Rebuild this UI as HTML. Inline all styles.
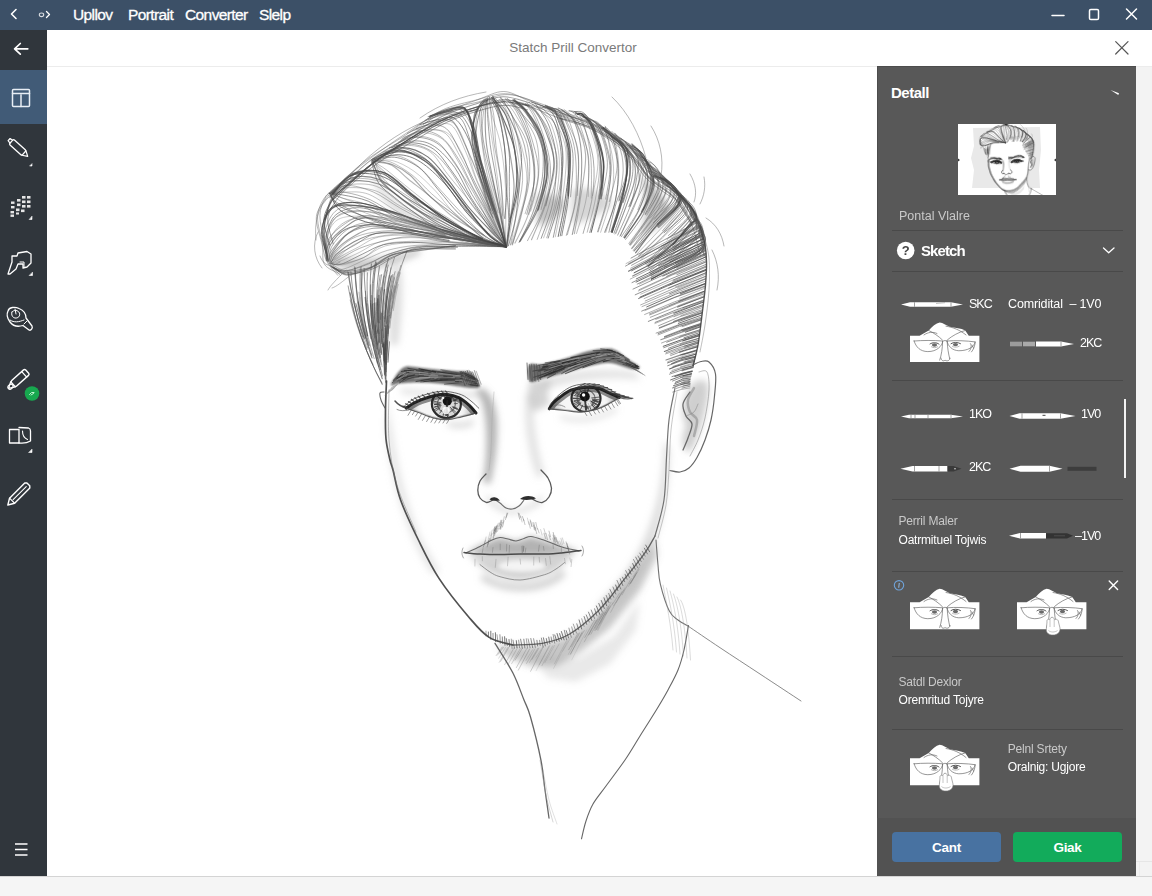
<!DOCTYPE html>
<html lang="en">
<head>
<meta charset="utf-8">
<title>Sketch Portrait Converter</title>
<style>
*{box-sizing:border-box;margin:0;padding:0}
html,body{width:1152px;height:896px;overflow:hidden;background:#f3f3f3;font-family:"Liberation Sans",sans-serif;}
#app{position:relative;width:1152px;height:896px;overflow:hidden;background:#f3f3f3}
.abs{position:absolute}
#titlebar{left:0;top:0;width:1152px;height:30px;background:#3c5067;color:#fff}
#titlebar .m{position:absolute;top:5px;font-size:15.5px;line-height:20px;color:#fff;white-space:nowrap;letter-spacing:-0.6px;-webkit-text-stroke:0.3px #fff}
#sidebar{left:0;top:30px;width:47px;height:846px;background:#30363c}
#sidebar .sel{position:absolute;left:0;top:39.500px;width:47px;height:54.500px;background:#415b77}
#header{left:47px;top:30px;width:1105px;height:37px;background:#fff;border-bottom:1px solid #ececec}
#header .t{position:absolute;left:0;width:1052px;top:9.500px;text-align:center;font-size:13.5px;line-height:16px;color:#7a7a7a;letter-spacing:0}
#canvas{left:47px;top:67px;width:831px;height:809px;background:#fff}
#rstrip{left:1136px;top:67px;width:16px;height:809px;background:#f3f3f3}
#panel{left:877px;top:66px;width:259px;height:810px;background:#585858;color:#fff;box-shadow:inset 1px 1px 0 #4c4c4c}
#panel .foot{position:absolute;left:0;top:752px;width:259px;height:58px;background:#525252}
#panel .hr{position:absolute;left:15px;width:231px;height:1px;background:#494949}
#panel .tx{position:absolute;white-space:nowrap;line-height:14px;font-size:12px;letter-spacing:-0.2px}
#panel .g{color:#c9c9c9}
#panel .w{color:#fff}
#panel .lb{position:absolute;white-space:nowrap;font-size:12.5px;line-height:14px;color:#fff;letter-spacing:-1px}
.btn{position:absolute;top:766px;height:30px;width:109px;border-radius:4px;color:#fff;font-size:13.500px;font-weight:bold;text-align:center;line-height:32px;letter-spacing:-0.3px}
#bottom{left:0;top:876px;width:1152px;height:20px;background:#f5f5f5;border-top:1px solid #d4d4d4}
svg{position:absolute;overflow:visible}
</style>
</head>
<body>
<div id="app">
<!-- ===== title bar ===== -->
<div id="titlebar" class="abs">
  <svg style="left:0;top:0" width="1152" height="30" viewBox="0 0 1152 30" fill="none" stroke="#fff" stroke-width="1.6" stroke-linecap="round" stroke-linejoin="round">
    <path d="M16 9.5 L11.5 14 L16 18.5"/>
    <path d="M46.5 11.5 L49.5 14.5 L46.5 17.5" stroke-width="1.3"/>
    <ellipse cx="41.5" cy="14.8" rx="2.2" ry="1.8" stroke-width="1.1" opacity=".8"/>
    <path d="M1052 15.5 H1064" stroke-width="1.5"/>
    <rect x="1089.5" y="9.5" width="9" height="10" rx="1.3" stroke-width="1.5"/>
    <path d="M1126.5 9 L1136.5 19 M1136.5 9 L1126.5 19" stroke-width="1.5"/>
  </svg>
  <span class="m" style="left:73px">Upllov</span>
  <span class="m" style="left:128px">Portrait</span>
  <span class="m" style="left:185px">Converter</span>
  <span class="m" style="left:259px">Slelp</span>
</div>

<!-- ===== header row ===== -->
<div id="header" class="abs">
  <div class="t">Statch Prill Convertor</div>
  <svg style="left:1068px;top:11px" width="14" height="14" viewBox="0 0 14 14" fill="none" stroke="#555" stroke-width="1.2" stroke-linecap="round"><path d="M0.7 0.7 L13 13 M13 0.7 L0.7 13"/></svg>
</div>

<!-- ===== canvas ===== -->
<div id="canvas" class="abs"></div>
<div id="rstrip" class="abs"><div style="position:absolute;left:0;top:794px;width:16px;height:1px;background:#e6e6e6"></div><div style="position:absolute;left:3px;top:795px;width:1px;height:14px;background:#ececec"></div></div>

<!-- ===== sidebar ===== -->
<div id="sidebar" class="abs">
  <div class="sel"></div>
  <svg style="left:0;top:0" width="47" height="846" viewBox="0 30 47 846" fill="none" stroke="#fff" stroke-width="1.5" stroke-linecap="round" stroke-linejoin="round">
    <!-- back arrow -->
    <path d="M27.800 48.800 H15 M20.300 43.500 L14.600 48.800 L20.300 54.100" stroke-width="1.700"/>
    <!-- layout icon -->
    <rect x="12.5" y="89.500" width="17" height="17" rx="1" stroke="#e8eef5"/>
    <path d="M12.500 93.500 H29.500 M21 95 V106.500" stroke="#e8eef5"/>
    <!-- pen -->
    <g transform="translate(19.500 149) rotate(42)">
      <rect x="-11" y="-3.300" width="17" height="6.600" rx="1.200" stroke-width="1.300"/>
      <path d="M6 -3 L11 0 L6 3 M-11 -2 L-14 -1.500 L-14 1.500 L-11 2" stroke-width="1.200"/>
    </g>
    <path d="M30 166 L32 166 L32 164 Z" fill="#fff" stroke-width=".6"/>
    <!-- grid -->
    <g fill="#e6e6e6" stroke="none">
      <rect x="22" y="196" width="3.500" height="2.600"/><rect x="27" y="196" width="3.500" height="2.600"/>
      <rect x="17" y="199" width="3.500" height="2.600"/><rect x="22" y="200.500" width="3.500" height="2.600"/><rect x="27" y="200.500" width="3.500" height="2.600"/>
      <rect x="11" y="201.500" width="3.500" height="2.400"/>
      <rect x="17" y="203.500" width="3.500" height="2.600"/><rect x="22" y="205" width="3.500" height="2.600"/><rect x="27" y="205" width="3.500" height="2.600"/>
      <rect x="11" y="206" width="3.500" height="2.400"/>
      <rect x="16" y="208.500" width="3.500" height="2.600"/><rect x="21" y="209.500" width="3.500" height="2.600"/>
      <rect x="10.500" y="211" width="3.500" height="2.400"/><rect x="10.500" y="214.500" width="3.500" height="2.400"/>
      <rect x="16" y="212.500" width="3" height="2"/>
    </g>
    <path d="M29.500 219.500 L32 219.500 L32 216.500 Z" fill="#fff" stroke-width=".6"/>
    <!-- shape -->
    <path d="M17 256 L18 253 L27 251.500 L31 254 L31 263 L27 267 L23 268 L23 264 L18 264 L16 269 L10 274 L8 274 L10 268 L12 262 L12 256 Z" stroke-width="1.300"/>
    <path d="M20 262 L24 262 L24 267" stroke-width="1"/>
    <path d="M29.500 275.500 L32.500 275.500 L32.500 272.500 Z" fill="#fff" stroke-width=".6"/>
    <!-- bulb/blob -->
    <path d="M8 311 C9 307 15 306.500 19 308.500 C24 310.500 26 314 26 318 L32 326 C33 328 31 331 29 330 L23 325.500 C18 327 13 326 10 322 C7 318 6.500 314 8 311 Z" stroke-width="1.300"/>
    <path d="M12 312 C14 309.500 18 310 19.500 313 C20.500 316 18 318.500 15 318 C12.500 317.500 11 315 12 312 Z M10 320 C14 323 19 322 24 320 M15 309 L16 314 M24 324 L27 321" stroke-width="1"/>
    <!-- pencil with green dot -->
    <g transform="translate(19 379) rotate(-42)">
      <rect x="-8" y="-3.700" width="19" height="7.400" rx="1.500" stroke-width="1.400"/>
      <path d="M-8 -3.500 L-14 0 L-8 3.500 M7 -3.700 V3.700" stroke-width="1.300"/>
      <ellipse cx="-11.500" cy="0" rx="2.800" ry="2.200" stroke-width="1.100"/>
    </g>
    <circle cx="32" cy="393.500" r="7.300" fill="#17a84f" stroke="none"/>
    <path d="M29.500 394.500 L31.500 392.500 L34 392.500 M31 395 L33.500 393.500" stroke="#bff5d2" stroke-width="1"/>
    <!-- two pages -->
    <path d="M9.500 429.500 H19 V443 H9.500 Z" stroke-width="1.300"/>
    <path d="M19 427.500 L28.500 428 C30 428.500 30.500 430 30.500 431 V441 C28 442.500 23 443.500 19 443" stroke-width="1.300"/>
    <path d="M22.500 431 C22.500 435 24 438 27.500 439.500" stroke-width="1.100"/>
    <path d="M29 452.500 L32 452.500 L32 449.500 Z" fill="#fff" stroke-width=".6"/>
    <!-- pencil -->
    <g transform="translate(18.800 494) rotate(-45)">
      <path d="M-9.500 -3.600 H12 L13.500 -2 V2 L12 3.600 H-9.500 L-15.500 0 Z" stroke-width="1.400"/>
      <path d="M-9.500 -3.600 V3.600 M-8 0 H10.500" stroke-width="1.100"/>
    </g>
    <!-- hamburger -->
    <path d="M15 844 H27.500 M15 849.500 H27.500 M15 855 H27.500" stroke-width="1.600" stroke-linecap="butt"/>
  </svg>
</div>

<div id="bottom" class="abs"></div>
<svg class="abs" style="left:0;top:0" width="1152" height="896" viewBox="0 0 1152 896" fill="none" stroke-linecap="round" stroke-linejoin="round">
<defs>
<filter id="bl1" x="-20%" y="-20%" width="140%" height="140%"><feGaussianBlur stdDeviation="0.8"/></filter>
<filter id="bl2" x="-20%" y="-50%" width="140%" height="200%"><feGaussianBlur stdDeviation="2"/></filter>
<filter id="bl4" x="-5%" y="-5%" width="110%" height="110%"><feGaussianBlur stdDeviation="3.5"/></filter>
</defs>
<g id="portrait">
<path d="M505.6 246.8C494 243.6 455.1 233.8 436.1 227.9C417.2 222.1 405.2 215.9 391.8 211.7C378.5 207.5 366.1 203.2 356.1 202.7C346.2 202.1 337.9 203.6 332.1 208.4C326.4 213.1 322.3 223.1 321.5 231.3C320.7 239.4 326.5 253.1 327.5 257.5" stroke="#585858" stroke-width="0.9" opacity="0.74"/>
<path d="M436.8 230C429.4 227.3 406.1 217.6 392.7 213.6C379.2 209.6 365.7 206.4 356.1 206C346.5 205.6 340.6 206.6 335.3 211.3C330 215.9 325.9 225.9 324.4 233.9C322.9 241.9 326 254.9 326.3 259" stroke="#585858" stroke-width="0.8" opacity="0.55"/>
<path d="M505.9 246.4C494.9 243.5 458.3 234 439.6 229.2C421 224.4 407.1 221.2 393.8 217.6C380.5 214 369.5 208.2 359.8 207.7C350.1 207.3 341.3 210.2 335.8 214.9C330.2 219.6 328.1 228.2 326.5 235.9C324.9 243.5 326.3 256.5 326.3 260.6" stroke="#585858" stroke-width="0.9" opacity="0.67"/>
<path d="M506 246C495.1 243.5 458.8 235.4 440.4 230.9C422 226.3 409 222.1 395.5 218.7C381.9 215.4 368.9 211.1 359.1 210.7C349.3 210.3 342.3 212 336.7 216.4C331.1 220.8 326.8 230.1 325.4 237.2C324 244.4 327.9 255.6 328.4 259.3" stroke="#585858" stroke-width="1" opacity="0.40"/>
<path d="M506.6 247C495.4 244.2 458 235.3 439.7 230.3C421.5 225.3 410.2 220.3 397.2 217.1C384.1 213.9 371.5 211.2 361.4 211.2C351.3 211.2 342.2 212.9 336.6 217.1C331 221.3 329.4 229.4 327.8 236.4C326.1 243.5 326.8 255.5 326.5 259.4" stroke="#585858" stroke-width="1" opacity="0.41"/>
<path d="M506.5 247C495.8 244.2 460.9 235.1 442.7 230.6C424.4 226 410.1 222 397.1 219.6C384 217.2 374.2 216.1 364.3 216.1C354.5 216.1 344.4 215.8 338 219.5C331.7 223.2 328.2 231.5 326.4 238.2C324.6 245 327.3 256.5 327.4 260.2" stroke="#585858" stroke-width="0.8" opacity="0.38"/>
<path d="M442.5 232.1C435.2 230.5 412.1 224.5 398.7 222C385.3 219.6 371.6 217.2 362.1 217.5C352.6 217.9 347.2 220.4 341.7 224.1C336.3 227.9 331.8 234.4 329.4 240.2C327 246 327.7 255.8 327.4 259" stroke="#585858" stroke-width="1" opacity="0.40"/>
<path d="M505.6 246.4C494.8 243.8 458.5 235 440.6 230.7C422.6 226.5 410.4 223.4 397.7 220.9C385.1 218.4 373.6 215 364.5 215.7C355.5 216.4 349.5 220.7 343.3 224.9C337.2 229.2 330.2 235.1 327.6 241C324.9 246.8 327.4 256.8 327.4 260" stroke="#585858" stroke-width="0.7" opacity="0.67"/>
<path d="M506 246.1C495.2 243.9 459.3 236.4 441.5 232.9C423.7 229.5 412.1 227.8 399.4 225.3C386.6 222.8 374.3 217.6 365.3 217.9C356.2 218.2 351.4 222.7 345.2 227.1C339.1 231.4 331.7 238.3 328.6 243.9C325.5 249.5 327 258 326.6 260.8" stroke="#585858" stroke-width="1.1" opacity="0.67"/>
<path d="M444.8 234.3C437.7 232.7 415.3 226.4 402.2 224.5C389.2 222.5 375.9 221.7 366.6 222.7C357.3 223.6 352.3 226.2 346.5 230.1C340.8 234.1 334.9 241.3 331.9 246.3C329 251.3 329.4 257.8 329 260.1" stroke="#585858" stroke-width="0.9" opacity="0.50"/>
<path d="M505.7 246.3C495.6 244.7 462.3 239.6 445 236.6C427.6 233.5 414.1 229.9 401.7 228C389.4 226 380.2 224.6 370.8 224.8C361.3 225.1 351.9 226 345.2 229.4C338.5 232.7 333.3 239.7 330.3 245C327.4 250.4 328 258.8 327.5 261.5" stroke="#585858" stroke-width="1.1" opacity="0.67"/>
<path d="M445.8 237.4C438.9 236 417 231.3 404.5 229.1C392 226.9 379.9 223.8 370.6 224.4C361.3 225.1 355 228.5 348.9 232.8C342.7 237.1 337.2 245.6 333.8 250.3C330.4 255 329.3 259.4 328.4 261.2" stroke="#585858" stroke-width="1.1" opacity="0.63"/>
<path d="M505.6 247.1C495.8 245 463.5 237.5 446.8 234.8C430.1 232.1 417.7 232.2 405.3 230.8C392.8 229.4 381.6 225.9 372.1 226.3C362.7 226.7 355.6 229.2 348.7 233.3C341.9 237.5 334.5 246.5 331.2 251.2C328 256 329.6 260 329.3 261.8" stroke="#585858" stroke-width="1.1" opacity="0.53"/>
<path d="M505.7 246.3C495.7 244.6 462.3 239 445.7 236.3C429 233.5 417.9 231.2 405.8 229.9C393.7 228.5 382 227 373.1 228.3C364.2 229.5 358.7 233.4 352.2 237.3C345.7 241.2 337.9 247.8 334.3 251.9C330.6 256 331 260.2 330.3 261.8" stroke="#585858" stroke-width="1.1" opacity="0.55"/>
<path d="M445.8 235.9C439.4 235 419.3 231.2 407.4 230.6C395.5 229.9 383.6 230.7 374.4 232.1C365.1 233.5 358.4 235.4 351.9 238.8C345.3 242.3 338.8 249.3 335.2 253C331.5 256.7 330.9 259.8 330.1 261.1" stroke="#585858" stroke-width="0.9" opacity="0.46"/>
<path d="M448.8 240.4C441.9 239.3 419.3 235 407.1 233.8C395 232.7 384.9 232.2 376 233.5C367.2 234.8 360.7 238.3 354 241.8C347.4 245.3 340.1 250.9 336.2 254.4C332.3 258 331.7 261.7 330.8 263.2" stroke="#585858" stroke-width="1.1" opacity="0.70"/>
<path d="M506.5 247C496.6 245.5 463.3 240.2 446.9 237.8C430.5 235.4 419.8 233.5 408 232.8C396.2 232.1 384.9 231.3 376.1 233.3C367.3 235.4 361.4 241.4 355.1 244.9C348.8 248.4 342.5 251.4 338.4 254.4C334.3 257.5 331.6 261.8 330.3 263.3" stroke="#585858" stroke-width="0.8" opacity="0.68"/>
<path d="M448.8 241.8C442.4 240.5 422.1 235 410.3 234.1C398.4 233.3 387.1 234.9 377.8 236.6C368.6 238.2 361.7 240.6 354.8 244.1C348 247.7 341.1 254.7 336.7 257.8C332.3 261 329.8 262.3 328.4 263.2" stroke="#585858" stroke-width="0.9" opacity="0.39"/>
<path d="M506 246.1C496.9 245.4 467.3 243.7 451.6 241.9C436 240.2 424.2 236.4 412.1 235.6C399.9 234.8 387.8 235.2 378.8 237.1C369.9 239 365.3 243.5 358.3 247.1C351.3 250.7 341.6 255.7 337.1 258.6C332.5 261.4 332.2 263.3 331.3 264.3" stroke="#585858" stroke-width="0.8" opacity="0.43"/>
<path d="M506.2 246.1C496.6 245.5 464.4 243.8 448.5 242.2C432.6 240.6 421.8 236.9 410.8 236.7C399.9 236.5 391.3 239.3 382.8 241.3C374.2 243.2 366.7 245.5 359.7 248.3C352.7 251.2 345.5 256.1 340.8 258.6C336 261.1 332.9 262.6 331.3 263.5" stroke="#585858" stroke-width="0.8" opacity="0.57"/>
<path d="M449.8 240.5C443.2 240 422 237.5 410.5 237.6C399.1 237.8 389.5 239 380.8 241.5C372.2 244 365.7 249.3 358.8 252.7C351.8 256 344.1 259.7 339.2 261.5C334.3 263.3 331.1 263 329.4 263.3" stroke="#585858" stroke-width="0.7" opacity="0.47"/>
<path d="M506.1 246.2C497 246 467.3 245.3 451.6 244.7C435.8 244.1 423 242.4 411.6 242.4C400.3 242.4 391.6 242.8 383.5 244.7C375.3 246.6 369.8 250.7 362.7 254C355.7 257.2 346.3 262.6 341.2 264.2C336.1 265.9 333.6 263.8 332.1 263.7" stroke="#585858" stroke-width="1" opacity="0.62"/>
<path d="M505.8 246.1C496.6 245.4 465.9 242.6 450.7 241.8C435.6 241 426.1 240.7 414.9 241.2C403.7 241.6 391.9 241.8 383.4 244.5C374.9 247.2 370.6 254.3 363.8 257.5C357 260.7 348.1 262.7 342.5 263.8C336.8 264.8 332.1 263.7 330 263.7" stroke="#585858" stroke-width="0.9" opacity="0.43"/>
<path d="M506.6 247.2C497.6 246.5 467.9 243.9 453 243.1C438 242.4 428 242.1 416.7 242.6C405.4 243 394.3 243.4 385.4 245.9C376.4 248.4 370.3 254.6 363.2 257.8C356 260.9 347.9 263.9 342.6 264.8C337.2 265.7 332.9 263.4 331 263.1" stroke="#585858" stroke-width="0.8" opacity="0.41"/>
<path d="M505.4 246.4C496.6 246.2 467.2 245.3 452.2 245.1C437.3 245 426.5 244.6 415.8 245.4C405 246.3 395.9 248.1 387.7 250.3C379.4 252.6 373.8 256.1 366.3 259.2C358.8 262.3 348.6 268.2 342.6 269.2C336.5 270.3 332.2 266.1 330.1 265.5" stroke="#585858" stroke-width="1" opacity="0.39"/>
<path d="M506.2 246.9C497.7 246.5 470.4 244.5 455.6 244.5C440.8 244.4 428.2 245 417.3 246.5C406.5 248.1 398.6 250.9 390.4 253.7C382.3 256.5 375.7 260.5 368.3 263.3C360.9 266.1 352.2 270.2 346.2 270.4C340.1 270.6 334.4 265.4 332 264.4" stroke="#585858" stroke-width="0.8" opacity="0.58"/>
<path d="M455.2 246.7C449 246.8 429.6 245.7 418.4 247C407.1 248.3 396 251.7 387.7 254.5C379.4 257.3 375.7 261.2 368.6 263.9C361.5 266.7 351.5 270.6 345.1 271C338.7 271.3 332.7 266.9 330.2 266" stroke="#585858" stroke-width="0.9" opacity="0.56"/>
<path d="M457.5 247.2C451 247.5 429.5 247.2 418.6 248.9C407.7 250.5 400.4 254 392.3 257.1C384.2 260.2 378 265.1 370 267.5C362 269.8 351 271.3 344.5 271.1C338 270.9 333.3 267.2 331.1 266.4" stroke="#585858" stroke-width="0.9" opacity="0.72"/>
<path d="M505.7 246.8C502 245.8 493.5 245.1 483.5 240.7C473.5 236.3 457.5 227.9 445.5 220.3C433.5 212.6 422.3 202.3 411.5 195C400.8 187.6 391.2 179.4 381.2 176.1C371.2 172.9 359.8 172.6 351.6 175.3C343.5 178.1 335.5 189.7 332.3 192.6" stroke="#585858" stroke-width="1" opacity="0.81"/>
<path d="M482.7 238.9C476.3 235.8 456.8 226.6 444.6 220C432.4 213.5 420.5 206.5 409.6 199.7C398.7 193 388.9 183.1 379.2 179.5C369.6 175.8 359.6 175.6 351.7 177.8C343.7 180.1 335 190.6 331.6 193.2" stroke="#585858" stroke-width="1.2" opacity="0.70"/>
<path d="M506 246.5C501.5 245.2 489.7 242.9 479.1 238.7C468.5 234.5 454 228.3 442.5 221.4C430.9 214.5 420 204.1 409.7 197.5C399.4 190.8 390.7 184.5 380.6 181.5C370.6 178.6 357.6 177.3 349.5 179.5C341.3 181.8 334.6 192.6 331.6 195.2" stroke="#585858" stroke-width="0.8" opacity="0.51"/>
<path d="M506.1 246.4C501.3 245.3 488.5 243.4 477.2 239.3C465.9 235.3 450.2 228.4 438.5 222.3C426.7 216.1 416.8 208.7 406.8 202.3C396.9 196 388.5 187.5 378.7 184.1C369 180.6 356.6 180.1 348.5 181.7C340.3 183.3 333.1 191.6 330.1 193.6" stroke="#585858" stroke-width="1.1" opacity="0.68"/>
<path d="M506.5 247.1C501.5 246.1 488.1 244.8 476.6 241.2C465.1 237.6 449.3 231.4 437.2 225.5C425.1 219.6 414.2 212.4 404.1 205.8C393.9 199.3 385.9 189.8 376.4 186.3C366.9 182.9 354.6 183.8 346.9 185C339.1 186.3 332.7 192.4 329.9 193.9" stroke="#585858" stroke-width="0.8" opacity="0.48"/>
<path d="M473.8 240.6C467.6 237.9 448.7 230.2 436.5 224.5C424.4 218.8 411 212 400.8 206.4C390.6 200.8 384.6 193.9 375.5 190.8C366.4 187.7 353.6 187.2 346.4 187.8C339.2 188.3 334.8 192.8 332.5 193.8" stroke="#585858" stroke-width="0.8" opacity="0.45"/>
<path d="M505.5 246.3C500.1 245.4 484.2 243.8 472.8 240.7C461.5 237.5 449.6 232.8 437.6 227.4C425.6 222 411.6 214.4 400.9 208.5C390.1 202.5 382.2 195.7 373.1 191.9C364 188.1 353.5 185 346.4 185.6C339.2 186.2 333 193.8 330.3 195.4" stroke="#585858" stroke-width="0.8" opacity="0.55"/>
<path d="M505.7 246.3C499.9 245.3 482.9 242.9 470.8 240.1C458.8 237.3 445.3 234 433.5 229.6C421.8 225.1 411.1 219.2 400.3 213.3C389.5 207.4 377.9 198 369 194.4C360 190.9 352.9 192.1 346.6 192C340.2 192 333.5 193.9 330.9 194.3" stroke="#585858" stroke-width="0.7" opacity="0.51"/>
<path d="M506.4 247.2C500.3 245.8 482.1 242 469.4 239C456.8 235.9 442.7 232.7 430.8 228.8C418.8 224.9 408.1 220.6 398 215.7C387.9 210.9 378.9 203.6 370.2 199.7C361.6 195.8 352.4 193.6 345.9 192.5C339.4 191.3 333.6 192.6 331.2 192.6" stroke="#585858" stroke-width="1" opacity="0.46"/>
<path d="M505.8 246.2C499.5 245.3 480.6 244.2 468.2 241.1C455.8 238.1 443.8 232.2 431.5 228.1C419.1 223.9 404.6 220.5 394.1 216C383.6 211.5 376.9 204.7 368.3 201.2C359.8 197.7 349.4 196.3 342.9 195C336.4 193.7 331.8 193.7 329.5 193.4" stroke="#585858" stroke-width="0.9" opacity="0.71"/>
<path d="M506 246.3C499.4 245.7 479.2 245.2 466.5 242.5C453.8 239.8 442 234 429.5 230C417.1 226 402.4 222.7 391.9 218.5C381.5 214.2 375.2 208.1 366.9 204.6C358.5 201.2 347.7 199.8 341.9 197.9C336.2 196 333.9 194 332.3 193.2" stroke="#585858" stroke-width="0.7" opacity="0.49"/>
<path d="M505.6 247C499.2 245.9 480.5 243 467.2 240.7C454 238.5 438.7 236.7 426.1 233.5C413.5 230.3 402 226.2 391.6 221.6C381.2 217.1 371.8 210.2 363.8 206.3C355.7 202.4 348.4 200.4 343.1 198.3C337.9 196.3 334.2 194.7 332.4 194" stroke="#585858" stroke-width="0.8" opacity="0.46"/>
<path d="M506.5 246.2C499.5 245.1 477.6 242.1 464.4 239.6C451.3 237.1 440.1 234.3 427.5 231.2C415 228 399.7 224 388.9 220.8C378.1 217.6 370.6 214.9 362.9 211.9C355.2 208.8 347.8 205.1 342.7 202.3C337.6 199.6 334.2 196.5 332.5 195.3" stroke="#585858" stroke-width="0.8" opacity="0.44"/>
<path d="M505.4 246.8C498.3 245.7 476.6 242.8 462.9 240.4C449.2 237.9 435.9 235.1 423.2 232.3C410.6 229.6 397.3 226.9 386.9 224C376.6 221.1 369.1 218.2 361 215.1C353 212.1 343.8 209.2 338.7 205.6C333.5 202 331.5 195.6 330.1 193.6" stroke="#585858" stroke-width="1" opacity="0.66"/>
<path d="M506 246.4C499 245.3 478.2 241.4 464.3 239.7C450.4 237.9 435.5 238.1 422.5 235.8C409.5 233.4 396.3 229 386.2 225.6C376.1 222.3 370.1 219.6 362.1 215.8C354 212.1 343.3 206.5 337.9 203.1C332.5 199.6 331.1 196.6 329.7 195.3" stroke="#585858" stroke-width="0.8" opacity="0.63"/>
<path d="M505.7 247.1C498.3 246 475.3 242.1 461.3 240C447.4 237.9 434.6 236.9 421.9 234.7C409.2 232.4 395.5 229.1 385.1 226.7C374.8 224.2 367.7 222.8 360 219.9C352.3 217 344.2 213.8 339.1 209.4C334 204.9 331.2 195.9 329.6 193.2" stroke="#585858" stroke-width="1" opacity="0.86"/>
<path d="M505.7 246.5C503 244.7 496.2 241.7 489.5 235.9C482.9 230.1 473.1 220.3 465.9 211.7C458.6 203.1 452.8 192.6 446 184.2C439.2 175.8 433 167.1 425.2 161.6C417.3 156 407.5 151.2 398.7 151.2C390 151.3 376.9 160.1 372.6 161.8" stroke="#585858" stroke-width="0.8" opacity="0.60"/>
<path d="M505.5 246C502.7 244 495.2 239.3 488.8 233.8C482.4 228.3 474.5 221.4 467.2 213.1C459.9 204.8 452.8 192.5 445 183.9C437.1 175.4 428.2 166.8 420.4 161.9C412.6 157 406.1 155 398.1 154.7C390.2 154.5 377.1 159.3 372.8 160.2" stroke="#585858" stroke-width="1" opacity="0.74"/>
<path d="M506.4 246.8C503 245.1 493.1 242 485.6 236.4C478.2 230.9 469.5 221.3 461.8 213.4C454.1 205.4 446.7 196.7 439.4 188.8C432.1 180.9 425.3 171.7 417.9 166.1C410.5 160.6 402.5 156.3 395.2 155.5C387.9 154.7 377.7 160.3 374.2 161.2" stroke="#585858" stroke-width="0.8" opacity="0.51"/>
<path d="M505.7 247C502.5 245.4 494.6 242.9 486.9 237.4C479.1 231.9 467.2 221.7 459.3 214C451.4 206.3 446.1 198.8 439.3 191C432.6 183.3 426.5 173.1 418.9 167.5C411.4 161.9 402.1 158 394.3 157.2C386.5 156.3 375.8 161.5 372.1 162.4" stroke="#585858" stroke-width="0.9" opacity="0.70"/>
<path d="M486 237.7C481.2 234.1 465.2 223.7 456.8 215.9C448.4 208.2 442.8 198.7 435.7 191.2C428.6 183.8 421.3 176.4 414 171.2C406.8 166.1 398.9 162.1 392.2 160.5C385.4 158.9 376.4 161.3 373.3 161.5" stroke="#585858" stroke-width="0.8" opacity="0.38"/>
<path d="M505.6 246.4C501.8 244.9 491 242.7 482.8 237.4C474.7 232.2 465.3 222.1 456.8 214.8C448.3 207.6 439 200.4 431.7 193.8C424.3 187.3 419.7 180.9 412.8 175.6C406 170.3 397 164.5 390.5 162C383.9 159.6 376.4 160.9 373.6 160.7" stroke="#585858" stroke-width="0.8" opacity="0.48"/>
<path d="M482.9 238C478.6 234.5 465.8 223.8 457.1 216.9C448.3 210 438.2 203.8 430.4 196.8C422.5 189.8 416.1 180.4 409.8 175C403.5 169.7 398.7 167.1 392.7 164.7C386.7 162.3 377.1 161.4 374 160.7" stroke="#585858" stroke-width="1.1" opacity="0.54"/>
<path d="M484 235.2C479 232.3 463 224.3 454 217.8C444.9 211.3 437.4 202.6 429.8 196.2C422.2 189.8 414.7 184.3 408.4 179.2C402 174 397.6 168.1 391.7 165.2C385.8 162.3 376.1 162.5 373 161.9" stroke="#585858" stroke-width="1.1" opacity="0.45"/>
<path d="M506.6 246.6C501.9 245.4 488.3 243.3 478.8 239.2C469.3 235.1 458.4 228 449.7 221.9C441 215.8 434.1 208.7 426.5 202.5C418.9 196.3 410.9 190.1 404.3 184.6C397.6 179.2 391.6 173.8 386.6 170C381.5 166.2 376.1 163.3 374 162" stroke="#585858" stroke-width="0.8" opacity="0.45"/>
<path d="M505.9 246.1C501.4 244.9 488.1 243.2 478.8 238.7C469.6 234.2 459.3 225.1 450.3 219.3C441.3 213.4 432.7 209.2 424.7 203.8C416.7 198.3 408.8 192 402.2 186.7C395.6 181.5 390 176.5 385.2 172.3C380.3 168.1 375.2 163.2 373.2 161.4" stroke="#585858" stroke-width="0.8" opacity="0.52"/>
<path d="M506.2 246.5C501.6 244.8 488.4 240.3 478.6 236.3C468.8 232.2 456.9 227.2 447.3 222.1C437.7 217.1 428.6 211.6 421.3 205.8C413.9 200.1 409.3 193 403.1 187.7C396.9 182.4 389.3 178.5 384.1 173.9C378.9 169.2 373.9 162.2 371.8 159.9" stroke="#585858" stroke-width="0.9" opacity="0.41"/>
<path d="M505.4 246.8C500.5 245.6 486 243.4 476.1 239.5C466.1 235.7 455.4 228.9 445.8 223.5C436.1 218.1 425.9 212.3 418.1 207.1C410.4 201.9 405.1 197.4 399.2 192.5C393.2 187.6 386.6 182.9 382.4 177.7C378.3 172.6 375.8 164.4 374.5 161.7" stroke="#585858" stroke-width="1" opacity="0.45"/>
<path d="M475.3 240.2C470.2 237.3 454.1 227.8 444.4 222.8C434.7 217.9 425.1 214.9 417.1 210.3C409 205.6 402.1 200 396.1 194.9C390.2 189.8 385.6 185.4 381.6 179.7C377.6 174.1 373.5 164.1 371.9 161" stroke="#585858" stroke-width="1.1" opacity="0.45"/>
<path d="M505.8 246C500.5 244.7 484.9 241.3 474.3 238C463.8 234.8 451.9 231.1 442.4 226.5C432.8 221.8 424.6 215.4 417 210.1C409.3 204.8 402.4 199.3 396.4 194.5C390.5 189.7 385.2 186.6 381.2 181.3C377.2 175.9 374 165.3 372.6 162.1" stroke="#585858" stroke-width="1.1" opacity="0.73"/>
<path d="M506.6 246.8C501.2 245.8 485.8 243.9 474.4 240.9C463 237.8 448.3 233.3 438.2 228.6C428.2 223.8 421.3 217.6 414.1 212.4C406.8 207.3 400.6 202.6 394.8 197.7C388.9 192.8 382.6 189.2 378.8 183.3C374.9 177.3 372.8 165.5 371.6 162" stroke="#585858" stroke-width="0.9" opacity="0.75"/>
<path d="M506.2 246.4C503.7 239.3 495.4 217.2 490.9 203.9C486.4 190.6 482.2 178.7 479.3 166.7C476.3 154.6 475.4 141.2 473 131.4C470.5 121.6 469.1 111.2 464.5 107.9C460 104.6 451.7 110.3 445.6 111.7C439.6 113.2 431 115.8 428.1 116.6" stroke="#585858" stroke-width="1" opacity="0.57"/>
<path d="M506.1 246.7C503.7 240.1 496 220.7 491.6 207.3C487.3 193.9 483 178.9 480.1 166.3C477.2 153.8 477.3 141.7 474 132.2C470.7 122.8 464.9 112.6 460.2 109.6C455.4 106.6 450.9 112.4 445.6 114C440.3 115.6 431.3 118.4 428.4 119.3" stroke="#585858" stroke-width="0.9" opacity="0.53"/>
<path d="M492.4 210.3C490.4 203.5 483.7 182.1 480.4 169.4C477 156.8 475.7 143.7 472.2 134.5C468.7 125.2 464.6 117.5 459.4 113.9C454.2 110.4 446.8 112.1 441.1 113.2C435.4 114.3 427.8 119.3 425.2 120.5" stroke="#585858" stroke-width="0.9" opacity="0.70"/>
<path d="M506.1 246.6C504 240.6 497.8 223.3 493.1 210.8C488.4 198.2 481.7 183.7 477.7 171.3C473.6 158.9 471.9 145.3 468.8 136.3C465.8 127.3 464 120.9 459.4 117.3C454.9 113.6 447.3 113.3 441.3 114.4C435.3 115.6 426.4 122.5 423.4 124.2" stroke="#585858" stroke-width="0.9" opacity="0.63"/>
<path d="M490.5 210.3C488.7 204.4 482.8 186.5 479.3 175C475.8 163.5 473.7 150.9 469.6 141.5C465.6 132.2 460.4 122.5 455.1 118.9C449.8 115.2 443.8 118.6 437.9 119.6C432 120.5 422.8 123.9 419.8 124.7" stroke="#585858" stroke-width="1" opacity="0.71"/>
<path d="M505.4 246.3C503 240.9 495.5 225.3 491.1 213.9C486.8 202.6 483.5 189.7 479.2 178.3C475 167 470.1 155.3 465.6 145.8C461.2 136.3 457.5 125.2 452.6 121.2C447.7 117.2 442.5 120.5 436.5 121.8C430.4 123 419.8 127.6 416.5 128.8" stroke="#585858" stroke-width="1.1" opacity="0.54"/>
<path d="M493 214.4C490.1 208.4 480.7 189.7 476.1 178.1C471.6 166.5 469.4 153.9 465.6 144.7C461.8 135.6 459.1 126.9 453.3 123C447.5 119.1 437.3 120.3 430.9 121.4C424.5 122.5 417.6 128.1 414.9 129.5" stroke="#585858" stroke-width="0.8" opacity="0.39"/>
<path d="M492.9 213.8C490.2 208.3 481.3 191.4 476.6 180.8C472 170.2 469.3 159.5 465.1 150.2C460.9 140.9 456.9 129.1 451.4 125.2C445.9 121.2 438.5 125.6 432 126.6C425.5 127.5 415.6 130 412.3 130.7" stroke="#585858" stroke-width="0.8" opacity="0.42"/>
<path d="M493.1 217.6C490 211.7 480.1 193 474.7 182.1C469.4 171.3 465.4 161.5 460.7 152.7C456 143.8 452.1 133.5 446.6 128.9C441.1 124.3 434.2 124.4 427.7 125.2C421.2 125.9 410.8 132 407.4 133.4" stroke="#585858" stroke-width="1" opacity="0.51"/>
<path d="M492.1 216.7C489.2 211.5 479.6 196.3 474.6 185.8C469.6 175.3 466.7 162.6 462 153.7C457.3 144.8 452.8 136.3 446.6 132.5C440.3 128.6 431.5 129.9 424.4 130.6C417.3 131.4 407.4 136.1 404 137.1" stroke="#585858" stroke-width="0.8" opacity="0.38"/>
<path d="M506.6 246C504.1 241.6 496.6 229.6 491.4 219.7C486.3 209.8 480.9 197.3 475.6 186.6C470.3 176 464.7 164.7 459.7 155.8C454.7 147 451.2 137.8 445.5 133.5C439.8 129.2 432.6 129.2 425.4 130C418.1 130.8 406 137 402.2 138.5" stroke="#585858" stroke-width="0.9" opacity="0.42"/>
<path d="M506.3 246.8C504 242.5 498 230.7 492.5 221C487.1 211.3 479.1 198.9 473.5 188.6C467.8 178.3 464 167.9 458.6 159.3C453.3 150.8 447.9 142.1 441.5 137.3C435.2 132.5 427.3 130.2 420.5 130.7C413.7 131.2 404.2 138.5 400.9 140.1" stroke="#585858" stroke-width="0.9" opacity="0.51"/>
<path d="M506 246.6C503.7 242.7 497.6 232.3 492.3 223C486.9 213.7 479.9 201.4 474 190.8C468.1 180.1 462.1 167.7 456.9 159.1C451.6 150.5 448.5 143.5 442.5 139.1C436.5 134.7 428.1 132.3 420.8 132.7C413.5 133.2 402.3 140.3 398.6 141.9" stroke="#585858" stroke-width="0.9" opacity="0.42"/>
<path d="M505.7 246.2C503.1 242.7 495.5 233.7 490.2 224.8C484.9 216 479.8 203.4 473.9 193.1C467.9 182.8 460.3 171.6 454.3 163.1C448.2 154.6 444.2 146.7 437.7 142.2C431.2 137.7 422.5 135.7 415.2 136.2C407.9 136.7 397.5 143.8 394 145.3" stroke="#585858" stroke-width="1" opacity="0.41"/>
<path d="M505.9 247.2C503.6 243.6 497.8 234.4 492.1 225.6C486.5 216.8 478 204.6 471.9 194.3C465.8 183.9 461.5 172.2 455.6 163.6C449.7 155.1 443.4 147.1 436.4 142.8C429.4 138.4 420.6 136.9 413.6 137.4C406.7 137.8 397.8 144 394.6 145.3" stroke="#585858" stroke-width="0.9" opacity="0.60"/>
<path d="M506.1 246.5C503.7 243.4 497.6 235.8 491.8 227.7C486 219.6 477.5 208 471.3 198C465.1 187.9 460.8 176 454.7 167.4C448.5 158.9 441.3 151.1 434.6 146.6C427.9 142.2 421.8 140.7 414.7 140.9C407.5 141.1 395.5 146.7 391.7 147.8" stroke="#585858" stroke-width="1" opacity="0.60"/>
<path d="M506.2 246.1C503.5 243.2 496.1 236.3 490.3 228.7C484.6 221.1 478.2 210.3 471.7 200.6C465.2 190.8 457.6 178.8 451.2 170.2C444.8 161.6 440.2 153.6 433.4 149C426.6 144.4 417.6 142.8 410.2 142.7C402.9 142.5 392.9 147.1 389.4 148" stroke="#585858" stroke-width="1" opacity="0.64"/>
<path d="M506.6 246C503.9 243 496.6 234.8 490.7 227.8C484.8 220.8 478 213.6 471.3 204.2C464.6 194.9 457.3 180.5 450.8 171.7C444.2 162.9 438.8 156.1 431.8 151.5C424.8 146.9 416.6 144.1 408.9 144.2C401.2 144.3 389.5 150.8 385.6 152.1" stroke="#585858" stroke-width="0.9" opacity="0.52"/>
<path d="M506.2 246.5C503.8 243.5 497.2 235.9 491.4 228.8C485.7 221.6 478.9 212.7 471.6 203.6C464.3 194.6 454.8 183.1 447.8 174.4C440.8 165.7 436.6 156.2 429.6 151.4C422.6 146.5 413.5 145.3 405.9 145.4C398.2 145.6 387.4 151.1 383.7 152.3" stroke="#585858" stroke-width="0.8" opacity="0.46"/>
<path d="M506 246.3C503.6 243.9 497.8 238.6 491.4 231.9C485 225.2 474.7 214.6 467.6 206C460.5 197.4 455.3 188.5 448.7 180.3C442.1 172.1 435.4 162.4 427.8 156.9C420.1 151.5 410.8 147.9 403 147.6C395.1 147.3 384.3 154 380.5 155.2" stroke="#585858" stroke-width="1.1" opacity="0.81"/>
<path d="M505.8 246.7C502.9 244.7 494.9 240.7 488.6 234.6C482.2 228.6 474.9 219.4 467.7 210.3C460.6 201.2 452.9 188.9 445.8 180.2C438.6 171.6 432.6 163.8 425 158.4C417.3 153 407.8 148.3 399.9 148C392.1 147.6 381.7 154.9 378 156.3" stroke="#585858" stroke-width="0.9" opacity="0.63"/>
<path d="M506.2 246.8C504.2 241.2 498.3 225.4 494.4 213C490.5 200.6 486 184.3 482.9 172.3C479.8 160.2 476.7 150.8 475.8 140.5C475 130.3 476 117.4 477.9 110.6C479.8 103.9 485.6 102 487.2 100.3" stroke="#585858" stroke-width="0.8" opacity="0.53"/>
<path d="M505.7 246.1C503.9 240.3 498.2 222.9 494.7 210.9C491.3 198.9 488.3 185.9 485.2 174.3C482 162.7 476.9 151.9 476 141.4C475.2 130.8 478 117.9 480 111C481.9 104.1 486.5 101.8 487.8 100" stroke="#585858" stroke-width="1" opacity="0.61"/>
<path d="M498.1 212.7C496.3 206.5 490.2 187.4 487.4 175.4C484.7 163.4 483 151.4 481.7 140.7C480.4 130.1 479.1 118.3 479.8 111.4C480.5 104.6 484.9 101.5 485.9 99.5" stroke="#585858" stroke-width="0.7" opacity="0.54"/>
<path d="M506 246.6C504.9 240.7 502.3 222.9 499.6 211.1C496.8 199.4 492.4 187.7 489.6 176.1C486.7 164.6 483.4 152.4 482.4 141.8C481.4 131.1 482.7 119 483.5 112.2C484.3 105.3 486.5 102.6 487.1 100.7" stroke="#585858" stroke-width="0.7" opacity="0.60"/>
<path d="M506.1 246.8C505.2 241.2 502.9 224.5 500.5 212.8C498.1 201.2 494.4 188.4 491.6 176.8C488.8 165.2 485.5 153.7 483.8 143.2C482.1 132.6 480.7 121.1 481.4 113.7C482.1 106.3 486.9 101.2 487.9 98.7" stroke="#585858" stroke-width="1" opacity="0.50"/>
<path d="M506.3 246.3C505.3 240.9 502.2 225.2 499.9 214C497.7 202.8 495.2 190.8 492.9 179.1C490.6 167.4 487.6 154.8 486.4 143.8C485.1 132.8 485.1 120.5 485.3 113C485.4 105.6 487 101.3 487.4 99" stroke="#585858" stroke-width="1.1" opacity="0.60"/>
<path d="M505.8 246.4C505.1 241.2 503.1 227 501.4 215.4C499.7 203.7 497.6 188.3 495.7 176.6C493.9 164.8 491.6 155.6 490.2 144.7C488.9 133.8 487.8 119.3 487.3 111.4C486.9 103.5 487.7 99.7 487.8 97.3" stroke="#585858" stroke-width="0.8" opacity="0.69"/>
<path d="M502.8 216C502 210 499.5 192 497.8 180.1C496.1 168.2 494.4 155.7 492.8 144.7C491.2 133.7 488.8 121.7 488.2 114.1C487.5 106.5 488.6 101.8 488.7 99.4" stroke="#585858" stroke-width="0.7" opacity="0.44"/>
<path d="M506.5 246.8C505.9 241.9 503.9 228.6 502.9 217.5C502 206.4 502.3 192.6 500.8 180.4C499.4 168.1 495.8 155.2 494.2 144C492.5 132.8 491.8 120.4 490.9 112.9C490 105.4 489.4 101.1 489.1 98.8" stroke="#585858" stroke-width="1.1" opacity="0.40"/>
<path d="M504.3 218.2C503.6 211.6 501.9 190.6 500.5 178.5C499.1 166.4 497 156 495.9 145.5C494.8 135 494.9 123.6 493.8 115.6C492.7 107.7 490.1 101 489.4 98" stroke="#585858" stroke-width="0.7" opacity="0.60"/>
<path d="M505.4 246C505.5 240.9 505.9 226.7 505.8 215.6C505.7 204.6 505.9 191.5 505 179.6C504.1 167.7 502.7 155.2 500.5 144.4C498.4 133.6 493.9 122.4 492 114.8C490.1 107.2 489.6 101.4 489.1 98.8" stroke="#585858" stroke-width="0.8" opacity="0.40"/>
<path d="M504.9 218.5C505.2 212.4 507.1 194.2 507 182.1C506.9 170 505.7 157.1 504.3 145.9C502.8 134.7 500.8 123.3 498.2 115.1C495.7 106.8 490.5 99.5 488.9 96.4" stroke="#585858" stroke-width="1" opacity="0.66"/>
<path d="M506.3 246.2C506.7 241.6 508.7 229 508.7 218.4C508.7 207.7 506.7 194.2 506 182.3C505.3 170.4 505.9 158.7 504.6 147.2C503.3 135.6 500.5 121.2 498.4 112.9C496.2 104.6 492.7 99.9 491.5 97.3" stroke="#585858" stroke-width="1" opacity="0.59"/>
<path d="M509.5 219.3C509.4 213.1 509.4 193.6 509.3 181.8C509.2 170.1 510.3 160.3 508.8 149C507.4 137.6 503.7 122.2 500.8 113.8C497.9 105.5 492.9 101.4 491.3 98.9" stroke="#585858" stroke-width="1" opacity="0.58"/>
<path d="M506.5 246.5C507.1 242.1 508.9 230.2 510.1 220.1C511.4 209.9 514.2 197.8 514 185.6C513.7 173.4 510.9 158.8 508.7 146.9C506.4 135 503.2 122.5 500.3 114.4C497.5 106.3 493.1 100.9 491.7 98.2" stroke="#585858" stroke-width="1.2" opacity="0.54"/>
<path d="M509.8 221.8C510.9 215.9 515.6 198.1 516.4 186C517.2 173.9 516.8 161 514.4 149.2C511.9 137.4 505.4 124 501.8 115.2C498.3 106.3 494.3 99.3 492.8 96.2" stroke="#585858" stroke-width="1.2" opacity="0.85"/>
<path d="M506.8 246.4C507.5 241.8 509 229.3 510.9 219.2C512.8 209.2 517.5 198.1 518 186.2C518.6 174.3 516.4 159.6 514.4 147.9C512.4 136.2 509.8 124.3 506.1 115.9C502.4 107.5 494.4 100.5 492.1 97.4" stroke="#585858" stroke-width="1.2" opacity="0.83"/>
<path d="M507.6 245.7C508.5 241.1 510.5 228.6 512.5 218.3C514.5 208 519.1 195.4 519.8 183.7C520.5 172.1 518.9 160.2 516.6 148.4C514.4 136.6 510.3 121.4 506.3 113.1C502.3 104.9 495.1 101.3 492.9 98.9" stroke="#585858" stroke-width="0.8" opacity="0.42"/>
<path d="M508.4 245.8C509.6 241.3 513.5 229.6 515.4 218.8C517.3 208.1 518.8 193 519.7 181.4C520.6 169.8 522.8 160.4 520.8 149.3C518.9 138.1 512.2 122.8 508 114.4C503.8 106 497.5 101.2 495.4 98.6" stroke="#585858" stroke-width="0.9" opacity="0.70"/>
<path d="M510.4 245C511.4 240.3 514 227.6 516 216.9C518.1 206.1 522 192.3 522.6 180.7C523.1 169.1 521 158.4 519.1 147.2C517.2 136 514.4 121.6 511.1 113.6C507.7 105.7 501 101.7 499 99.3" stroke="#585858" stroke-width="0.7" opacity="0.58"/>
<path d="M510.9 244.8C512.3 240.4 516.5 228.6 519.1 218.3C521.7 207.9 526.4 194.6 526.8 182.6C527.2 170.6 524.5 157.5 521.5 146.3C518.5 135.2 512.6 123.7 509 115.5C505.4 107.3 501.5 100.4 499.9 97.4" stroke="#585858" stroke-width="0.7" opacity="0.47"/>
<path d="M512.5 245C513.7 240.4 517.1 228.4 519.9 217.8C522.7 207.2 527.9 193.6 529.1 181.2C530.3 168.8 530 154.7 527 143.5C524 132.3 515.4 121.6 511.3 114.2C507.1 106.8 503.7 101.7 502.2 99.2" stroke="#585858" stroke-width="0.8" opacity="0.58"/>
<path d="M512.2 244.1C513.7 239.5 518.4 227.1 521 216.3C523.6 205.4 527.3 191 527.9 179.2C528.5 167.4 527.3 156.5 524.5 145.6C521.8 134.8 515.4 121.9 511.4 113.9C507.4 105.8 502.4 100.1 500.6 97.4" stroke="#585858" stroke-width="1.1" opacity="0.45"/>
<path d="M525.1 213.7C526.7 208.1 533.5 192 534.2 180.3C535 168.6 532.7 154.6 529.5 143.5C526.3 132.4 519.3 121.1 515 113.8C510.7 106.5 505.7 102 503.8 99.6" stroke="#585858" stroke-width="0.8" opacity="0.46"/>
<path d="M515 243.1C517.3 238.2 525.3 224.8 528.5 213.7C531.7 202.7 533.9 188.4 534.1 176.8C534.3 165.3 532.9 155.3 529.9 144.3C526.9 133.3 520.4 118.5 516.3 110.9C512.2 103.3 507 100.9 505.2 98.9" stroke="#585858" stroke-width="1.1" opacity="0.42"/>
<path d="M526.8 214.2C528.2 208 534.1 188.8 534.8 176.8C535.4 164.7 533.2 152.4 530.7 142C528.2 131.5 523.6 121.3 519.7 114C515.8 106.8 509.4 101 507.3 98.4" stroke="#585858" stroke-width="0.8" opacity="0.68"/>
<path d="M528.8 214.5C530.3 207.9 537.5 187.1 538.2 175.1C538.8 163.1 535.9 153.4 532.9 142.6C529.9 131.9 524.2 117.2 520.1 110.3C516 103.4 510.1 102.8 508.1 101.3" stroke="#585858" stroke-width="0.8" opacity="0.57"/>
<path d="M530.6 211.2C532 205.4 537.6 188.3 538.5 176.4C539.4 164.6 539.2 150.7 536.1 139.9C533 129.1 524.1 118.3 519.7 111.8C515.4 105.4 511.5 102.9 509.9 101.2" stroke="#585858" stroke-width="0.9" opacity="0.45"/>
<path d="M519 242.4C521.3 237.6 528.7 224.2 532.6 213.2C536.6 202.1 541.2 188.4 542.5 176.2C543.7 163.9 543.9 150.3 540.4 139.7C536.8 129.1 525.9 118.9 521.1 112.6C516.2 106.2 512.9 103.5 511.3 101.7" stroke="#585858" stroke-width="0.9" opacity="0.59"/>
<path d="M519.5 241.8C522.3 236.4 532 220.7 536.2 209.4C540.4 198.1 544.1 186 544.8 174C545.5 162 543.8 147.9 540.5 137.6C537.2 127.2 529.4 118.2 525 112C520.5 105.7 515.5 102.2 513.6 100.3" stroke="#585858" stroke-width="1.1" opacity="0.66"/>
<path d="M537.3 210.8C538.8 204.6 546 185.3 546.5 173.5C546.9 161.7 543.6 150.9 540 140.2C536.3 129.5 528.9 115.9 524.3 109.2C519.8 102.6 514.6 101.8 512.7 100.3" stroke="#585858" stroke-width="1.2" opacity="0.54"/>
<path d="M541.1 209.5C542.4 203.2 548.7 183.5 548.9 171.5C549.1 159.6 545.6 148.2 542.3 137.7C539.1 127.3 533.7 114.7 529.4 108.7C525.1 102.7 518.5 102.9 516.4 101.7" stroke="#585858" stroke-width="0.9" opacity="0.48"/>
<path d="M527.5 240.7C530.2 235.1 540.1 218.7 544 207C547.8 195.2 550.6 182 550.5 170.2C550.5 158.5 546.8 146.5 543.7 136.4C540.6 126.4 536.1 115.6 532 110.1C527.9 104.5 521.4 104.3 519.3 103.1" stroke="#585858" stroke-width="0.9" opacity="0.51"/>
<path d="M531.5 239.7C533.7 234.2 541 218.7 544.8 206.8C548.6 194.8 553.7 180.2 554.3 168.2C554.9 156.2 551.8 144.5 548.5 134.6C545.2 124.7 538.6 113.8 534.3 108.7C530.1 103.6 524.7 104.9 522.7 104.1" stroke="#585858" stroke-width="1.1" opacity="0.46"/>
<path d="M545.8 205.8C547.2 198.7 553.8 175.4 554 163.4C554.1 151.4 549.7 142.4 546.7 133.9C543.7 125.4 539.6 117.2 536 112.2C532.4 107.3 527.1 105.4 525.3 104" stroke="#585858" stroke-width="1.1" opacity="0.68"/>
<path d="M537.2 239.4C539.2 233.7 545.6 217.7 549 205.1C552.3 192.6 557.5 176.4 557.4 164C557.3 151.6 552 139.3 548.5 130.7C545.1 122.1 540.4 116.9 536.8 112.3C533.2 107.7 528.5 104.6 526.8 103" stroke="#585858" stroke-width="1" opacity="0.42"/>
<path d="M541.2 238.3C543.1 232.6 550 216.9 552.6 203.8C555.1 190.7 556.9 172.4 556.4 159.8C555.9 147.1 552.6 136.4 549.8 128C546.9 119.7 542.7 113.8 539.3 109.7C536 105.5 531.3 104 529.7 102.9" stroke="#585858" stroke-width="0.9" opacity="0.67"/>
<path d="M543.6 237.9C545.6 232 552.6 215.6 555.2 202.7C557.8 189.8 559.8 173 559.3 160.4C558.7 147.8 555.3 135.5 552.2 127C549 118.5 543.5 113.2 540.2 109.4C536.9 105.6 533.7 105 532.4 104.1" stroke="#585858" stroke-width="0.9" opacity="0.38"/>
<path d="M546.8 237.8C548.5 231.6 554.4 214.2 557.1 200.7C559.9 187.2 563.4 169.6 563.1 156.9C562.8 144.3 558.6 132.2 555.1 124.7C551.6 117.2 545.4 115.5 542.1 112C538.8 108.5 536.3 105.1 535.2 103.7" stroke="#585858" stroke-width="0.9" opacity="0.53"/>
<path d="M548.2 238.1C550 231.7 557 213.3 559.2 199.7C561.4 186.1 562 168.6 561.3 156.3C560.7 144 557.9 133.3 555.4 125.9C552.9 118.4 549.4 115.1 546.3 111.8C543.1 108.5 538.2 106.9 536.6 106" stroke="#585858" stroke-width="1" opacity="0.64"/>
<path d="M553.3 237.3C554.4 231.3 558.6 214.6 560.2 201C561.7 187.3 563.1 168.2 562.5 155.3C562 142.3 559.2 130.7 557.1 123.3C555 115.9 552.7 113.5 549.9 110.8C547 108 541.6 107.5 540 106.8" stroke="#585858" stroke-width="1" opacity="0.59"/>
<path d="M555.3 236.8C556.5 230.3 560.8 212.3 562.6 198.2C564.4 184.1 567 164.8 566.1 152.3C565.2 139.9 559.6 130.3 557.1 123.3C554.6 116.4 553.6 113.5 551.1 110.5C548.6 107.5 543.5 106.2 542 105.3" stroke="#585858" stroke-width="0.8" opacity="0.43"/>
<path d="M558.2 236.5C559.3 230.2 563.4 212.8 565.3 198.9C567.1 184.9 570.3 165.7 569.1 152.6C567.9 139.6 560.8 127.7 558.2 120.3C555.6 113 556.1 110.8 553.7 108.5C551.2 106.3 545.2 107.2 543.5 107" stroke="#585858" stroke-width="1" opacity="0.84"/>
<path d="M561.8 235.7C562.8 229.4 567 212 568.3 197.7C569.6 183.4 570.5 162.9 569.3 149.9C568.2 136.9 563.9 126.1 561.6 119.7C559.4 113.3 558.3 113.7 555.9 111.4C553.5 109.1 548.7 106.9 547.2 106" stroke="#585858" stroke-width="1" opacity="0.67"/>
<path d="M570.6 196.8C571 189.5 574 166 572.8 153.3C571.5 140.7 565.5 128.2 563 120.9C560.5 113.6 560 111.7 557.7 109.7C555.3 107.7 550.3 109.2 548.9 109.1" stroke="#585858" stroke-width="1" opacity="0.55"/>
<path d="M566.3 235.4C567.9 229.3 574.1 212.6 575.5 198.6C576.9 184.5 576.6 163.9 574.9 151C573.3 138.2 568.3 128.2 565.7 121.4C563.1 114.6 561.5 112.3 559.1 110.1C556.7 108 552.5 108.8 551.1 108.5" stroke="#585858" stroke-width="0.9" opacity="0.50"/>
<path d="M567.4 234.7C568.9 228.3 574.9 210.2 576.6 196.2C578.4 182.3 579.5 163.3 578 151.1C576.5 138.9 570.5 129.6 567.7 123.2C564.9 116.7 563.7 114.8 561.2 112.3C558.8 109.9 554.4 109.1 553 108.5" stroke="#585858" stroke-width="0.9" opacity="0.47"/>
<path d="M577.3 195.5C577.4 188.7 579.5 167.4 578.1 154.9C576.7 142.4 571.8 127.8 569.1 120.7C566.3 113.5 563.6 114 561.6 112C559.6 110.1 557.7 109.7 556.9 109.2" stroke="#585858" stroke-width="1" opacity="0.40"/>
<path d="M572.3 234.5C573.6 228 578.3 209.2 579.8 195.7C581.3 182.1 582.2 165.4 581.4 153.3C580.6 141.2 577.8 130 575 123.2C572.3 116.3 567.7 114.7 564.9 112.1C562.1 109.6 559.3 108.7 558.1 108" stroke="#585858" stroke-width="1.1" opacity="0.58"/>
<path d="M574.4 233.7C575.4 227.9 578.5 211.9 580.4 198.7C582.3 185.6 586.2 167.2 585.6 154.8C585 142.4 580 131.5 576.8 124.5C573.6 117.5 568.9 115.5 566.4 113C563.8 110.5 562.3 110.2 561.5 109.7" stroke="#585858" stroke-width="1.1" opacity="0.46"/>
<path d="M576.5 233.5C578.2 227.4 584.6 209.9 586.5 196.9C588.5 183.9 589.9 167.8 588.3 155.5C586.6 143.3 580 130 576.7 123.3C573.4 116.5 571 117 568.5 114.8C566.1 112.7 563.2 111.1 562.2 110.4" stroke="#585858" stroke-width="0.7" opacity="0.56"/>
<path d="M588.2 196.4C588.1 189.7 589.5 168.2 588 156C586.4 143.8 582.1 130.2 579 123.2C576 116.1 572.1 116.2 569.6 113.9C567.1 111.6 565 110.2 564 109.5" stroke="#585858" stroke-width="1" opacity="0.41"/>
<path d="M591.3 198.2C591.2 191.5 592 170.1 590.8 157.8C589.5 145.4 586.3 131.9 583.8 124.4C581.4 116.8 578.7 114.7 576.2 112.5C573.7 110.2 569.9 111.3 568.7 111" stroke="#585858" stroke-width="0.8" opacity="0.53"/>
<path d="M583.1 233.4C584.7 227.2 590.7 208.8 592.4 196.5C594.1 184.2 594.8 171.2 593.3 159.6C591.9 147.9 587 134.4 583.9 126.8C580.9 119.2 577.2 116.7 574.8 114C572.4 111.3 570.4 111.3 569.5 110.7" stroke="#585858" stroke-width="1" opacity="0.51"/>
<path d="M592.6 195.7C593.5 189.6 598.7 171.1 597.9 159.2C597.2 147.3 591.1 131.8 587.9 124.2C584.6 116.6 581.3 115.8 578.6 113.7C575.8 111.5 572.5 111.6 571.3 111.2" stroke="#585858" stroke-width="0.7" opacity="0.49"/>
<path d="M587.2 232.2C588.6 226.6 593.4 210.3 595.5 198.6C597.5 186.9 600.2 174.4 599.3 162C598.5 149.7 593.7 132.9 590.3 124.6C586.9 116.4 581.8 114.6 578.9 112.6C576.1 110.5 574.3 112.6 573.4 112.6" stroke="#585858" stroke-width="0.8" opacity="0.52"/>
<path d="M589.7 232.5C591.2 226.7 596.8 209.6 598.6 197.5C600.3 185.5 601.1 171.8 600.4 160.2C599.6 148.5 596.6 135.6 593.8 127.8C591 119.9 587 115.7 583.8 113C580.5 110.4 576.1 111.9 574.5 111.6" stroke="#585858" stroke-width="0.9" opacity="0.63"/>
<path d="M599 198.4C599.7 192.5 604.2 174.9 603.2 163C602.1 151.1 595.6 135.1 592.5 127.1C589.5 119 587.7 116.9 584.9 114.7C582 112.5 577.1 114.1 575.6 114" stroke="#585858" stroke-width="1.2" opacity="0.63"/>
<path d="M602 196.2C602.9 190.6 607.8 173.3 607.4 162.5C607 151.7 603 138.7 599.5 131.3C595.9 124 589.4 121.2 586.2 118.5C582.9 115.9 581.1 116.1 580.1 115.6" stroke="#585858" stroke-width="1" opacity="0.48"/>
<path d="M605.7 199.1C606.4 193.5 610.7 176.7 609.8 165.3C608.9 153.8 603.7 138.3 600.5 130.6C597.4 122.9 594.1 121.4 591.1 119.2C588.2 117 584.2 117.7 582.8 117.4" stroke="#585858" stroke-width="0.8" opacity="0.64"/>
<path d="M597.6 231.7C599.1 226.5 604.4 211.4 606.6 200.4C608.8 189.4 611.5 177.1 610.8 165.7C610 154.4 605.2 139.8 602 132.2C598.8 124.7 594.8 123 591.7 120.4C588.7 117.8 585 117.2 583.6 116.5" stroke="#585858" stroke-width="0.8" opacity="0.62"/>
<path d="M598.1 232C599.7 226.8 605.2 211.6 607.3 200.5C609.5 189.4 611.2 176.5 611.1 165.4C610.9 154.3 609.2 141.2 606.4 133.8C603.6 126.5 597.4 123.8 594.1 121.2C590.9 118.5 588.1 118.6 586.9 118.1" stroke="#585858" stroke-width="1" opacity="0.44"/>
<path d="M600.6 232.3C602.3 226.6 608.9 208.7 611.1 197.8C613.2 186.9 614.1 177.2 613.5 166.9C612.8 156.6 610.1 143.3 607.1 135.9C604.2 128.5 598.9 125.4 596 122.6C593 119.8 590.4 119.8 589.3 119.2" stroke="#585858" stroke-width="0.7" opacity="0.49"/>
<path d="M609.3 201.6C610.6 195.8 616.7 176.7 617.1 166.6C617.5 156.5 614.5 148.4 611.5 141.2C608.5 134 602.6 127.1 599.1 123.6C595.6 120.1 591.9 120.7 590.4 120.2" stroke="#585858" stroke-width="0.8" opacity="0.56"/>
<path d="M604.7 232.2C606.5 226.9 613.2 211.5 615.4 200.9C617.6 190.3 618.5 178.7 618.1 168.6C617.7 158.4 615.5 146.7 613 140C610.5 133.4 606.5 131.9 603.2 128.7C599.8 125.5 594.6 122.3 592.8 121.1" stroke="#585858" stroke-width="1" opacity="0.67"/>
<path d="M605.7 232.4C607.4 227 613.3 209.9 615.4 199.8C617.6 189.6 618.9 180.9 618.8 171.4C618.7 161.8 617.6 149.6 615 142.3C612.4 135 606.7 131 603.4 127.6C600.1 124.1 596.8 122.8 595.5 121.8" stroke="#585858" stroke-width="0.7" opacity="0.57"/>
<path d="M618.8 201C619.5 195.9 623.1 179.3 623.2 170.1C623.2 160.9 622 152.5 618.9 146C615.9 139.5 608.7 134.8 605 131.1C601.2 127.5 598 125.3 596.6 124.1" stroke="#585858" stroke-width="1.1" opacity="0.41"/>
<path d="M608.9 232.3C610.1 227.3 613.4 212.5 616.3 202.7C619.2 192.9 625.3 182.8 626.1 173.3C627 163.9 624.3 153.1 621.5 146.2C618.6 139.2 612.8 135.2 609 131.6C605.3 128 600.6 125.8 598.9 124.7" stroke="#585858" stroke-width="0.9" opacity="0.61"/>
<path d="M611.2 231.8C612.7 226.8 617.8 212.1 620.4 202.2C623 192.2 626.4 181.2 626.9 172.3C627.5 163.4 626.3 155 623.7 148.9C621.1 142.8 614.7 139 611.3 135.5C607.9 132 604.6 129.1 603.3 127.8" stroke="#585858" stroke-width="1.3" opacity="0.86"/>
<path d="M612.1 232.5C613.9 227.4 619.6 211.1 622.5 201.6C625.4 192.2 628.7 184.5 629.5 176.1C630.3 167.8 629.9 158.5 627.1 151.6C624.3 144.6 616.3 138.5 612.6 134.3C609 130.2 606.4 127.8 605.1 126.5" stroke="#585858" stroke-width="0.9" opacity="0.76"/>
<path d="M623.1 202.4C624.3 197.9 629.4 183.7 630.2 175C630.9 166.3 630.4 156.4 627.6 150.1C624.7 143.8 616.9 141 613.1 137.2C609.4 133.4 606.4 129.1 605.1 127.4" stroke="#585858" stroke-width="1.2" opacity="0.62"/>
<path d="M614 233.1C615.8 228 621.9 212.3 625 202.5C628.1 192.7 631.7 182.4 632.6 174.3C633.4 166.2 633.1 160 630.2 153.8C627.3 147.6 619.3 140.9 615.4 137C611.4 133.1 607.8 131.3 606.3 130.2" stroke="#585858" stroke-width="1" opacity="0.57"/>
<path d="M614.9 234.2C617 228.9 624 212.4 627.4 202.8C630.8 193.1 635 184 635.6 176.4C636.1 168.7 633.4 162.9 630.7 156.8C628.1 150.8 623.3 144 619.6 140C616 136 610.6 133.9 608.8 132.7" stroke="#585858" stroke-width="0.7" opacity="0.46"/>
<path d="M615.9 233.4C617.7 228.8 623.3 214.6 626.4 205.5C629.6 196.4 633.6 186.8 634.7 178.8C635.9 170.7 635.7 163.4 633.3 157.1C631 150.9 624.1 145.5 620.6 141.2C617 137 613.4 133.1 612 131.5" stroke="#585858" stroke-width="1" opacity="0.50"/>
<path d="M628.9 206.6C630.7 202 638.6 187.4 639.3 179.3C640.1 171.2 636.4 164.3 633.4 158.1C630.5 151.8 624.8 145.8 621.7 141.7C618.5 137.6 615.9 134.7 614.7 133.3" stroke="#585858" stroke-width="1.1" opacity="0.61"/>
<path d="M617.7 235.1C619.9 230 627.6 214.1 630.8 204.5C633.9 194.9 635.6 185.3 636.7 177.4C637.9 169.6 639.5 163.3 637.5 157.3C635.5 151.3 628.4 145.3 624.8 141.6C621.1 137.8 617.2 136.1 615.7 135" stroke="#585858" stroke-width="0.8" opacity="0.68"/>
<path d="M630.5 206.3C632 201.9 637.9 187.6 639.5 180.1C641.1 172.7 642.4 167.8 640 161.6C637.7 155.4 628.9 146.9 625.4 142.9C621.9 138.9 619.9 138.6 618.8 137.7" stroke="#585858" stroke-width="0.9" opacity="0.54"/>
<path d="M619.9 236.2C622.3 231.1 630.8 215.3 634.6 205.9C638.3 196.5 640.9 187.2 642.1 179.9C643.3 172.6 644.3 168.2 641.9 162.2C639.5 156.3 631.4 148.3 627.7 144.4C623.9 140.4 621 139.5 619.6 138.5" stroke="#585858" stroke-width="0.9" opacity="0.51"/>
<path d="M620.5 235.7C622.5 231.1 628.7 217.1 632.8 207.7C637 198.4 644.3 187 645.4 179.6C646.6 172.2 642.3 168.8 639.6 163.1C636.9 157.4 632.5 149.4 629.4 145.3C626.3 141.2 622.3 139.6 620.9 138.4" stroke="#585858" stroke-width="0.9" opacity="0.56"/>
<path d="M621.4 236.7C624.2 232.3 634 219.4 638.4 210.5C642.7 201.6 646.5 191.1 647.5 183.4C648.5 175.7 646.8 169.8 644.4 164.2C641.9 158.6 636 153.2 632.8 149.7C629.7 146.1 626.6 143.9 625.4 142.7" stroke="#585858" stroke-width="1" opacity="0.48"/>
<path d="M637.9 209.7C639.5 205 646.3 189.2 647.4 181.8C648.5 174.3 646.2 170.5 644.5 165.1C642.8 159.7 640.5 153.4 637.3 149.5C634.1 145.6 627.5 143 625.5 141.7" stroke="#585858" stroke-width="0.8" opacity="0.50"/>
<path d="M623.6 237.2C626.1 232.6 635 219.2 639 210.1C643.1 201 646.9 190 647.8 182.6C648.7 175.2 646.3 170.9 644.2 165.7C642.2 160.5 638.4 154.7 635.5 151.1C632.7 147.6 628.5 145.6 627.1 144.5" stroke="#585858" stroke-width="0.8" opacity="0.69"/>
<path d="M642.8 209.9C644.2 205.7 650.4 191.8 651.5 184.5C652.5 177.3 651.4 171.4 649.2 166.2C647 161 641.8 157 638.4 153.2C634.9 149.5 630 145.4 628.3 143.8" stroke="#585858" stroke-width="0.8" opacity="0.59"/>
<path d="M641.4 211.9C643.5 207.7 652.8 193.7 654.1 186.8C655.3 180 650.8 176.3 648.9 170.9C647 165.4 646 158.1 642.9 154.2C639.7 150.3 632.3 148.7 630.2 147.6" stroke="#585858" stroke-width="1.2" opacity="0.65"/>
<path d="M625.6 239.4C628.6 235.2 639.3 222.5 643.7 213.7C648.2 204.8 651 193.3 652.4 186.3C653.8 179.3 654 176.6 652.2 171.4C650.4 166.3 645 159.7 641.6 155.6C638.2 151.4 633.4 148 631.8 146.4" stroke="#585858" stroke-width="1" opacity="0.55"/>
<path d="M643.2 212.7C644.9 208.9 651.5 196.4 653.2 190C654.9 183.6 655.2 179.9 653.4 174.4C651.5 168.9 645.1 161.4 641.9 157.2C638.8 153 635.6 150.5 634.4 149.1" stroke="#585858" stroke-width="0.7" opacity="0.43"/>
<path d="M645.1 214C647.2 210 655.5 196.6 657.3 190C659.1 183.5 658 179.8 656 174.7C653.9 169.7 648.6 163.6 645.1 159.9C641.5 156.2 636.4 153.7 634.7 152.5" stroke="#585858" stroke-width="1" opacity="0.64"/>
<path d="M645.5 214.7C647.9 210.5 658.6 196 660.2 189.5C661.8 183 657.2 180.3 655.1 175.7C653.1 171 651.1 165.1 647.9 161.7C644.8 158.2 638.2 156.1 636.3 155" stroke="#585858" stroke-width="0.8" opacity="0.64"/>
<path d="M646.8 215.2C648.6 211.6 656.1 200 657.8 193.3C659.6 186.6 659.2 180.2 657.4 175.1C655.5 169.9 649.9 166 646.8 162.4C643.6 158.7 639.9 154.8 638.6 153.3" stroke="#585858" stroke-width="0.7" opacity="0.64"/>
<path d="M628.7 243.5C631.8 239.2 642.3 226 647.7 217.5C653.2 209.1 658.9 199.5 661.3 192.8C663.8 186.1 664 182.4 662.4 177.3C660.8 172.3 655.3 165.9 651.6 162.5C647.8 159.1 641.9 157.8 639.9 156.9" stroke="#585858" stroke-width="1" opacity="0.40"/>
<path d="M629.5 244.3C632.8 239.5 644.1 224.2 649.4 215.7C654.7 207.2 659.3 199.4 661.4 193.2C663.4 187.1 663.4 183.2 661.5 178.7C659.7 174.2 653.9 169.8 650.4 166.3C646.9 162.7 642.3 159 640.7 157.6" stroke="#585858" stroke-width="1.1" opacity="0.45"/>
<path d="M629.9 244.9C633.1 240.5 642.9 226.9 648.7 218.4C654.6 210 662.5 200.5 664.8 194.3C667.1 188 664.3 185.7 662.6 180.9C660.8 176 657.9 168.8 654.4 165.3C651 161.7 644 160.7 641.9 159.8" stroke="#585858" stroke-width="0.9" opacity="0.58"/>
<path d="M630.5 245.1C634.1 240.8 646.2 227.6 651.7 219.7C657.3 211.8 661.2 204.1 663.8 197.8C666.3 191.5 668.9 186.8 667 181.6C665.1 176.5 656.4 170.4 652.6 166.8C648.7 163.2 645.5 161 644.1 159.8" stroke="#585858" stroke-width="1.1" opacity="0.43"/>
<path d="M649.8 218.3C652.9 215 665 203.7 668 198.3C671.1 192.8 670.5 190.6 668.1 185.7C665.8 180.8 657.9 172.5 654 168.8C650.1 165.1 646.3 164.3 644.8 163.4" stroke="#585858" stroke-width="0.7" opacity="0.55"/>
<path d="M654.6 219.2C657.1 215.5 667.3 203.2 669.6 197.3C672 191.5 670.7 188.5 668.7 184.1C666.7 179.6 661.3 174.1 657.5 170.7C653.8 167.3 648 165 646 163.9" stroke="#585858" stroke-width="1" opacity="0.55"/>
<path d="M631.8 248.1C635.3 243.4 646.3 227.3 652.9 219.5C659.5 211.7 668.3 207.1 671.3 201.5C674.4 195.9 673.5 190.8 671.3 186C669.1 181.2 662.3 176.1 658 172.6C653.7 169.2 647.5 166.4 645.4 165.2" stroke="#585858" stroke-width="0.9" opacity="0.52"/>
<path d="M631.8 248.7C635.7 244.1 648.5 229.4 655 221.6C661.6 213.8 667.9 207.2 671.1 201.9C674.3 196.6 675.6 194.4 674 189.9C672.4 185.4 666.1 178.5 661.7 174.9C657.3 171.2 649.9 169.1 647.5 168" stroke="#585858" stroke-width="1.1" opacity="0.51"/>
<path d="M653.4 222.7C656.9 219.1 670.6 206.9 674.1 201.4C677.6 195.8 676.4 193.6 674.3 189.4C672.2 185.1 665.8 178.9 661.4 175.8C657.1 172.7 650.4 171.8 648.2 171" stroke="#585858" stroke-width="1" opacity="0.69"/>
<path d="M633.4 250.3C637.3 245.7 649.6 230.5 656.7 222.4C663.8 214.3 672.6 206.6 676 201.7C679.4 196.8 678.9 196.7 676.9 193C675 189.3 668.4 183 664.4 179.4C660.3 175.8 654.4 172.6 652.4 171.2" stroke="#585858" stroke-width="1" opacity="0.63"/>
<path d="M634.1 251C638.1 246.6 651.1 232.2 657.9 224.7C664.7 217.1 671.5 210.9 674.9 205.4C678.2 200 679.3 196.2 677.8 191.9C676.4 187.7 670.4 182.8 666.3 179.8C662.3 176.7 655.6 174.7 653.5 173.6" stroke="#585858" stroke-width="1.1" opacity="0.71"/>
<path d="M658.2 224.6C661.2 221.6 673.3 212.3 676.6 206.9C679.9 201.6 679.2 196.9 677.8 192.7C676.4 188.5 672.2 184.5 668.2 181.7C664.2 178.9 656 176.8 653.5 175.8" stroke="#585858" stroke-width="1.2" opacity="0.83"/>
<path d="M635.7 252.7C639.4 248 650.7 232 657.6 224.1C664.4 216.2 673.2 209.9 676.9 205.4C680.6 200.8 681.2 200.5 679.8 196.8C678.5 193.2 673.1 186.9 668.7 183.4C664.3 180 656 177.4 653.4 176.2" stroke="#585858" stroke-width="1.3" opacity="0.77"/>
<path d="M658.6 227.5C661.9 224.3 674.6 213.4 678.3 208.3C681.9 203.2 681.9 200.5 680.4 196.6C679 192.7 673.8 188 669.5 184.7C665.3 181.4 657.4 178.2 655 176.9" stroke="#585858" stroke-width="1.1" opacity="0.55"/>
<path d="M636.9 254.1C640.7 250 653.2 236.8 660 229.5C666.9 222.2 674.2 215.4 678.2 210.1C682.2 204.8 685.2 201.3 684.1 197.6C683 193.9 675.8 191.2 671.6 188.1C667.4 184.9 660.8 180.3 658.7 178.8" stroke="#585858" stroke-width="0.7" opacity="0.53"/>
<path d="M662.6 230.6C665.5 227.2 676.5 215 680.1 210.3C683.7 205.5 685.3 205.3 684 201.9C682.6 198.6 676 193.9 672.1 190.2C668.2 186.6 662.5 181.7 660.6 179.9" stroke="#585858" stroke-width="1" opacity="0.49"/>
<path d="M638.7 256.1C642.7 252.1 655.5 239.8 662.9 232.2C670.2 224.5 678.9 215.1 682.6 210C686.3 204.9 686.4 204.7 685.1 201.6C683.7 198.4 678.7 194.6 674.7 191.2C670.8 187.9 663.6 183.1 661.3 181.5" stroke="#585858" stroke-width="1.1" opacity="0.53"/>
<path d="M664.6 231.1C667.2 228.2 677 218.1 680.5 213.6C684 209.1 686.3 208 685.7 204C685.2 200 681.1 193.3 677.2 189.6C673.2 185.8 664.6 182.7 662.1 181.3" stroke="#585858" stroke-width="1" opacity="0.41"/>
<path d="M640.5 257.3C644.7 253.4 658.3 241.3 665.4 233.8C672.5 226.3 679.6 217.4 683.3 212.4C686.9 207.5 688.3 207.2 687.4 204.3C686.6 201.3 681.7 198 678.1 194.8C674.5 191.6 667.9 186.7 665.8 185" stroke="#585858" stroke-width="0.8" opacity="0.49"/>
<path d="M664.1 232.7C667.2 230 678.9 220.8 682.8 216.2C686.7 211.6 688.1 209.4 687.4 205.3C686.6 201.2 681.9 195 678.2 191.7C674.5 188.4 667.2 186.6 665 185.6" stroke="#585858" stroke-width="1" opacity="0.67"/>
<path d="M641.2 259.3C645.3 255.2 658.4 241.8 665.6 234.7C672.9 227.6 681 220.9 684.7 216.4C688.4 212 688.7 211.4 687.8 208.1C686.8 204.9 682.3 200.8 679 196.9C675.6 192.9 669.5 186.6 667.6 184.5" stroke="#585858" stroke-width="0.8" opacity="0.56"/>
<path d="M668.4 235.5C671.5 232.7 683.1 223.2 686.7 218.7C690.3 214.3 690.4 212.2 689.9 208.5C689.4 204.9 687 200.6 683.8 196.8C680.5 193 672.8 187.8 670.6 186" stroke="#585858" stroke-width="0.9" opacity="0.60"/>
<path d="M667 239.5C670.4 236.2 683.2 224.9 687.2 220.1C691.1 215.4 691.2 214.8 690.7 211.2C690.3 207.5 687.9 201.5 684.5 198C681.1 194.4 672.9 191.1 670.6 189.8" stroke="#585858" stroke-width="0.8" opacity="0.69"/>
<path d="M670.5 238C673.4 234.7 684.2 222.9 688 218.5C691.7 214.2 693.7 215.3 692.8 211.9C692 208.4 686.4 201.7 683.1 197.7C679.8 193.7 674.5 189.6 672.8 187.9" stroke="#585858" stroke-width="1" opacity="0.48"/>
<path d="M645 263.1C648.9 259.5 661.4 248.3 668.5 241.6C675.7 234.8 684 226.9 687.8 222.4C691.6 217.8 691.1 217.8 691.2 214.2C691.3 210.7 691.4 205 688.4 201C685.3 197.1 675.6 192.3 673 190.6" stroke="#585858" stroke-width="1" opacity="0.46"/>
<path d="M645.7 263.8C649.8 260.1 663.3 248.2 670.2 241.4C677.2 234.6 683.9 227.4 687.5 223.1C691.1 218.8 691.4 218.8 691.7 215.7C692 212.5 692.1 208.3 689.4 204.2C686.7 200.1 677.9 193.2 675.6 191.1" stroke="#585858" stroke-width="0.8" opacity="0.64"/>
<path d="M646.5 264.9C651 261.3 666 250.1 673.4 243C680.7 235.8 687.3 226.6 690.6 222C693.9 217.4 693.2 218 693.4 215.4C693.5 212.7 694 209.5 691.3 206.1C688.6 202.7 679.6 196.7 677.2 194.8" stroke="#585858" stroke-width="0.8" opacity="0.73"/>
<path d="M648 265.7C651.8 261.8 663.5 249.7 670.7 242.6C677.8 235.5 686.5 227.7 690.8 223.3C695 218.8 696.2 218.9 696.4 215.8C696.5 212.8 694.9 208.4 691.8 204.8C688.6 201.2 680.1 196.2 677.7 194.5" stroke="#585858" stroke-width="0.8" opacity="0.72"/>
<path d="M648.1 265.9C652.3 262.1 665.8 250 673.2 243.1C680.6 236.2 688.4 228.7 692.3 224.5C696.2 220.4 696.8 221.1 696.6 218.3C696.4 215.6 694.2 212 691.4 208.1C688.5 204.2 681.6 197.1 679.6 194.9" stroke="#585858" stroke-width="1.2" opacity="0.64"/>
<path d="M648.4 267C652.3 263.8 664.8 254.3 671.9 247.8C678.9 241.3 686.6 232.9 690.7 228.1C694.9 223.4 696.8 222.7 697.1 219.3C697.4 216 695 211.5 692.5 208C690 204.4 683.8 199.5 682 197.8" stroke="#585858" stroke-width="0.8" opacity="0.45"/>
<path d="M675.1 247C678.3 243.7 690.1 231.4 694.1 227.1C698.1 222.9 699 224.5 699 221.7C699 218.9 696.8 214.4 694.2 210.4C691.5 206.5 684.9 200 683.1 197.9" stroke="#585858" stroke-width="1" opacity="0.43"/>
<path d="M673.1 249.7C676.1 246.6 687.3 235.3 691.2 230.9C695.2 226.6 696 226.6 696.6 223.5C697.2 220.4 697.1 216.4 694.7 212.4C692.3 208.4 684.2 201.5 682.1 199.3" stroke="#585858" stroke-width="0.9" opacity="0.71"/>
<path d="M673.7 251.3C676.9 248.5 689.6 238.8 693.4 234.8C697.2 230.8 696.3 230.8 696.4 227.2C696.6 223.6 696.3 217.7 694.2 213.4C692 209.2 685.5 203.5 683.7 201.6" stroke="#585858" stroke-width="1" opacity="0.61"/>
<path d="M648.8 270C652.9 266.7 665.6 256 673.4 250.4C681.2 244.8 691.4 240.5 695.8 236.6C700.2 232.6 700.1 230.1 700 226.7C699.9 223.3 697.2 219.9 695 216.2C692.9 212.5 688.4 206.4 687.1 204.4" stroke="#585858" stroke-width="1" opacity="0.45"/>
<path d="M649.9 271C654.2 267.9 668.6 257.6 675.8 252.2C683 246.9 689.1 242.5 693.1 238.8C697.2 235.1 700 233.3 700.2 229.9C700.5 226.6 696.4 222.4 694.5 218.6C692.5 214.7 689.6 208.9 688.6 207" stroke="#585858" stroke-width="1" opacity="0.66"/>
<path d="M676.3 255.4C679.2 252.9 690.1 244.2 694.1 240.3C698 236.4 700 235.4 700.1 232.1C700.2 228.8 696.8 224.7 694.9 220.4C693.1 216.1 690.1 208.7 689.1 206.4" stroke="#585858" stroke-width="1" opacity="0.46"/>
<path d="M649.6 272.9C654.2 270 669.3 261.4 677 255.9C684.8 250.3 692 243.4 696.1 239.6C700.2 235.8 701.3 235.9 701.6 232.9C701.9 230 699.7 225.9 697.8 221.8C695.9 217.7 691.5 210.5 690.2 208.3" stroke="#585858" stroke-width="0.7" opacity="0.60"/>
<path d="M650.3 274C654.7 270.7 669.3 260.1 676.8 254.3C684.4 248.6 691.9 243 695.6 239.7C699.4 236.4 699.1 237.5 699.4 234.5C699.7 231.5 698.9 226 697.3 221.9C695.8 217.7 691.3 211.6 690.1 209.5" stroke="#585858" stroke-width="0.8" opacity="0.50"/>
<path d="M650.2 274.1C654.3 271.5 667.4 263.6 675.1 258.7C682.7 253.7 691.3 248.6 696 244.4C700.6 240.3 702.2 237.5 702.8 233.7C703.3 229.9 700.9 225.3 699.2 221.5C697.5 217.8 693.6 212.7 692.5 211" stroke="#585858" stroke-width="0.8" opacity="0.71"/>
<path d="M651.1 275.3C655.5 272.5 670.2 263.2 677.8 258.4C685.3 253.7 692.5 250.2 696.5 246.9C700.6 243.5 701.8 241.8 702 238.3C702.2 234.8 699.5 230 697.7 225.8C695.9 221.7 692.3 215.3 691.3 213.2" stroke="#585858" stroke-width="0.7" opacity="0.44"/>
<path d="M651.3 275.8C655.4 273 668.3 263.3 675.9 258.8C683.6 254.2 692.8 252.1 697.2 248.6C701.7 245.1 701.9 241.2 702.6 237.8C703.3 234.3 702.8 232 701.4 227.9C700 223.9 695.3 216.1 694.1 213.7" stroke="#585858" stroke-width="0.9" opacity="0.53"/>
<path d="M651.3 277C655.5 274.5 668.5 266.1 676.3 261.7C684.1 257.2 693.7 254.2 698.2 250.4C702.6 246.7 702.4 243.3 703 239.2C703.7 235.2 703.4 229.8 702.2 226.1C701 222.4 696.7 218.5 695.6 217" stroke="#585858" stroke-width="0.9" opacity="0.53"/>
<path d="M675.3 262.7C678.8 261.1 691.6 256.7 696.6 253C701.6 249.4 704.5 244.4 705.3 240.6C706.1 236.8 703.3 234.1 701.5 230.4C699.8 226.6 695.8 220.3 694.7 218.3" stroke="#585858" stroke-width="1.1" opacity="0.75"/>
<path d="M651.4 278.8C655.7 276.7 669.1 270.6 677.1 266.5C685 262.4 694.4 258 699.1 254.1C703.7 250.1 704.2 246.6 704.9 243C705.7 239.4 704.9 236.3 703.6 232.3C702.4 228.4 698.6 221.6 697.6 219.4" stroke="#585858" stroke-width="0.9" opacity="0.73"/>
<path d="M436.3 227.6C429.1 224.9 406.7 215.9 393.4 211.8C380.1 207.6 366.8 203.3 356.5 202.6C346.1 201.9 337 203 331.2 207.7C325.5 212.4 322.6 221.8 322.1 230.6C321.5 239.3 327.1 255.2 328.1 260.2" stroke="#444" stroke-width="1" opacity="0.78"/>
<path d="M505.7 246.4C494.3 243 456.5 231.7 437.4 226.1C418.3 220.5 404.8 216.1 391.1 212.6C377.4 209.2 365.2 206.2 355.2 205.5C345.2 204.7 336.2 204 331.1 208.2C325.9 212.5 324.8 222.4 324.3 230.8C323.7 239.3 327.1 254.3 327.6 259" stroke="#444" stroke-width="1" opacity="0.55"/>
<path d="M506.3 246.6C494.8 243.5 456.7 233.8 437.8 228.1C418.9 222.4 406.7 216 392.9 212.2C379.1 208.4 365.3 205.9 355.1 205.3C345 204.7 337.3 204.4 332 208.5C326.7 212.7 324 222.1 323.3 230.1C322.5 238.2 326.7 252.4 327.4 256.8" stroke="#444" stroke-width="1.2" opacity="0.61"/>
<path d="M506.4 246.4C502.4 245 492 242.7 482.1 238.5C472.1 234.2 458.4 228.3 446.9 220.9C435.3 213.6 423.1 202.4 412.6 194.4C402.2 186.3 394.2 176.1 384.1 172.6C374.1 169.1 360.9 169.9 352.3 173.5C343.7 177.2 336 191 332.7 194.5" stroke="#444" stroke-width="1.2" opacity="0.62"/>
<path d="M482.4 239.6C476.7 236.3 459.7 226.7 447.8 219.5C435.9 212.2 421.6 203.6 410.9 196C400.1 188.5 392.7 177.7 383.1 174.1C373.6 170.5 362.5 171.2 353.6 174.4C344.7 177.7 333.7 190.3 329.7 193.4" stroke="#444" stroke-width="1.1" opacity="0.65"/>
<path d="M506.4 246.8C502.5 245.6 493.2 244.3 483.3 239.7C473.4 235.1 458.6 226.5 447 219.2C435.3 211.9 423.7 203.5 413.2 195.7C402.8 188 394.2 176.4 384.2 172.7C374.3 169.1 362.5 170.1 353.6 173.9C344.7 177.7 334.8 191.8 331 195.4" stroke="#444" stroke-width="1.2" opacity="0.75"/>
<path d="M506.1 247C503.2 244.9 494.9 240.8 488.7 234.7C482.4 228.6 476 219.5 468.7 210.4C461.5 201.4 452.4 188.6 445.2 180.4C438 172.2 433 166.2 425.4 161.2C417.7 156.1 408.1 150.2 399.2 150C390.3 149.7 376.5 157.9 372 159.5" stroke="#444" stroke-width="1.3" opacity="0.74"/>
<path d="M505.9 246.8C503 244.9 494.9 241.7 488.5 235.2C482 228.8 474.4 217.3 467.4 208.2C460.4 199.1 453.7 189 446.5 180.7C439.3 172.4 432 163.3 424.2 158.4C416.4 153.5 408.2 151 399.8 151.2C391.5 151.4 378.4 158 374.1 159.3" stroke="#444" stroke-width="0.9" opacity="0.57"/>
<path d="M489.4 234.2C485.7 230.4 474.4 219.6 467 211.1C459.6 202.6 451.8 191.7 445 183.2C438.1 174.7 433.9 165.3 426.1 160.1C418.3 154.9 407.4 151.9 398.3 152C389.2 152.1 375.8 159.5 371.3 161" stroke="#444" stroke-width="0.9" opacity="0.69"/>
<path d="M492.6 205C490.8 198.2 484.2 176.2 481.3 164C478.4 151.8 478 140.8 475.3 131.8C472.6 122.7 469.8 113 465.1 109.7C460.4 106.3 453.3 110.5 447.4 111.8C441.4 113 432.4 116.1 429.5 116.9" stroke="#444" stroke-width="1.1" opacity="0.70"/>
<path d="M506.2 246.6C503.9 239.4 496.7 217.6 492.4 203.9C488.2 190.2 483.9 176.4 480.7 164.2C477.4 152 475.7 140.3 472.9 130.8C470.1 121.4 468.4 111.1 464.1 107.8C459.7 104.4 452.6 109.3 446.9 110.7C441.2 112.1 432.7 115.3 429.9 116.2" stroke="#444" stroke-width="1.2" opacity="0.79"/>
<path d="M506.2 247C504.3 240.2 498.6 219.7 494.5 205.8C490.4 191.9 485.4 176.4 481.8 163.4C478.2 150.5 475.7 137.4 472.9 128.2C470.2 119.1 469.4 112 465.3 108.8C461.2 105.6 454.3 108 448.5 109.1C442.7 110.3 433.5 114.7 430.5 115.8" stroke="#444" stroke-width="1.3" opacity="0.59"/>
<path d="M455.3 248.9C449.5 249 431.3 248.2 420.5 249.2C409.7 250.3 399.2 252.1 390.6 255.3C381.9 258.5 376.1 265.4 368.8 268.6C361.4 271.8 352.3 275.1 346.4 274.8C340.5 274.5 335.6 268.2 333.4 266.9" stroke="#444" stroke-width="1.3" opacity="0.54"/>
<path d="M505.6 246.7C497.3 246.6 470.3 246.3 455.8 246.5C441.3 246.6 428.9 245.8 418.5 247.7C408.1 249.5 401.3 253.8 393.5 257.5C385.7 261.1 379.5 266.6 371.6 269.3C363.7 272.1 353 274.2 346.3 273.8C339.6 273.4 333.9 268.1 331.5 266.9" stroke="#444" stroke-width="1" opacity="0.50"/>
<path d="M455.4 245.7C449.6 246.5 431.2 248.9 420.6 250.4C410 252 400.1 252.2 391.9 255.1C383.7 257.9 379.2 264.8 371.4 267.7C363.6 270.6 351.5 272.5 345 272.4C338.4 272.3 334.4 268 332.3 267.2" stroke="#444" stroke-width="1.2" opacity="0.56"/>
<path d="M494.1 209.6C491.9 203.4 484.5 184.2 480.8 172.4C477.2 160.5 473.1 148.4 472.3 138.4C471.6 128.5 473.9 118.9 476.3 112.5C478.7 106 485 101.9 486.7 99.8" stroke="#444" stroke-width="1.2" opacity="0.52"/>
<path d="M495.1 211.8C492.5 205.5 483.1 186.5 479.6 174.2C476.1 162 474.9 148.6 474.1 138.5C473.3 128.4 472.7 120.2 474.7 113.5C476.8 106.8 484.4 100.9 486.4 98.4" stroke="#444" stroke-width="1.3" opacity="0.57"/>
<path d="M505.9 246.9C504.2 241 499.8 224 495.7 211.5C491.6 199 485.3 183.9 481.4 172C477.4 160.2 472.7 150.6 471.9 140.3C471.2 130 475 117.2 477.1 110.3C479.2 103.5 483.2 100.9 484.4 99.1" stroke="#444" stroke-width="1" opacity="0.70"/>
<path d="M538.4 210.1C539.5 203.8 544.1 184.1 544.8 172C545.4 159.8 545.5 147.3 542.5 137.2C539.5 127.1 531.7 117.1 526.7 111.3C521.7 105.4 514.7 103.6 512.3 102.1" stroke="#444" stroke-width="1.1" opacity="0.53"/>
<path d="M538.4 209.2C539.9 203.3 546.5 185.7 547.3 173.9C548 162.1 546.4 149.1 542.8 138.6C539.1 128.1 530.1 117.4 525.4 110.8C520.7 104.3 516.3 101.4 514.5 99.5" stroke="#444" stroke-width="1.1" opacity="0.59"/>
<path d="M520.4 241.2C523.3 235.9 533.3 220.4 537.8 209.3C542.2 198.2 546.6 186.8 547.2 174.8C547.8 162.8 545.1 148.1 541.4 137.2C537.8 126.3 530.3 115.7 525.5 109.4C520.8 103.2 515.2 101.2 513.1 99.6" stroke="#444" stroke-width="1.1" opacity="0.61"/>
<path d="M568.3 198.3C568.1 190.1 568.6 162.4 567.1 149.5C565.6 136.6 561.8 127.4 559.3 120.9C556.7 114.5 553.7 113 551.7 110.9C549.8 108.7 548.4 108.5 547.7 108" stroke="#444" stroke-width="0.9" opacity="0.53"/>
<path d="M560.2 235.9C561.3 229.4 565.7 211.1 567.1 196.8C568.4 182.6 569.3 163 568.2 150.4C567.1 137.8 562.9 128 560.5 121.5C558.1 115 556 113.8 553.8 111.6C551.7 109.4 548.5 108.8 547.5 108.2" stroke="#444" stroke-width="0.9" opacity="0.70"/>
<path d="M568.4 195.8C568.7 188.2 571.4 162.6 570.1 149.8C568.8 137 563.7 125.7 560.7 119.1C557.8 112.5 554.8 112.2 552.3 110C549.7 107.7 546.5 106.3 545.4 105.5" stroke="#444" stroke-width="1.3" opacity="0.70"/>
<path d="M601.2 198.8C601.6 192.5 604.9 173.2 603.4 161.2C601.9 149.2 595.7 134.5 592.1 126.7C588.5 118.8 584.3 116.1 582 114C579.6 112 578.7 114.3 578.1 114.3" stroke="#444" stroke-width="1.2" opacity="0.73"/>
<path d="M591.2 232.3C592.7 226.2 598 207.4 600.1 195.6C602.2 183.7 604.8 172.8 603.7 161.3C602.6 149.8 596.8 134 593.5 126.5C590.2 119.1 586.8 118.9 583.8 116.7C580.8 114.4 576.9 113.5 575.5 112.9" stroke="#444" stroke-width="1.1" opacity="0.78"/>
<path d="M600.7 198.7C600.7 192.4 602.4 172.7 601 161C599.6 149.3 595.4 136.3 592.2 128.5C589.1 120.7 584.4 116.5 581.9 114.1C579.5 111.8 578.2 114.5 577.5 114.6" stroke="#444" stroke-width="1.1" opacity="0.71"/>
<path d="M612.2 232.2C613.8 227.1 619.4 211.1 621.9 201.1C624.4 191.1 626.3 180.7 627.1 172C627.9 163.3 629.4 155 626.7 149C624 142.9 615.1 139.3 611.1 135.7C607.2 132.1 604.4 128.7 603 127.3" stroke="#444" stroke-width="1.2" opacity="0.71"/>
<path d="M619.4 200.3C620.8 195.6 626.6 180.8 627.5 172.4C628.4 164 626.9 156.3 624.6 150C622.3 143.7 617.5 138.3 613.7 134.7C609.9 131 603.7 129.1 601.7 128" stroke="#444" stroke-width="0.9" opacity="0.59"/>
<path d="M611.9 232.2C613.4 227.3 618.4 212.3 620.8 202.8C623.2 193.3 625.8 183.9 626.5 175.3C627.3 166.7 628.1 157.9 625.4 151.2C622.7 144.5 614.3 139 610.3 135.2C606.3 131.4 603 129.4 601.5 128.3" stroke="#444" stroke-width="1.2" opacity="0.58"/>
<path d="M624.3 237.7C627.5 233 638.8 218.4 643.5 209.8C648.1 201.1 651.3 192.8 652.3 185.8C653.3 178.8 651.8 173.6 649.6 167.9C647.3 162.1 641.6 155 638.7 151.2C635.8 147.5 633.4 146.2 632.3 145.2" stroke="#444" stroke-width="1.2" opacity="0.57"/>
<path d="M643.3 209.7C645 205.6 652.3 192 653.4 185C654.5 178 651.9 173.2 649.8 167.7C647.7 162.2 644.3 155.5 641 151.8C637.8 148.1 631.9 146.7 630.1 145.7" stroke="#444" stroke-width="1" opacity="0.74"/>
<path d="M624.6 237.9C627.6 233.2 638.6 218.9 643 210C647.3 201.1 649.7 191.4 650.6 184.5C651.5 177.6 650.3 173.8 648.6 168.5C646.9 163.2 643.3 156.7 640.5 152.6C637.7 148.5 633.4 145.4 631.9 144" stroke="#444" stroke-width="1.3" opacity="0.57"/>
<path d="M657.3 224.9C660.8 221.6 674.7 210 678.3 205C681.8 200 680.5 198.8 678.6 194.9C676.7 191.1 671 185.4 666.8 182C662.7 178.6 656 175.9 653.8 174.6" stroke="#444" stroke-width="1.1" opacity="0.64"/>
<path d="M657.2 224C660.7 221.1 674.3 211.3 678.4 206.7C682.4 202.2 682.8 200.9 681.3 196.7C679.8 192.5 673.6 185 669.3 181.6C665 178.2 657.9 177 655.6 176.1" stroke="#444" stroke-width="1" opacity="0.76"/>
<path d="M657.9 226.5C661.1 223.3 673.9 212.6 677.4 207.3C680.8 202.1 680.1 199.1 678.5 194.8C676.8 190.6 671.3 185.2 667.3 181.9C663.4 178.7 656.7 176.6 654.6 175.5" stroke="#444" stroke-width="1.3" opacity="0.64"/>
<path d="M673.6 244.1C676.3 240.9 685.9 229.2 689.8 224.9C693.7 220.6 696.7 221.2 696.9 218.1C697 215.1 693.3 210.3 690.5 206.5C687.8 202.7 682.1 197.4 680.4 195.5" stroke="#444" stroke-width="1.3" opacity="0.78"/>
<path d="M672.5 245.4C675.5 241.9 686.4 228.4 690.4 224C694.3 219.7 696.4 222.5 696.4 219.4C696.3 216.4 693 209.6 690 205.5C687 201.4 680.3 196.6 678.3 194.8" stroke="#444" stroke-width="1" opacity="0.72"/>
<path d="M648.1 266.4C652.2 262.8 665.7 251.3 672.6 244.6C679.6 238 686 231.1 689.7 226.6C693.5 222.2 694.7 221 695 217.9C695.3 214.8 694.1 211.6 691.5 208.1C689 204.6 681.9 198.7 680 196.8" stroke="#444" stroke-width="1" opacity="0.75"/>
<path d="M651.4 279.5C655.7 276.9 669.2 268.5 677.3 264C685.5 259.6 695.8 256.2 700.3 252.8C704.7 249.3 703.7 247.2 704.1 243.4C704.5 239.7 703.8 234.3 702.6 230.3C701.4 226.3 697.9 221.2 696.9 219.4" stroke="#444" stroke-width="0.9" opacity="0.68"/>
<path d="M651.5 279C655.8 276.8 670.1 270.2 677.7 265.8C685.4 261.3 693.1 255.8 697.3 252.5C701.5 249.1 702.5 249.3 703 245.7C703.6 242 701.7 234.8 700.7 230.7C699.8 226.6 698 222.5 697.5 220.9" stroke="#444" stroke-width="0.9" opacity="0.57"/>
<path d="M651.4 279.1C655.7 276.7 669.2 268.9 677.3 264.7C685.4 260.5 695.3 257.2 700 254C704.7 250.8 705.5 249 705.7 245.6C705.9 242.2 702.6 238 701.2 233.6C699.7 229.1 697.8 221.4 697.1 219" stroke="#444" stroke-width="0.9" opacity="0.51"/>
<g filter="url(#bl4)" stroke="none">
<path d="M485 176C492 190 498 215 500 236L494 236C488 215 482 195 485 176Z" fill="#777" opacity=".55"/>
<path d="M536 196C548 192 562 196 566 204C560 218 548 224 538 226Z" fill="#888" opacity=".5"/>
<path d="M572 190C590 186 606 192 612 204C600 216 584 222 572 224Z" fill="#999" opacity=".4"/>
<path d="M640 175C655 185 668 200 672 215C660 225 650 232 640 238C648 215 648 195 640 175Z" fill="#808080" opacity=".5"/>
<path d="M330 250C345 262 380 262 420 248L420 254C380 272 345 276 330 262Z" fill="#888" opacity=".45"/>
<path d="M372 170C380 190 400 212 440 228L436 232C398 220 374 196 372 170Z" fill="#999" opacity=".4"/>
</g>
<path d="M631 258.1Q665 239.3 697.1 222.4" stroke="#4c4c4c" stroke-width="0.9" opacity="0.66"/>
<path d="M626 263.6Q662.4 242.9 698.2 225.3" stroke="#4c4c4c" stroke-width="0.7" opacity="0.55"/>
<path d="M628.7 263.7Q664.3 244.4 698.8 226.8" stroke="#4c4c4c" stroke-width="1.1" opacity="0.53"/>
<path d="M625.5 266.1Q662.4 244.8 699.1 227.6" stroke="#4c4c4c" stroke-width="1" opacity="0.55"/>
<path d="M631.5 265.3Q665.8 246.4 699.9 229.8" stroke="#4c4c4c" stroke-width="0.7" opacity="0.75"/>
<path d="M630.7 268.2Q666.1 249.4 700.8 232.5" stroke="#4c4c4c" stroke-width="0.7" opacity="0.64"/>
<path d="M628.5 271.2Q665.3 250.9 701.4 234.6" stroke="#4c4c4c" stroke-width="1.1" opacity="0.76"/>
<path d="M631.6 270.8Q667.6 251.3 701.8 235.7" stroke="#4c4c4c" stroke-width="0.9" opacity="0.83"/>
<path d="M634.1 272.7Q668.9 254.1 702.8 238.9" stroke="#4c4c4c" stroke-width="1" opacity="0.76"/>
<path d="M634.2 273Q668 254.3 702.9 239.4" stroke="#4c4c4c" stroke-width="0.7" opacity="0.50"/>
<path d="M632.7 276.1Q667.3 257.7 703.7 242" stroke="#4c4c4c" stroke-width="1.1" opacity="0.68"/>
<path d="M630.2 279.1Q667.1 259.6 704.2 244.1" stroke="#4c4c4c" stroke-width="0.9" opacity="0.46"/>
<path d="M636.3 278.9Q670.2 262.1 704.6 246.9" stroke="#4c4c4c" stroke-width="1" opacity="0.78"/>
<path d="M632 282.6Q668.9 265.1 704.9 249" stroke="#4c4c4c" stroke-width="0.8" opacity="0.76"/>
<path d="M636.1 282.1Q671.2 264.9 705.1 250.5" stroke="#4c4c4c" stroke-width="1" opacity="0.80"/>
<path d="M637.2 284.1Q670.4 267.2 705.6 253.2" stroke="#4c4c4c" stroke-width="1" opacity="0.56"/>
<path d="M639.3 284.1Q671.8 268 705.7 254.3" stroke="#4c4c4c" stroke-width="0.7" opacity="0.54"/>
<path d="M633 289.1Q670.5 270.7 706 256.8" stroke="#4c4c4c" stroke-width="0.7" opacity="0.82"/>
<path d="M639.1 289.7Q672.2 273.7 706 260.6" stroke="#4c4c4c" stroke-width="0.8" opacity="0.62"/>
<path d="M638.3 291Q671.3 274.2 706 261.7" stroke="#4c4c4c" stroke-width="0.8" opacity="0.49"/>
<path d="M635.2 294.8Q670.1 278.6 706 264.4" stroke="#4c4c4c" stroke-width="1" opacity="0.59"/>
<path d="M640.7 294.2Q674.2 279 706 266.5" stroke="#4c4c4c" stroke-width="0.7" opacity="0.51"/>
<path d="M640 297.1Q673.4 281.3 706 269.4" stroke="#4c4c4c" stroke-width="1" opacity="0.77"/>
<path d="M638.6 298.5Q671.7 283.3 706 270.4" stroke="#4c4c4c" stroke-width="1" opacity="0.77"/>
<path d="M644.1 298.6Q675.2 284.5 705.7 273.1" stroke="#4c4c4c" stroke-width="0.8" opacity="0.53"/>
<path d="M645.2 301Q675.6 286.8 705.5 276.3" stroke="#4c4c4c" stroke-width="0.8" opacity="0.62"/>
<path d="M640.6 304.9Q672 290.6 705.3 278.6" stroke="#4c4c4c" stroke-width="0.8" opacity="0.57"/>
<path d="M642 306.6Q673.8 293.1 705.1 281.2" stroke="#4c4c4c" stroke-width="0.8" opacity="0.57"/>
<path d="M646.7 306.9Q675.1 293.3 704.9 283.6" stroke="#4c4c4c" stroke-width="1" opacity="0.78"/>
<path d="M641.7 311.1Q673.8 296.8 704.6 286.1" stroke="#4c4c4c" stroke-width="0.8" opacity="0.74"/>
<path d="M645 310.5Q674 296.5 704.6 286.9" stroke="#4c4c4c" stroke-width="0.9" opacity="0.51"/>
<path d="M644.6 314.5Q674.3 300.9 704.2 291.3" stroke="#4c4c4c" stroke-width="0.7" opacity="0.65"/>
<path d="M649.4 313.9Q677.2 301.8 704.1 292.6" stroke="#4c4c4c" stroke-width="1" opacity="0.49"/>
<path d="M649.7 314.9Q676.8 302.5 704 293.9" stroke="#4c4c4c" stroke-width="1" opacity="0.54"/>
<path d="M650.3 317.3Q677.4 306 703.7 296.9" stroke="#4c4c4c" stroke-width="0.8" opacity="0.63"/>
<path d="M648.3 321.4Q676.1 308.9 703.4 300.6" stroke="#4c4c4c" stroke-width="0.9" opacity="0.70"/>
<path d="M655.8 319.3Q680.5 309.6 703.3 301.5" stroke="#4c4c4c" stroke-width="0.8" opacity="0.64"/>
<path d="M655.1 322.4Q678.2 312.4 703 304.6" stroke="#4c4c4c" stroke-width="1" opacity="0.62"/>
<path d="M654.9 323.5Q678.1 313.9 702.9 305.7" stroke="#4c4c4c" stroke-width="0.7" opacity="0.57"/>
<path d="M658.6 325.7Q679.7 315.5 702.4 309.7" stroke="#4c4c4c" stroke-width="0.8" opacity="0.66"/>
<path d="M659.4 327.6Q680.1 318.8 702.1 312.2" stroke="#4c4c4c" stroke-width="0.9" opacity="0.59"/>
<path d="M659.2 328.3Q681.5 318.5 702 312.8" stroke="#4c4c4c" stroke-width="0.8" opacity="0.75"/>
<path d="M656.1 333.1Q678.8 324.3 701.5 316.9" stroke="#4c4c4c" stroke-width="0.9" opacity="0.57"/>
<path d="M658.1 333.6Q680.2 323.8 701.3 318.3" stroke="#4c4c4c" stroke-width="0.8" opacity="0.83"/>
<path d="M658.1 334.9Q679.3 325.4 701.2 319.7" stroke="#4c4c4c" stroke-width="0.8" opacity="0.64"/>
<path d="M664.5 336.5Q683.3 328.4 700.6 323.9" stroke="#4c4c4c" stroke-width="0.8" opacity="0.75"/>
<path d="M664.4 337.2Q682.3 329.9 700.5 324.7" stroke="#4c4c4c" stroke-width="1" opacity="0.68"/>
<path d="M660.8 339.7Q680.8 332 700.4 326.1" stroke="#4c4c4c" stroke-width="1.1" opacity="0.58"/>
<path d="M661.5 343Q680.2 334.8 699.8 330" stroke="#4c4c4c" stroke-width="0.8" opacity="0.59"/>
<path d="M666.7 342.2Q682.6 335.8 699.7 331.1" stroke="#4c4c4c" stroke-width="0.9" opacity="0.70"/>
<path d="M663.2 346.3Q680.7 339.5 699.2 334.3" stroke="#4c4c4c" stroke-width="1" opacity="0.85"/>
<path d="M663.7 347.7Q681.9 340 698.9 336.1" stroke="#4c4c4c" stroke-width="1" opacity="0.60"/>
<path d="M668.4 348.3Q683.5 341.6 698.5 338.4" stroke="#4c4c4c" stroke-width="1" opacity="0.59"/>
<path d="M664.4 351.5Q682 343.9 698.2 340.5" stroke="#4c4c4c" stroke-width="1.1" opacity="0.75"/>
<path d="M666.1 352.5Q681.1 346.5 697.9 342.3" stroke="#4c4c4c" stroke-width="0.9" opacity="0.63"/>
<path d="M665.6 353.9Q682.2 347.9 697.7 343.6" stroke="#4c4c4c" stroke-width="0.8" opacity="0.59"/>
<path d="M670.2 354.1Q683.5 347.5 697.4 345.5" stroke="#4c4c4c" stroke-width="1" opacity="0.54"/>
<path d="M670.7 355.5Q684.4 349.3 697.1 347.1" stroke="#4c4c4c" stroke-width="0.9" opacity="0.61"/>
<path d="M666 360.1Q680.9 354.1 696.5 350.6" stroke="#4c4c4c" stroke-width="1.1" opacity="0.64"/>
<path d="M667.8 361.6Q681.6 356.3 696.1 352.8" stroke="#4c4c4c" stroke-width="0.9" opacity="0.49"/>
<path d="M667.5 362.9Q681.7 357 695.8 354.2" stroke="#4c4c4c" stroke-width="0.9" opacity="0.80"/>
<path d="M671.6 363.7Q683.2 358.3 695.4 356.4" stroke="#4c4c4c" stroke-width="1.1" opacity="0.73"/>
<path d="M667.7 365.7Q680.5 360.1 695.2 357.3" stroke="#4c4c4c" stroke-width="0.9" opacity="0.74"/>
<path d="M672.9 366.5Q683.9 362.3 694.8 360" stroke="#4c4c4c" stroke-width="1" opacity="0.59"/>
<path d="M669.5 368.9Q682.6 363.3 694.5 361.6" stroke="#4c4c4c" stroke-width="1.1" opacity="0.85"/>
<path d="M672 370.4Q683.4 366.4 694 364" stroke="#4c4c4c" stroke-width="0.8" opacity="0.57"/>
<path d="M670.3 372.5Q681.3 367.7 693.6 365.7" stroke="#4c4c4c" stroke-width="0.9" opacity="0.72"/>
<path d="M669.4 374.2Q682.3 369.4 693.2 367.3" stroke="#4c4c4c" stroke-width="1" opacity="0.52"/>
<path d="M672 376.6Q682.7 372.8 692.3 370.8" stroke="#4c4c4c" stroke-width="0.8" opacity="0.82"/>
<path d="M674.8 376.4Q683.5 373.1 692.1 371.4" stroke="#4c4c4c" stroke-width="1.1" opacity="0.83"/>
<path d="M670.6 379.9Q681.2 374.9 691.5 374" stroke="#4c4c4c" stroke-width="1" opacity="0.77"/>
<path d="M672.5 381Q681.3 376.5 691.1 375.8" stroke="#4c4c4c" stroke-width="0.9" opacity="0.66"/>
<path d="M675.3 382.2Q681.9 378.2 690.5 377.9" stroke="#4c4c4c" stroke-width="1" opacity="0.75"/>
<path d="M674.7 383.7Q682.5 379.5 690.2 379.4" stroke="#4c4c4c" stroke-width="0.9" opacity="0.81"/>
<path d="M673.4 385.7Q682.1 382.4 690 381.3" stroke="#4c4c4c" stroke-width="1" opacity="0.73"/>
<path d="M672.6 387.9Q682.1 383.4 690 383.4" stroke="#4c4c4c" stroke-width="1.1" opacity="0.63"/>
<path d="M676.3 388.4Q683.8 385.4 690 384.9" stroke="#4c4c4c" stroke-width="0.8" opacity="0.63"/>
<path d="M672.6 392.1Q681 388.9 690 387.9" stroke="#4c4c4c" stroke-width="0.8" opacity="0.53"/>
<path d="M661.6 245.9L698.5 226" stroke="#444" stroke-width="0.9" opacity="0.56"/>
<path d="M658.8 249.5L699.3 228" stroke="#444" stroke-width="0.7" opacity="0.52"/>
<path d="M664.3 249.2L700.1 230.4" stroke="#444" stroke-width="0.8" opacity="0.62"/>
<path d="M672.8 247.2L700.8 232.8" stroke="#444" stroke-width="0.8" opacity="0.78"/>
<path d="M659.9 256.1L701.5 234.9" stroke="#444" stroke-width="0.9" opacity="0.50"/>
<path d="M658.1 258.5L702 236.4" stroke="#444" stroke-width="0.9" opacity="0.79"/>
<path d="M663.5 258.5L702.8 238.9" stroke="#444" stroke-width="0.8" opacity="0.57"/>
<path d="M664.8 260.7L703.6 241.8" stroke="#444" stroke-width="0.7" opacity="0.75"/>
<path d="M658.5 265.8L704.1 243.8" stroke="#444" stroke-width="1" opacity="0.70"/>
<path d="M669.8 262.1L704.4 245.6" stroke="#444" stroke-width="1" opacity="0.59"/>
<path d="M664.4 267.1L704.8 248.1" stroke="#444" stroke-width="0.9" opacity="0.68"/>
<path d="M676.4 264.5L705.3 251.2" stroke="#444" stroke-width="0.7" opacity="0.58"/>
<path d="M674.1 268.1L705.7 253.7" stroke="#444" stroke-width="0.9" opacity="0.69"/>
<path d="M676.9 267.9L705.8 254.9" stroke="#444" stroke-width="0.9" opacity="0.59"/>
<path d="M662.8 276.1L706 256.8" stroke="#444" stroke-width="1" opacity="0.73"/>
<path d="M666.6 276.3L706 258.8" stroke="#444" stroke-width="0.8" opacity="0.62"/>
<path d="M676.8 274.7L706 262" stroke="#444" stroke-width="0.8" opacity="0.64"/>
<path d="M673.2 280.1L706 266" stroke="#444" stroke-width="0.8" opacity="0.57"/>
<path d="M672.9 281.3L706 267.2" stroke="#444" stroke-width="0.9" opacity="0.54"/>
<path d="M669.7 285L706 269.7" stroke="#444" stroke-width="0.8" opacity="0.77"/>
<path d="M668.5 288.3L705.8 272.7" stroke="#444" stroke-width="0.8" opacity="0.74"/>
<path d="M675.4 286.9L705.6 274.3" stroke="#444" stroke-width="0.7" opacity="0.52"/>
<path d="M677.5 288.1L705.5 276.6" stroke="#444" stroke-width="0.7" opacity="0.53"/>
<path d="M669.5 293.8L705.2 279.1" stroke="#444" stroke-width="0.9" opacity="0.70"/>
<path d="M680.5 293.6L704.8 283.8" stroke="#444" stroke-width="0.9" opacity="0.77"/>
<path d="M680.2 294.2L704.8 284.3" stroke="#444" stroke-width="0.8" opacity="0.52"/>
<path d="M679.8 298.2L704.4 288.4" stroke="#444" stroke-width="0.8" opacity="0.48"/>
<path d="M678.7 301.3L704.2 291.2" stroke="#444" stroke-width="0.9" opacity="0.79"/>
<path d="M669.1 305.4L704.2 291.7" stroke="#444" stroke-width="0.7" opacity="0.46"/>
<path d="M677.7 305.9L703.8 295.8" stroke="#444" stroke-width="0.7" opacity="0.51"/>
<path d="M677.6 307.1L703.7 297" stroke="#444" stroke-width="0.9" opacity="0.79"/>
<path d="M682.8 307.8L703.4 300" stroke="#444" stroke-width="0.8" opacity="0.59"/>
<path d="M673.9 313.3L703.2 302.2" stroke="#444" stroke-width="1" opacity="0.80"/>
<path d="M674 316.7L702.9 305.9" stroke="#444" stroke-width="0.8" opacity="0.50"/>
<path d="M680.9 315.6L702.7 307.5" stroke="#444" stroke-width="0.7" opacity="0.64"/>
<path d="M673.5 321.4L702.3 310.8" stroke="#444" stroke-width="0.8" opacity="0.73"/>
<path d="M678.6 321.6L702 313.1" stroke="#444" stroke-width="1" opacity="0.66"/>
<path d="M678.3 323.4L701.8 315" stroke="#444" stroke-width="1" opacity="0.75"/>
<path d="M680.7 326.1L701.3 318.9" stroke="#444" stroke-width="0.7" opacity="0.51"/>
<path d="M682.2 326.7L701.1 320" stroke="#444" stroke-width="0.7" opacity="0.73"/>
<path d="M681 330.2L700.7 323.3" stroke="#444" stroke-width="0.7" opacity="0.73"/>
<path d="M682.5 331L700.5 324.8" stroke="#444" stroke-width="0.9" opacity="0.70"/>
<path d="M685.3 332.2L700.2 327" stroke="#444" stroke-width="1" opacity="0.78"/>
<path d="M679.7 336.6L699.9 329.7" stroke="#444" stroke-width="0.8" opacity="0.54"/>
<path d="M684 337.8L699.4 332.7" stroke="#444" stroke-width="0.9" opacity="0.74"/>
<path d="M683.3 340.4L699 335.1" stroke="#444" stroke-width="0.8" opacity="0.72"/>
<path d="M682.7 341.1L698.9 335.7" stroke="#444" stroke-width="0.7" opacity="0.75"/>
<path d="M680.2 344.5L698.5 338.5" stroke="#444" stroke-width="1" opacity="0.48"/>
<path d="M684.1 346.2L698 341.7" stroke="#444" stroke-width="0.7" opacity="0.72"/>
<path d="M685.2 347.2L697.8 343.1" stroke="#444" stroke-width="0.9" opacity="0.60"/>
<path d="M679.3 351.8L697.3 346.1" stroke="#444" stroke-width="0.9" opacity="0.49"/>
<path d="M679.6 352.4L697.2 346.8" stroke="#444" stroke-width="1" opacity="0.60"/>
<path d="M680.7 354.9L696.6 349.9" stroke="#444" stroke-width="0.9" opacity="0.68"/>
<path d="M682.3 355.1L696.5 350.7" stroke="#444" stroke-width="0.9" opacity="0.53"/>
<path d="M681 358.6L695.9 354.1" stroke="#444" stroke-width="0.8" opacity="0.77"/>
<path d="M685.5 359.8L695.3 356.9" stroke="#444" stroke-width="0.8" opacity="0.65"/>
<path d="M684 362L695 358.7" stroke="#444" stroke-width="0.8" opacity="0.75"/>
<path d="M685.1 362.9L694.7 360" stroke="#444" stroke-width="0.8" opacity="0.49"/>
<path d="M680.5 366.9L694.2 362.9" stroke="#444" stroke-width="0.9" opacity="0.47"/>
<path d="M682.6 368.7L693.6 365.5" stroke="#444" stroke-width="0.9" opacity="0.50"/>
<path d="M681.7 370.2L693.3 366.9" stroke="#444" stroke-width="0.8" opacity="0.74"/>
<path d="M682.2 370.8L693.1 367.7" stroke="#444" stroke-width="0.7" opacity="0.75"/>
<path d="M679.9 375.1L692.1 371.6" stroke="#444" stroke-width="0.8" opacity="0.61"/>
<path d="M683.1 375.8L691.7 373.3" stroke="#444" stroke-width="0.8" opacity="0.78"/>
<path d="M680.4 377.4L691.4 374.3" stroke="#444" stroke-width="0.9" opacity="0.49"/>
<path d="M681.9 378.9L690.9 376.4" stroke="#444" stroke-width="0.8" opacity="0.51"/>
<path d="M681.6 382.4L690 380.1" stroke="#444" stroke-width="0.9" opacity="0.54"/>
<path d="M680.8 384.5L690 382.1" stroke="#444" stroke-width="1" opacity="0.66"/>
<path d="M683.1 386.1L690 384.3" stroke="#444" stroke-width="0.9" opacity="0.64"/>
<path d="M682 388.1L690 386.2" stroke="#444" stroke-width="0.7" opacity="0.77"/>
<path d="M700 226C700.8 229.2 703.9 239 705 245C706.1 251 706.4 255.3 706.5 262C706.6 268.7 706.2 276.2 705.5 285C704.8 293.8 703.2 305 702 315C700.8 325 699.5 336.5 698 345C696.5 353.5 693.8 362.5 693 366" stroke="#444" stroke-width="1.4" opacity="0.90"/>
<path d="M703 232C704 236.3 708 248.3 709 258C710 267.7 709.7 278.8 709 290C708.3 301.2 706.5 314.7 705 325C703.5 335.3 700.8 347.5 700 352" stroke="#666" stroke-width="0.7" opacity="0.60"/>
<path d="M350.2 300.1C354.8 321.8 362.9 344.3 373.1 364.5" stroke="#4a4a4a" stroke-width="0.8" opacity="0.50"/>
<path d="M348.1 285.9C353.6 319.6 366 353.6 382.3 384.7" stroke="#4a4a4a" stroke-width="0.8" opacity="0.68"/>
<path d="M350.1 292.7C355.1 321.5 365.2 353.1 382.1 383.3" stroke="#4a4a4a" stroke-width="0.8" opacity="0.83"/>
<path d="M348.6 272.4C351.2 293 356 315.2 363.6 337.4" stroke="#4a4a4a" stroke-width="0.9" opacity="0.53"/>
<path d="M347.8 272C351.2 293.6 356.8 316.8 364.4 338.9" stroke="#4a4a4a" stroke-width="1.1" opacity="0.58"/>
<path d="M355.9 303.6C358.8 315.2 362 326.8 365.8 338.4" stroke="#4a4a4a" stroke-width="0.8" opacity="0.80"/>
<path d="M350.9 271.8C352.8 296.8 357.2 323.9 366.9 349.3" stroke="#4a4a4a" stroke-width="0.8" opacity="0.71"/>
<path d="M355.3 271.3C355.8 295.9 359.3 322.6 367.7 348" stroke="#4a4a4a" stroke-width="0.8" opacity="0.51"/>
<path d="M355.3 267.7C355.7 297.2 361.5 327 371.9 355.3" stroke="#4a4a4a" stroke-width="1" opacity="0.55"/>
<path d="M358.2 302.1C361.1 320.9 365.6 339.9 372 357.9" stroke="#4a4a4a" stroke-width="1.1" opacity="0.69"/>
<path d="M354.4 266.8C355.5 291.4 360.9 318.8 369.2 345.3" stroke="#4a4a4a" stroke-width="0.8" opacity="0.58"/>
<path d="M359 292.2C359.9 306.3 362.2 321.1 365.9 335.7" stroke="#4a4a4a" stroke-width="0.8" opacity="0.49"/>
<path d="M360.3 267.6C358.3 292.9 362 319.6 369.3 345.3" stroke="#4a4a4a" stroke-width="0.8" opacity="0.49"/>
<path d="M362 272.9C360.6 293.9 362.6 315.1 367.6 336" stroke="#4a4a4a" stroke-width="1.1" opacity="0.82"/>
<path d="M361.2 266.8C359.1 296.6 364.7 329 374.2 358.7" stroke="#4a4a4a" stroke-width="0.9" opacity="0.50"/>
<path d="M364.1 268.5C364.6 296.6 369 332.3 377.3 363.2" stroke="#4a4a4a" stroke-width="0.8" opacity="0.73"/>
<path d="M365.5 291.1C366.2 306.8 367.7 322.7 370.8 338.8" stroke="#4a4a4a" stroke-width="1" opacity="0.50"/>
<path d="M365.2 297.2C367 325.1 374.7 354.2 382.2 378.6" stroke="#4a4a4a" stroke-width="1.1" opacity="0.71"/>
<path d="M367.4 272.8C366.2 296.5 368.4 321.3 373.6 345.5" stroke="#4a4a4a" stroke-width="0.9" opacity="0.62"/>
<path d="M367.6 303.9C369.3 322.6 373 341.4 377.6 359" stroke="#4a4a4a" stroke-width="0.8" opacity="0.61"/>
<path d="M371.4 263.9C367.9 295.9 371.4 334.5 380.4 369.6" stroke="#4a4a4a" stroke-width="0.8" opacity="0.76"/>
<path d="M370.6 284.8C369.6 310.7 371.9 339.4 378.7 366.8" stroke="#4a4a4a" stroke-width="1" opacity="0.54"/>
<path d="M370.8 300.6C372.1 325.2 375.8 351.1 382.5 376" stroke="#4a4a4a" stroke-width="0.9" opacity="0.62"/>
<path d="M375.7 261.6C368.7 289.7 372.7 323.5 378.4 354" stroke="#4a4a4a" stroke-width="1" opacity="0.60"/>
<path d="M376.5 262.7C370.7 290.4 371.7 319.4 376.8 348.6" stroke="#4a4a4a" stroke-width="0.8" opacity="0.72"/>
<path d="M375 269.9C372.6 299.8 374.3 330.7 380.3 361.1" stroke="#4a4a4a" stroke-width="0.8" opacity="0.46"/>
<path d="M374.7 298.1C374.4 309.7 374.9 321.8 376.1 333.8" stroke="#4a4a4a" stroke-width="0.8" opacity="0.79"/>
<path d="M375 302.8C375.2 312.3 375.9 321.7 377.1 331.2" stroke="#4a4a4a" stroke-width="0.8" opacity="0.70"/>
<path d="M376.7 302.7C376.3 312.7 376.4 322.7 377.2 332.8" stroke="#4a4a4a" stroke-width="0.8" opacity="0.45"/>
<path d="M379.4 266.6C375 295.1 376 327.4 380.4 357.4" stroke="#4a4a4a" stroke-width="0.8" opacity="0.79"/>
<path d="M381.6 274.6C378.1 293.6 377.8 313.6 379.1 333.6" stroke="#4a4a4a" stroke-width="0.9" opacity="0.58"/>
<path d="M381 287.6C378.2 309.3 378.7 331.2 380.8 352.6" stroke="#4a4a4a" stroke-width="0.8" opacity="0.77"/>
<path d="M388.5 258.1C380.6 285.3 378.9 322.2 381.7 354.5" stroke="#4a4a4a" stroke-width="0.8" opacity="0.71"/>
<path d="M386.4 264C378.6 292 378.5 323.9 381.4 354.1" stroke="#4a4a4a" stroke-width="0.8" opacity="0.57"/>
<path d="M384.6 289.5C382.2 308.2 381.6 327.7 382.5 346.9" stroke="#4a4a4a" stroke-width="1.1" opacity="0.78"/>
<path d="M388.2 265.1C378.8 300.2 383.9 339.3 384.9 373.8" stroke="#4a4a4a" stroke-width="0.7" opacity="0.81"/>
<path d="M394.5 257.5C386.6 280.3 383.2 306 382.7 330.7" stroke="#4a4a4a" stroke-width="0.9" opacity="0.50"/>
<path d="M390.9 267.8C384.4 304.8 385.3 345.7 385.4 378.9" stroke="#4a4a4a" stroke-width="1" opacity="0.54"/>
<path d="M391.4 275.7C386.4 295.8 384.1 316.9 383.7 337.5" stroke="#4a4a4a" stroke-width="0.8" opacity="0.75"/>
<path d="M391.2 276C387.5 291.7 385.6 309.1 384.8 326.4" stroke="#4a4a4a" stroke-width="1" opacity="0.80"/>
<path d="M392.8 274.4C387.4 300.1 385.6 327.9 385.1 354.4" stroke="#4a4a4a" stroke-width="0.8" opacity="0.74"/>
<path d="M395.1 271.7C390.1 288.5 387.8 306 386.7 323.5" stroke="#4a4a4a" stroke-width="0.8" opacity="0.78"/>
<path d="M391.4 289.8C387.2 309.8 386.1 330.8 386 350.6" stroke="#4a4a4a" stroke-width="1.1" opacity="0.53"/>
<path d="M394.6 277C390.1 294.8 388.7 314.3 387.8 333.6" stroke="#4a4a4a" stroke-width="0.9" opacity="0.63"/>
<path d="M407 250.8C392.7 285.2 386.5 331.7 386 369.3" stroke="#4a4a4a" stroke-width="1" opacity="0.54"/>
<path d="M397 282.3C393.4 296.9 391.4 312.5 389.8 328.1" stroke="#4a4a4a" stroke-width="1" opacity="0.47"/>
<path d="M377.3 330C378.3 342.5 380 354.8 382.1 366.8" stroke="#444" stroke-width="0.7" opacity="0.49"/>
<path d="M372.5 304.2C373.3 318.1 375 331.9 377.1 345.7" stroke="#444" stroke-width="0.9" opacity="0.52"/>
<path d="M373.9 303.5C374.1 317.1 375.5 331 377.5 344.4" stroke="#444" stroke-width="0.9" opacity="0.66"/>
<path d="M383.9 342.5C384.1 349.1 384.3 355.8 384.6 362.3" stroke="#444" stroke-width="1" opacity="0.65"/>
<path d="M389.2 315.4C388.6 322.3 388.1 329.1 387.8 335.9" stroke="#444" stroke-width="0.9" opacity="0.53"/>
<path d="M389.4 275.3C387.1 287.4 385.9 300.2 385.2 313.2" stroke="#444" stroke-width="0.7" opacity="0.77"/>
<path d="M371.7 295.5C371.6 309.5 372.9 323.9 375 338.1" stroke="#444" stroke-width="0.9" opacity="0.57"/>
<path d="M380.1 275.1C378.6 284.9 377.8 295 377.5 305.1" stroke="#444" stroke-width="1" opacity="0.48"/>
<path d="M381.1 312C380.8 322.1 381.1 332.2 381.8 342.1" stroke="#444" stroke-width="0.7" opacity="0.58"/>
<path d="M400.9 265.4C398.1 274.1 395.9 283.4 394.3 293.1" stroke="#444" stroke-width="0.8" opacity="0.59"/>
<path d="M370.7 303.7C371 312 371.8 320.5 372.8 328.9" stroke="#444" stroke-width="0.8" opacity="0.74"/>
<path d="M374.9 325.1C375.9 336.3 377.3 347.4 379.1 358" stroke="#444" stroke-width="1" opacity="0.51"/>
<path d="M381.8 329.2C382 339.8 382.7 350.4 383.6 360.7" stroke="#444" stroke-width="0.8" opacity="0.45"/>
<path d="M383.9 344C384.5 357.3 385.6 370.4 386.4 383.1" stroke="#444" stroke-width="0.8" opacity="0.73"/>
<path d="M387.7 287.7C386.1 298.8 385.2 310.3 384.8 321.8" stroke="#444" stroke-width="0.8" opacity="0.59"/>
<path d="M385.2 340.7C385.1 350.6 385.1 360.4 385 369.7" stroke="#444" stroke-width="0.9" opacity="0.55"/>
<path d="M385.9 326.1C385.3 341.3 385.7 356.8 386.2 371.8" stroke="#444" stroke-width="0.9" opacity="0.74"/>
<path d="M378.9 295.3C378.6 304.4 378.7 313.7 379.1 322.9" stroke="#444" stroke-width="1" opacity="0.74"/>
<path d="M387.7 320C386.9 328.6 386.4 337.2 386 345.7" stroke="#444" stroke-width="1" opacity="0.53"/>
<path d="M391.9 292.1C390.7 298.7 389.8 305.3 389.1 312.1" stroke="#444" stroke-width="1.1" opacity="0.49"/>
<path d="M377.7 298.6C377.4 313.1 378.1 328 379.4 342.7" stroke="#444" stroke-width="1.1" opacity="0.45"/>
<path d="M393.9 285.6C392.1 295.5 390.7 305.6 389.6 315.8" stroke="#444" stroke-width="0.8" opacity="0.68"/>
<path d="M386.3 296.7C385.5 303.9 385 311.2 384.7 318.6" stroke="#444" stroke-width="0.8" opacity="0.68"/>
<path d="M400.2 272.8C396.9 284.2 394.4 296 392.6 308.1" stroke="#444" stroke-width="1" opacity="0.50"/>
<path d="M385.1 328.3C384.7 340.5 385 352.6 385.6 364" stroke="#444" stroke-width="0.8" opacity="0.79"/>
<path d="M376.1 331.2C377.3 342.6 379 353.9 381 364.6" stroke="#444" stroke-width="0.8" opacity="0.52"/>
<path d="M387.5 270.1C386 276.8 385 283.7 384.2 290.8" stroke="#444" stroke-width="0.7" opacity="0.57"/>
<path d="M390 312.4C389.2 319.4 388.5 326.5 388 333.6" stroke="#444" stroke-width="0.9" opacity="0.55"/>
<path d="M383.2 343.8C383.6 356.7 384.5 369.6 385.6 382.3" stroke="#444" stroke-width="0.7" opacity="0.75"/>
<path d="M385.2 326C384.6 337.7 384.5 349.4 384.7 360.8" stroke="#444" stroke-width="0.8" opacity="0.62"/>
<path d="M387.7 340.5C386.8 352.5 386.3 364.5 386.1 376" stroke="#444" stroke-width="0.9" opacity="0.65"/>
<path d="M383.2 316.6C383 329.7 383.7 343.1 384.5 356.2" stroke="#444" stroke-width="0.8" opacity="0.55"/>
<path d="M378 290C377.3 300.4 377.3 311.3 377.8 322.2" stroke="#444" stroke-width="0.9" opacity="0.54"/>
<path d="M394.3 278.2C391.2 291.5 389 305.3 387.7 319.2" stroke="#444" stroke-width="0.9" opacity="0.62"/>
<path d="M388.7 326.2C387.8 337.6 387.3 348.9 386.9 359.6" stroke="#444" stroke-width="0.8" opacity="0.73"/>
<path d="M387.6 324.7C386.4 338.3 386 351.8 386.1 364.4" stroke="#444" stroke-width="1" opacity="0.73"/>
<path d="M398.1 284.4C396.1 292.9 394.6 301.8 393.3 310.7" stroke="#444" stroke-width="0.9" opacity="0.45"/>
<path d="M398.3 271.9C395.7 280.7 393.6 289.7 392 298.8" stroke="#444" stroke-width="1" opacity="0.59"/>
<path d="M387.7 316.4C387.1 323.6 386.6 330.9 386.4 338.1" stroke="#444" stroke-width="0.8" opacity="0.67"/>
<path d="M389.8 305.5C388.1 318.4 387.2 331.6 386.8 344.6" stroke="#444" stroke-width="0.8" opacity="0.55"/>
<path d="M377.8 299.4C377.3 313.4 377.9 327.8 379.3 342" stroke="#444" stroke-width="1.1" opacity="0.58"/>
<path d="M383.3 344C383.5 354.7 384 365.2 384.5 375" stroke="#444" stroke-width="0.9" opacity="0.74"/>
<path d="M395.1 286.2C393.1 296.6 391.7 307.3 390.6 318" stroke="#444" stroke-width="0.9" opacity="0.76"/>
<path d="M389.4 341.8C388.9 348.7 388.4 355.5 388 362.2" stroke="#444" stroke-width="1" opacity="0.73"/>
<path d="M383.9 276.1C381.6 290.2 380.6 304.8 380.6 319.5" stroke="#444" stroke-width="0.8" opacity="0.55"/>
<path d="M381.5 313.4C381.1 323.4 381.2 333.5 381.6 343.6" stroke="#444" stroke-width="1.1" opacity="0.57"/>
<path d="M346 270C336 280 330 286 328 290" stroke="#777" stroke-width="0.7" opacity="0.70"/>
<path d="M352 274C342 282 336 287 332 288" stroke="#777" stroke-width="0.7" opacity="0.70"/>
<path d="M340 262C330 268 324 266 320 256" stroke="#666" stroke-width="0.7" opacity="0.70"/>
<path d="M339.3 273.6C336.8 272 327.2 269.1 324.4 264.2C321.6 259.3 323.6 252.1 322.5 244.2C321.3 236.3 317.2 224.6 317.6 216.8C318.1 208.9 321.1 202.5 325.1 197C329.1 191.4 334.2 190.3 341.7 183.4C349.3 176.5 360.1 164.1 370.3 155.5C380.5 147 391.1 139.1 402.8 132.3C414.4 125.4 427.7 119.8 440.2 114.4C452.8 109 467.1 103.1 477.9 99.7C488.8 96.2 496.7 93.6 505.4 93.7C514.1 93.8 521.5 97.5 530.2 100.2C538.9 102.9 546.8 105.7 557.7 109.8C568.7 114 583.7 118.2 595.8 124.9C608 131.7 620.8 142.1 630.4 150.1C640 158.1 646 165.8 653.6 173C661.2 180.2 668.6 185.5 675.8 193.3C683 201 692.1 209.2 696.8 219.6C701.4 230.1 702.6 249.9 703.7 255.9" stroke="#666" stroke-width="0.8" opacity="0.60"/>
<path d="M337.7 275.2C335.8 272.8 329.3 266.3 326.6 260.9C324 255.5 323.4 250.1 321.7 242.7C320 235.2 315.5 224.1 316.4 216.4C317.4 208.8 323.1 202.8 327.6 196.8C332 190.7 335.8 186.8 343.1 180.2C350.4 173.7 361.1 165.3 371.5 157.5C382 149.7 394.1 141.1 405.8 133.5C417.4 125.8 429.2 116.7 441.3 111.5C453.4 106.2 467.9 104.7 478.4 101.9C488.8 99.1 495.9 95.1 504.2 94.7C512.4 94.2 518.9 96 528 99.2C537.1 102.3 547.9 109.6 558.7 113.7C569.4 117.8 580.2 117.8 592.6 123.7C604.9 129.7 622.8 141.2 632.8 149.4C642.9 157.6 645.8 165.6 653.1 173C660.4 180.4 669.7 185.8 676.7 194C683.6 202.2 690.2 211.6 695 222.1C699.8 232.7 703.5 251.4 705.2 257.3" stroke="#666" stroke-width="0.8" opacity="0.60"/>
<path d="M340.4 275.6C338.4 273.2 331.1 267.1 328.4 261.4C325.8 255.7 325.9 249.2 324.4 241.5C323 233.9 319.6 223.2 319.9 215.6C320.2 208.1 322.3 202.4 326.2 196.4C330.1 190.5 336.3 186.4 343.3 180.1C350.4 173.7 358.2 165.9 368.5 158.4C378.9 151 393.2 143.2 405.3 135.3C417.3 127.3 428.9 116.6 440.9 110.7C453 104.7 466.9 102.8 477.4 99.6C487.8 96.4 495.3 91.3 503.9 91.5C512.4 91.7 519.2 97.3 528.8 100.8C538.4 104.4 550.3 108.6 561.3 112.7C572.3 116.7 583 119.5 594.7 125.2C606.5 130.8 622.3 138.3 631.8 146.5C641.4 154.8 644.3 167 652.2 174.5C660.1 182 672 183.9 679.1 191.5C686.3 199.1 690.9 209.6 695.1 220.2C699.2 230.8 702.5 249.4 704 255.2" stroke="#666" stroke-width="0.8" opacity="0.60"/>
<path d="M333.4 199.6C335.9 197.1 341.8 191 348.9 184.6C356.1 178.1 366.1 168.1 376.2 160.7C386.4 153.3 398.7 146.8 410.1 140.2C421.4 133.6 432.8 126.5 444.2 121.2C455.6 116 472.8 110.8 478.6 108.7" stroke="#4a4a4a" stroke-width="1.1" opacity="0.71"/>
<path d="M325.4 219.9C326.4 216.3 327.7 204.6 331.4 198.4C335.1 192.2 340.5 189 347.8 182.8C355.1 176.7 365.3 168.6 375.4 161.4C385.5 154.2 397.1 146.8 408.5 139.6C419.8 132.3 431.9 123.4 443.5 118C455.1 112.5 468.1 110 478.1 107C488.1 104 495.1 100.1 503.5 99.8C511.9 99.6 524.5 104.8 528.7 105.8" stroke="#4a4a4a" stroke-width="0.9" opacity="0.58"/>
<path d="M324.3 219.1C325.8 215.7 329.1 205 333.1 199.2C337 193.4 340.8 190.7 348 184.3C355.2 177.9 366 168.4 376.3 160.8C386.5 153.2 398.3 145.5 409.5 138.7C420.7 131.9 431.9 125.2 443.2 119.9C454.6 114.6 467.3 109.9 477.6 106.8C487.9 103.8 500.4 102.4 504.9 101.6" stroke="#4a4a4a" stroke-width="0.8" opacity="0.71"/>
<path d="M329.9 197.6C332.5 195.1 338.1 189 345.1 182.6C352.2 176.2 361.9 166.6 372.2 159.1C382.5 151.6 395.5 144.6 407.1 137.5C418.7 130.4 430.4 122.1 441.9 116.5C453.3 110.9 465.5 107.2 475.8 103.9C486 100.6 494.3 96.9 503.3 96.7C512.2 96.5 525.1 101.7 529.5 102.7" stroke="#4a4a4a" stroke-width="1.1" opacity="0.53"/>
<path d="M324.8 219.2C326.1 215.7 328.7 203.9 332.6 198.1C336.6 192.2 341.5 190.3 348.7 184.2C355.8 178.1 365.4 169 375.5 161.5C385.5 154 397.4 146.5 408.9 139.4C420.3 132.3 432.7 123.9 444.2 118.9C455.6 113.8 471.9 110.7 477.5 109" stroke="#4a4a4a" stroke-width="1.1" opacity="0.64"/>
<path d="M333.2 243.8C332.3 239.7 327.3 226.2 327.8 219C328.4 211.7 332.4 205.9 336.4 200.1C340.4 194.3 344.7 190.3 351.6 184.1C358.6 177.9 368.1 169.9 378.1 162.9C388.1 155.9 400.4 148.9 411.7 142.2C423.1 135.4 435.3 127.7 446.3 122.5C457.3 117.3 468 114 477.7 111.1C487.4 108.3 496.4 105.5 504.8 105.3C513.1 105.1 523.8 109.1 527.6 109.9" stroke="#4a4a4a" stroke-width="0.9" opacity="0.60"/>
<path d="M329.7 245C328.7 240.7 323.4 227.1 323.9 219.4C324.5 211.7 329.1 204.8 333 199C336.9 193.2 340.3 190.7 347.4 184.4C354.5 178 365.1 168.5 375.6 160.9C386.1 153.3 398.9 145.4 410.2 138.6C421.4 131.8 431.9 125.3 443.1 120C454.2 114.7 466.9 109.8 476.9 106.8C487 103.7 494.6 101.9 503.4 101.8C512.1 101.7 525 105.4 529.4 106.1" stroke="#4a4a4a" stroke-width="0.9" opacity="0.77"/>
<path d="M560.3 118.1C566.2 119.9 584.1 123.5 595.5 129.3C606.9 135.1 619.6 144.8 628.6 153C637.6 161.2 641.8 170.9 649.3 178.3C656.9 185.8 667.1 190.3 674 197.6C680.8 205 687.8 218.3 690.6 222.5" stroke="#4a4a4a" stroke-width="1.1" opacity="0.60"/>
<path d="M505.9 99.2C510.2 100.3 522.5 102.7 531.6 105.5C540.7 108.3 550 112 560.4 116C570.8 120.1 582.5 123.8 593.9 129.8C605.4 135.7 619.7 143.8 629 151.8C638.3 159.9 642.4 170.7 649.8 178.1C657.3 185.5 666.7 188.8 673.5 196.1C680.3 203.4 686.2 212.1 690.7 222.1C695.2 232 698.9 250.2 700.5 255.9" stroke="#4a4a4a" stroke-width="0.8" opacity="0.50"/>
<path d="M531.3 102C536.3 103.8 550.5 109.1 561 113.1C571.6 117.2 583.1 120.3 594.7 126.2C606.3 132.2 621.2 140.7 630.6 148.9C640.1 157.1 643.7 168 651.3 175.3C659 182.7 669.4 185.5 676.6 193.2C683.8 200.8 691.5 216.4 694.5 221.1" stroke="#4a4a4a" stroke-width="0.9" opacity="0.72"/>
<path d="M531.4 107C536.3 109 550.1 114.8 560.8 118.8C571.5 122.8 584.3 125 595.5 131C606.6 137 619.2 146.8 627.9 154.8C636.5 162.8 639.8 172 647.1 179.1C654.4 186.2 667.6 194.4 671.6 197.4" stroke="#4a4a4a" stroke-width="1" opacity="0.47"/>
<path d="M559.7 115.1C565.6 117.2 583.3 121.7 594.8 127.7C606.4 133.6 619.9 142.7 629 150.9C638.1 159.2 641.8 169.8 649.5 177.2C657.1 184.5 668 187.4 675 194.9C682.1 202.4 689.1 217.8 691.9 222.4" stroke="#4a4a4a" stroke-width="0.9" opacity="0.49"/>
<path d="M612 97C628 112 640 135 646 158" stroke="#777" stroke-width="0.7" opacity="0.75"/>
<path d="M651 126C660 140 664 158 661 176" stroke="#777" stroke-width="0.7" opacity="0.75"/>
<path d="M690 174C696 184 697 194 694 202" stroke="#777" stroke-width="0.7" opacity="0.75"/>
<path d="M704 177C706 187 704 196 700 204" stroke="#777" stroke-width="0.7" opacity="0.75"/>
<path d="M706 218C716 224 722 234 724 246" stroke="#777" stroke-width="0.7" opacity="0.75"/>
<path d="M712 250C718 262 720 276 717 290" stroke="#777" stroke-width="0.7" opacity="0.75"/>
<path d="M330 196C318 206 314 222 316 240" stroke="#777" stroke-width="0.7" opacity="0.75"/>
<path d="M420 118C440 104 462 96 486 92" stroke="#777" stroke-width="0.7" opacity="0.75"/>
<path d="M318 232C312 244 314 258 322 268" stroke="#777" stroke-width="0.7" opacity="0.75"/>
<g filter="url(#bl4)" stroke="none">
<path d="M396 262C404 262 404 300 398 345L390 345C388 300 390 270 396 262Z" fill="#bdbdbd" opacity=".5"/>
<path d="M479 388C488 388 495 400 497 420C498 445 494 468 490 484L483 482C487 462 488 430 484 410C482 400 479 394 475 392Z" fill="#858585" opacity=".62"/>
<path d="M526 392C523 420 527 450 537 478L545 474C537 450 533 420 533 396Z" fill="#bbb" opacity=".4"/>
<path d="M530 380C527 392 529 404 534 412L550 404C546 396 548 388 552 380Z" fill="#aaa" opacity=".5"/>
<path d="M448 421C456 424 466 423 474 419L473 425C465 429 455 429 448 426Z" fill="#aaa" opacity=".45"/>
<path d="M560 414C578 420 600 416 616 406L618 411C602 422 576 426 560 419Z" fill="#bbb" opacity=".35"/>
<path d="M540 380C560 372 600 366 636 372L640 380C610 376 570 380 546 390Z" fill="#c4c4c4" opacity=".45"/>
<path d="M400 388C420 390 450 392 478 392L476 398C450 398 420 396 402 394Z" fill="#c4c4c4" opacity=".45"/>
<path d="M496 644L512 647L542 645L569 636L598 612L625 579L646 553L655 539L657 556L640 590L610 628L580 652L556 666L530 666L508 657Z" fill="#707070" opacity=".4"/>
<path d="M530 656L578 658L614 636L640 600L636 630L610 664L576 682L548 678Z" fill="#999" opacity=".22"/>
<path d="M466 553C480 546 492 539 500 537.500C506 538 510 541 516 541C522 541 526 537 531 536.500C545 540 562 547 579 551C560 555 540 556 520 555.500C500 556 480 555 466 553Z" fill="#929292" opacity=".7"/>
<path d="M470 556C490 558 550 558 574 553C566 566 546 578 522 580C500 580 482 570 470 556Z" fill="#b4b4b4" opacity=".6"/>
<path d="M484 573C500 587 540 589 562 569L566 575C545 597 500 595 480 579Z" fill="#a8a8a8" opacity=".5"/>
<path d="M388 400C394 440 398 480 420 536L440 572L432 574C408 540 390 480 386 430Z" fill="#c0c0c0" opacity=".4"/>
<path d="M664 440C664 490 650 540 620 580L596 606L610 608C650 574 668 520 670 450Z" fill="#b8b8b8" opacity=".45"/>
<path d="M692 384C704 376 710 380 708 396C704 420 698 440 690 452C682 452 680 440 686 426C680 414 682 398 692 384Z" fill="#a8a8a8" opacity=".55"/>
<path d="M486 494C496 504 506 510 513 510C522 510 534 504 544 494L540 504C530 510 520 514 512 514C504 514 494 508 488 502Z" fill="#aaa" opacity=".45"/>
</g>
<ellipse cx="522" cy="566" rx="24" ry="6" fill="#fff" opacity=".75" filter="url(#bl2)"/>
<path d="M386.5 381C386.3 385.8 385.6 400.3 385.5 410C385.4 419.7 385.2 430.7 386 439C386.8 447.3 388.8 454.8 390 460C391.2 465.2 391.2 463.3 393 470C394.8 476.7 396.4 488.3 400.6 500C404.8 511.7 412 526.9 418.4 540C424.8 553.1 430.6 565.6 439 578.4C447.4 591.2 460.1 606.9 468.5 616.7C476.9 626.5 481.8 632.7 489.2 637.4C496.6 642.1 508.9 643.7 512.8 645" stroke="#484848" stroke-width="1.7" opacity="0.95"/>
<path d="M389 390C389 398.3 387.7 424.2 389 440C390.3 455.8 392.5 469.7 397 485C401.5 500.3 412.8 524.2 416 532" stroke="#777" stroke-width="0.8" opacity="0.60"/>
<path d="M512.8 645C517.7 644.7 532.9 645 542.3 643.3C551.6 641.5 559.5 639.9 568.9 634.5C578.2 629.1 589 620.1 598.4 610.8C607.8 601.4 617.1 588.2 625 578.4C632.9 568.6 640.6 558.9 645.6 551.8C650.6 544.7 653.4 538.6 655 536" stroke="#555" stroke-width="1.3" opacity="0.90"/>
<path d="M675 388C674 393.3 670.4 408.4 669 420C667.6 431.6 667.3 444.2 666.5 457.5C665.7 470.8 665.9 486.9 664 500C662.1 513.1 656.5 530 655 536" stroke="#5a5a5a" stroke-width="1.2" opacity="0.85"/>
<path d="M677 392C676 398.3 672.3 417 671 430C669.7 443 669.8 457.5 669 470C668.2 482.5 667.8 493.7 666 505C664.2 516.3 659.3 532.5 658 538" stroke="#888" stroke-width="0.8" opacity="0.60"/>
<path d="M486 631.1L486.1 636.1" stroke="#484848" stroke-width="0.9" opacity="0.55"/>
<path d="M488.4 632L488.4 637.1" stroke="#484848" stroke-width="0.9" opacity="0.80"/>
<path d="M490.8 631.2L490.8 639.3" stroke="#484848" stroke-width="0.9" opacity="0.82"/>
<path d="M493 633.4L493.1 639.3" stroke="#484848" stroke-width="0.9" opacity="0.66"/>
<path d="M495.4 632.7L495.6 641.5" stroke="#484848" stroke-width="0.9" opacity="0.82"/>
<path d="M497 634.7L497.9 641.7" stroke="#484848" stroke-width="0.9" opacity="0.57"/>
<path d="M499.9 634.7L500.3 643.3" stroke="#484848" stroke-width="0.9" opacity="0.63"/>
<path d="M502.3 636.9L502.5 643.4" stroke="#484848" stroke-width="0.9" opacity="0.75"/>
<path d="M504.6 636.7L505 645.2" stroke="#484848" stroke-width="0.9" opacity="0.84"/>
<path d="M506.3 638.6L507.3 645.4" stroke="#484848" stroke-width="0.9" opacity="0.75"/>
<path d="M509 639.5L509.6 646.4" stroke="#484848" stroke-width="0.9" opacity="0.78"/>
<path d="M511.3 639.1L512.1 648.4" stroke="#484848" stroke-width="0.9" opacity="0.55"/>
<path d="M513 640.2L514.5 648.3" stroke="#484848" stroke-width="0.9" opacity="0.64"/>
<path d="M516.3 640.6L517 647.8" stroke="#484848" stroke-width="0.9" opacity="0.85"/>
<path d="M518.6 640.2L519.6 647.8" stroke="#484848" stroke-width="0.9" opacity="0.58"/>
<path d="M520.6 639.2L522.3 648.2" stroke="#484848" stroke-width="0.9" opacity="0.71"/>
<path d="M523.8 639.2L524.9 648" stroke="#484848" stroke-width="0.9" opacity="0.68"/>
<path d="M526.3 638.7L527.5 648.1" stroke="#484848" stroke-width="0.9" opacity="0.52"/>
<path d="M528.1 638.9L530.1 647.7" stroke="#484848" stroke-width="0.9" opacity="0.59"/>
<path d="M530.8 638.5L532.7 647.7" stroke="#484848" stroke-width="0.9" opacity="0.68"/>
<path d="M533.6 638.7L535.3 647.4" stroke="#484848" stroke-width="0.9" opacity="0.61"/>
<path d="M536.9 640.3L537.6 646" stroke="#484848" stroke-width="0.9" opacity="0.69"/>
<path d="M539.6 640.3L540.2 645.7" stroke="#484848" stroke-width="0.9" opacity="0.59"/>
<path d="M541.4 638.1L543.1 647" stroke="#484848" stroke-width="0.9" opacity="0.66"/>
<path d="M543.4 637.8L545.3 645.9" stroke="#484848" stroke-width="0.9" opacity="0.75"/>
<path d="M546.3 638.5L547.4 644.1" stroke="#484848" stroke-width="0.9" opacity="0.71"/>
<path d="M548.7 637.1L549.9 643.8" stroke="#484848" stroke-width="0.9" opacity="0.75"/>
<path d="M551.1 637L552.1 642.5" stroke="#484848" stroke-width="0.9" opacity="0.61"/>
<path d="M553.1 634.4L554.7 643.1" stroke="#484848" stroke-width="0.9" opacity="0.55"/>
<path d="M554.8 635L556.8 641.4" stroke="#484848" stroke-width="0.9" opacity="0.79"/>
<path d="M557 633.5L559.3 641.1" stroke="#484848" stroke-width="0.9" opacity="0.82"/>
<path d="M559.6 633.6L561.5 639.8" stroke="#484848" stroke-width="0.9" opacity="0.84"/>
<path d="M561.4 631.5L564.1 639.9" stroke="#484848" stroke-width="0.9" opacity="0.82"/>
<path d="M564.3 630.3L566.5 639.5" stroke="#484848" stroke-width="0.9" opacity="0.68"/>
<path d="M566.2 630.6L568.6 638" stroke="#484848" stroke-width="0.9" opacity="0.73"/>
<path d="M568.9 628.1L571.3 637.3" stroke="#484848" stroke-width="0.9" opacity="0.59"/>
<path d="M571.7 626.9L573.7 634.6" stroke="#484848" stroke-width="0.9" opacity="0.57"/>
<path d="M573.3 624.1L576.5 633.1" stroke="#484848" stroke-width="0.9" opacity="0.54"/>
<path d="M576.8 623.8L578.7 629.8" stroke="#484848" stroke-width="0.9" opacity="0.71"/>
<path d="M579.1 619.9L581.7 629" stroke="#484848" stroke-width="0.9" opacity="0.78"/>
<path d="M581.7 618.7L584.1 626.4" stroke="#484848" stroke-width="0.9" opacity="0.52"/>
<path d="M584.1 616.5L586.7 624.4" stroke="#484848" stroke-width="0.9" opacity="0.73"/>
<path d="M586.2 614.9L589.2 622" stroke="#484848" stroke-width="0.9" opacity="0.70"/>
<path d="M588.5 612.1L591.9 620.5" stroke="#484848" stroke-width="0.9" opacity="0.72"/>
<path d="M591.2 610L594.5 618.4" stroke="#484848" stroke-width="0.9" opacity="0.67"/>
<path d="M594.6 608.8L596.9 615.8" stroke="#484848" stroke-width="0.9" opacity="0.66"/>
<path d="M596.4 606L599.7 614.3" stroke="#484848" stroke-width="0.9" opacity="0.85"/>
<path d="M598.8 603.4L602 611.3" stroke="#484848" stroke-width="0.9" opacity="0.77"/>
<path d="M601.3 600.5L604.3 608.5" stroke="#484848" stroke-width="0.9" opacity="0.75"/>
<path d="M604 597.8L606.6 605.6" stroke="#484848" stroke-width="0.9" opacity="0.80"/>
<path d="M606.2 595.4L608.9 602.5" stroke="#484848" stroke-width="0.9" opacity="0.61"/>
<path d="M608.7 593.4L610.9 599.1" stroke="#484848" stroke-width="0.9" opacity="0.58"/>
<path d="M609.9 589.3L613.7 597.2" stroke="#484848" stroke-width="0.9" opacity="0.63"/>
<path d="M613 587L615.8 594" stroke="#484848" stroke-width="0.9" opacity="0.62"/>
<path d="M615.6 585L617.9 590.6" stroke="#484848" stroke-width="0.9" opacity="0.80"/>
<path d="M617 580.4L620.8 589" stroke="#484848" stroke-width="0.9" opacity="0.60"/>
<path d="M620.1 578.6L622.8 585.5" stroke="#484848" stroke-width="0.9" opacity="0.69"/>
<path d="M622.5 577.2L624.7 581.7" stroke="#484848" stroke-width="0.9" opacity="0.68"/>
<path d="M625.1 574.3L627 579.2" stroke="#484848" stroke-width="0.9" opacity="0.65"/>
<path d="M625.7 570.6L629.4 577.4" stroke="#484848" stroke-width="0.9" opacity="0.63"/>
<path d="M628.8 569.3L631 574" stroke="#484848" stroke-width="0.9" opacity="0.79"/>
<path d="M630.3 566.9L632.9 571.3" stroke="#484848" stroke-width="0.9" opacity="0.56"/>
<path d="M632.7 563.6L635.2 569.2" stroke="#484848" stroke-width="0.9" opacity="0.80"/>
<path d="M633.5 559.5L637.8 567.8" stroke="#484848" stroke-width="0.9" opacity="0.56"/>
<path d="M635.7 557.1L639.8 565.1" stroke="#484848" stroke-width="0.9" opacity="0.69"/>
<path d="M638 556L641.2 561.5" stroke="#484848" stroke-width="0.9" opacity="0.66"/>
<path d="M639.7 553.1L643.4 559.2" stroke="#484848" stroke-width="0.9" opacity="0.61"/>
<path d="M642.3 551.3L645.1 556.1" stroke="#484848" stroke-width="0.9" opacity="0.58"/>
<path d="M644.4 548.2L647.4 553.9" stroke="#484848" stroke-width="0.9" opacity="0.69"/>
<path d="M645.7 545.1L649.6 551.8" stroke="#484848" stroke-width="0.9" opacity="0.76"/>
<path d="M517.4 647.9L508.2 664.2" stroke="#6a6a6a" stroke-width="0.7" opacity="0.39"/>
<path d="M624.9 587.8L616.3 602.7" stroke="#6a6a6a" stroke-width="0.7" opacity="0.25"/>
<path d="M549 645.8L536.1 670.7" stroke="#6a6a6a" stroke-width="0.7" opacity="0.23"/>
<path d="M529.7 648.8L518.3 670.2" stroke="#6a6a6a" stroke-width="0.7" opacity="0.48"/>
<path d="M542.4 647.5L536.1 657.2" stroke="#6a6a6a" stroke-width="0.7" opacity="0.28"/>
<path d="M522.4 648.2L515 660.2" stroke="#6a6a6a" stroke-width="0.7" opacity="0.48"/>
<path d="M567.1 639.5L554.4 663.9" stroke="#6a6a6a" stroke-width="0.7" opacity="0.29"/>
<path d="M602.4 612.7L595.6 623.5" stroke="#6a6a6a" stroke-width="0.7" opacity="0.22"/>
<path d="M604.2 612.4L594.2 630.5" stroke="#6a6a6a" stroke-width="0.7" opacity="0.31"/>
<path d="M582.3 631.7L570.2 654.6" stroke="#6a6a6a" stroke-width="0.7" opacity="0.24"/>
<path d="M514.1 647.7L504.6 664.7" stroke="#6a6a6a" stroke-width="0.7" opacity="0.41"/>
<path d="M594.6 620L584.8 637.5" stroke="#6a6a6a" stroke-width="0.7" opacity="0.48"/>
<path d="M543.3 646.9L530.6 671.3" stroke="#6a6a6a" stroke-width="0.7" opacity="0.47"/>
<path d="M579.4 632.9L571.3 646.6" stroke="#6a6a6a" stroke-width="0.7" opacity="0.40"/>
<path d="M637 572.3L629.9 583.8" stroke="#6a6a6a" stroke-width="0.7" opacity="0.45"/>
<path d="M502.1 647L496.2 655.5" stroke="#6a6a6a" stroke-width="0.7" opacity="0.42"/>
<path d="M608.5 606.4L596.2 629.8" stroke="#6a6a6a" stroke-width="0.7" opacity="0.46"/>
<path d="M526.8 648.5L516.3 667.7" stroke="#6a6a6a" stroke-width="0.7" opacity="0.43"/>
<path d="M586.9 629.9L571.7 659.9" stroke="#6a6a6a" stroke-width="0.7" opacity="0.20"/>
<path d="M619.4 593.4L612.5 604.4" stroke="#6a6a6a" stroke-width="0.7" opacity="0.37"/>
<path d="M611 602.3L599.1 624.7" stroke="#6a6a6a" stroke-width="0.7" opacity="0.33"/>
<path d="M520.5 648.3L511.6 663.8" stroke="#6a6a6a" stroke-width="0.7" opacity="0.38"/>
<path d="M597.5 619.4L588.6 635" stroke="#6a6a6a" stroke-width="0.7" opacity="0.41"/>
<path d="M639 569.4L630.8 583.3" stroke="#6a6a6a" stroke-width="0.7" opacity="0.37"/>
<path d="M505.7 647.1L498.7 658.2" stroke="#6a6a6a" stroke-width="0.7" opacity="0.32"/>
<path d="M584.3 630.6L577.4 641.7" stroke="#6a6a6a" stroke-width="0.7" opacity="0.47"/>
<path d="M570.3 638.5L562.6 651.3" stroke="#6a6a6a" stroke-width="0.7" opacity="0.27"/>
<path d="M595.9 620.3L584.4 641.8" stroke="#6a6a6a" stroke-width="0.7" opacity="0.36"/>
<path d="M621.6 591.9L610.6 612.4" stroke="#6a6a6a" stroke-width="0.7" opacity="0.36"/>
<path d="M581.9 632.8L570.6 653.9" stroke="#6a6a6a" stroke-width="0.7" opacity="0.50"/>
<path d="M535.1 648.6L526.5 663.5" stroke="#6a6a6a" stroke-width="0.7" opacity="0.35"/>
<path d="M605.3 612.3L595.2 630.5" stroke="#6a6a6a" stroke-width="0.7" opacity="0.40"/>
<path d="M533.2 648.8L525.9 660.6" stroke="#6a6a6a" stroke-width="0.7" opacity="0.30"/>
<path d="M559.2 643.9L550.2 659.7" stroke="#6a6a6a" stroke-width="0.7" opacity="0.33"/>
<path d="M631.3 578.5L622.1 594.8" stroke="#6a6a6a" stroke-width="0.7" opacity="0.42"/>
<path d="M610.4 605.5L600.6 623.1" stroke="#6a6a6a" stroke-width="0.7" opacity="0.25"/>
<path d="M568.2 639.7L553.6 668.4" stroke="#6a6a6a" stroke-width="0.7" opacity="0.23"/>
<path d="M636.2 573.5L629.6 583.8" stroke="#6a6a6a" stroke-width="0.7" opacity="0.35"/>
<path d="M508.9 647.3L500.6 661.4" stroke="#6a6a6a" stroke-width="0.7" opacity="0.46"/>
<path d="M537.8 648.2L529.5 662.4" stroke="#6a6a6a" stroke-width="0.7" opacity="0.38"/>
<path d="M552.7 645.8L541.9 665.7" stroke="#6a6a6a" stroke-width="0.7" opacity="0.32"/>
<path d="M610.2 606.8L597.8 630.5" stroke="#6a6a6a" stroke-width="0.7" opacity="0.30"/>
<path d="M602.9 611.5L590.9 634.2" stroke="#6a6a6a" stroke-width="0.7" opacity="0.44"/>
<path d="M507.9 647.2L499.1 662.5" stroke="#6a6a6a" stroke-width="0.7" opacity="0.34"/>
<path d="M639.5 567.1L633.2 576.6" stroke="#6a6a6a" stroke-width="0.7" opacity="0.35"/>
<path d="M503 647L497.2 655.3" stroke="#6a6a6a" stroke-width="0.7" opacity="0.28"/>
<path d="M549.7 645.7L539.2 664.8" stroke="#6a6a6a" stroke-width="0.7" opacity="0.36"/>
<path d="M599.8 614.5L588.8 634.8" stroke="#6a6a6a" stroke-width="0.7" opacity="0.37"/>
<path d="M603.6 612.6L594.7 628.2" stroke="#6a6a6a" stroke-width="0.7" opacity="0.47"/>
<path d="M607.6 606L599.3 620" stroke="#6a6a6a" stroke-width="0.7" opacity="0.29"/>
<path d="M503.7 647.2L498.6 654" stroke="#6a6a6a" stroke-width="0.7" opacity="0.37"/>
<path d="M579.5 633.7L568.3 654.4" stroke="#6a6a6a" stroke-width="0.7" opacity="0.30"/>
<path d="M577.9 633.4L568.7 649.7" stroke="#6a6a6a" stroke-width="0.7" opacity="0.49"/>
<path d="M608.9 608.1L597.4 629.5" stroke="#6a6a6a" stroke-width="0.7" opacity="0.33"/>
<path d="M538.9 648.1L531.9 659.4" stroke="#6a6a6a" stroke-width="0.7" opacity="0.44"/>
<path d="M635.3 575.6L628.5 586.3" stroke="#6a6a6a" stroke-width="0.7" opacity="0.34"/>
<path d="M612.9 602.8L605.5 615" stroke="#6a6a6a" stroke-width="0.7" opacity="0.37"/>
<path d="M619.6 596.6L613.5 605.8" stroke="#6a6a6a" stroke-width="0.7" opacity="0.36"/>
<path d="M624.2 589.7L618.4 598.1" stroke="#6a6a6a" stroke-width="0.7" opacity="0.45"/>
<path d="M554.5 645.4L544.9 662.5" stroke="#6a6a6a" stroke-width="0.7" opacity="0.29"/>
<path d="M693 365C694.3 364.4 698.3 362 701 361.5C703.7 361 706.6 359.9 709 362C711.4 364.1 714.6 368.3 715.5 374C716.4 379.7 715.2 388.3 714.5 396C713.8 403.7 712.6 412.7 711 420C709.4 427.3 707.3 433.8 705 440C702.7 446.2 699.7 452.8 697 457.5C694.3 462.2 691.8 465.6 689 468C686.2 470.4 683.2 471.6 680 472C676.8 472.4 671.7 470.8 670 470.5" stroke="#555" stroke-width="1.2" opacity="0.90"/>
<path d="M699 372C700.3 372 705.3 369 707 372C708.7 375 709.3 382.3 709 390C708.7 397.7 706.8 409.7 705 418C703.2 426.3 700.5 433.7 698 440C695.5 446.3 691.3 453.3 690 456" stroke="#888" stroke-width="0.8" opacity="0.70"/>
<path d="M690 392C688.8 394 683.7 400 683 404C682.3 408 684.5 412.7 686 416C687.5 419.3 691.7 420.3 692 424C692.3 427.7 689.5 433.7 688 438C686.5 442.3 683.8 448 683 450" stroke="#555" stroke-width="1.3" opacity="0.85"/>
<path d="M694 388C693 390 688.7 396 688 400C687.3 404 688.5 408.7 690 412C691.5 415.3 696.3 416 697 420C697.7 424 694.5 433.3 694 436" stroke="#777" stroke-width="2.5" opacity="0.45"/>
<path d="M686 416C687.3 415.3 692 414 694 412C696 410 697.3 405.3 698 404" stroke="#888" stroke-width="0.8" opacity="0.70"/>
<path d="M384 392C383.3 392.2 380.5 391.7 380 393C379.5 394.3 380.2 397.5 381 400C381.8 402.5 384.3 406.7 385 408" stroke="#555" stroke-width="1.1" opacity="0.90"/>
<path d="M391 385.3C390.2 384.2 393.6 379.4 395 377C396.4 374.6 397.7 372.8 399.5 371C401.3 369.2 402.8 367.1 406 366.5C409.2 365.9 413.4 367 418.6 367.5C423.8 368 430.6 368.9 437 369.5C443.4 370.1 451.4 370.6 456.8 371C462.2 371.4 466.1 370.8 469.3 372C472.5 373.2 474.2 375.6 476 378C477.8 380.4 480.1 384.5 479.8 386.2C479.5 387.9 477.8 388 474 388C470.2 388 462.9 387 456.8 386.2C450.8 385.4 444.1 384 437.7 383.4C431.3 382.8 425 382.4 418.6 382.4C412.2 382.4 404.1 382.9 399.5 383.4C394.9 383.9 391.8 386.4 391 385.3Z" fill="#505050" opacity=".8" filter="url(#bl1)"/>
<path d="M529 365C531.1 362.1 536.6 365.4 542.6 364.3C548.6 363.2 557.6 360.8 565.1 358.6C572.6 356.4 580.9 353 587.7 351.3C594.5 349.6 601.1 348.7 605.8 348.5C610.5 348.3 612.2 348.4 616 350.2C619.8 352 624.4 356.4 628.3 359.2C632.2 362 638.9 365.3 639.6 367C640.4 368.7 635.8 369.5 632.8 369.3C629.8 369.1 625.7 367.1 621.6 366C617.5 364.9 613.6 362.9 608 363C602.4 363.1 594.9 364.9 587.7 366.5C580.6 368.1 572.6 370.7 565.1 372.7C557.6 374.7 548.5 376.9 542.6 378.4C536.8 379.9 532.3 383.7 530 381.5C527.7 379.3 526.9 367.9 529 365Z" fill="#505050" opacity=".8" filter="url(#bl1)"/>
<path d="M400.7 378.7L414.3 374.7" stroke="#2c2c2c" stroke-width="1.1" opacity="0.46"/>
<path d="M418.9 376.1L436.5 376.3" stroke="#2c2c2c" stroke-width="1.2" opacity="0.72"/>
<path d="M471.6 376.8L478 380.6" stroke="#2c2c2c" stroke-width="1" opacity="0.43"/>
<path d="M404.3 370.8L413.5 370.8" stroke="#2c2c2c" stroke-width="1" opacity="0.82"/>
<path d="M437.6 372.5L454.8 374.8" stroke="#2c2c2c" stroke-width="0.8" opacity="0.66"/>
<path d="M397 378.4L408.6 372.3" stroke="#2c2c2c" stroke-width="1.3" opacity="0.76"/>
<path d="M421.5 369.8L436 372.3" stroke="#2c2c2c" stroke-width="1" opacity="0.64"/>
<path d="M442.6 371L461.9 374.4" stroke="#2c2c2c" stroke-width="1" opacity="0.43"/>
<path d="M403.1 379.6L419.2 376.4" stroke="#2c2c2c" stroke-width="0.8" opacity="0.70"/>
<path d="M416 381.5L430.4 379.1" stroke="#2c2c2c" stroke-width="0.9" opacity="0.79"/>
<path d="M423.9 381.6L437.5 379.4" stroke="#2c2c2c" stroke-width="0.8" opacity="0.67"/>
<path d="M465.5 375.3L474.9 379" stroke="#2c2c2c" stroke-width="1.1" opacity="0.77"/>
<path d="M402.9 374.5L418.5 373.2" stroke="#2c2c2c" stroke-width="1.2" opacity="0.63"/>
<path d="M423.7 375.8L444.3 376.6" stroke="#2c2c2c" stroke-width="0.9" opacity="0.50"/>
<path d="M460.3 376.4L470 377.5" stroke="#2c2c2c" stroke-width="0.9" opacity="0.48"/>
<path d="M420.7 381.9L441.6 380.2" stroke="#2c2c2c" stroke-width="1" opacity="0.58"/>
<path d="M431.8 376.3L446.7 376.7" stroke="#2c2c2c" stroke-width="1.3" opacity="0.82"/>
<path d="M397.6 380.9L404.9 374.9" stroke="#2c2c2c" stroke-width="1" opacity="0.49"/>
<path d="M438.8 372.1L462.8 375.4" stroke="#2c2c2c" stroke-width="0.9" opacity="0.81"/>
<path d="M469.1 384.6L478 385.8" stroke="#2c2c2c" stroke-width="1.2" opacity="0.43"/>
<path d="M440.9 369.6L462.1 373.7" stroke="#2c2c2c" stroke-width="1.3" opacity="0.41"/>
<path d="M470.5 384.7L478 385.7" stroke="#2c2c2c" stroke-width="1.2" opacity="0.56"/>
<path d="M460.7 371.8L473.4 376.4" stroke="#2c2c2c" stroke-width="1.1" opacity="0.60"/>
<path d="M432.6 370.9L456.7 374.4" stroke="#2c2c2c" stroke-width="1.2" opacity="0.61"/>
<path d="M431 379.9L455.1 379.7" stroke="#2c2c2c" stroke-width="1" opacity="0.53"/>
<path d="M465 373.4L476.8 378.8" stroke="#2c2c2c" stroke-width="0.8" opacity="0.60"/>
<path d="M456 378.8L472 380.2" stroke="#2c2c2c" stroke-width="1.2" opacity="0.62"/>
<path d="M460.6 372.9L474.7 377.7" stroke="#2c2c2c" stroke-width="0.9" opacity="0.58"/>
<path d="M463.9 379.7L475.4 381.9" stroke="#2c2c2c" stroke-width="1.3" opacity="0.58"/>
<path d="M402.2 378.4L414.8 375" stroke="#2c2c2c" stroke-width="1.1" opacity="0.63"/>
<path d="M444.5 384.2L463.1 382.4" stroke="#2c2c2c" stroke-width="0.9" opacity="0.64"/>
<path d="M436.9 378.5L451 378.1" stroke="#2c2c2c" stroke-width="0.9" opacity="0.50"/>
<path d="M399.8 382.8L408.1 376.3" stroke="#2c2c2c" stroke-width="1.2" opacity="0.56"/>
<path d="M440.8 376.9L463.1 378.2" stroke="#2c2c2c" stroke-width="0.9" opacity="0.54"/>
<path d="M392.3 382.7L402.4 373.9" stroke="#2c2c2c" stroke-width="0.9" opacity="0.60"/>
<path d="M468.7 377L475 379.8" stroke="#2c2c2c" stroke-width="1" opacity="0.57"/>
<path d="M402.6 381.9L413.2 377" stroke="#2c2c2c" stroke-width="0.8" opacity="0.45"/>
<path d="M428.2 375.4L451.3 376.8" stroke="#2c2c2c" stroke-width="0.8" opacity="0.71"/>
<path d="M393.4 380.4L398.9 374.8" stroke="#2c2c2c" stroke-width="1.2" opacity="0.64"/>
<path d="M435.7 375.2L452.6 376.3" stroke="#2c2c2c" stroke-width="1" opacity="0.69"/>
<path d="M409.1 373.1L430.1 374.4" stroke="#2c2c2c" stroke-width="1" opacity="0.83"/>
<path d="M421.1 380.2L433.9 378.4" stroke="#2c2c2c" stroke-width="0.9" opacity="0.54"/>
<path d="M466.1 381.5L476.4 383.4" stroke="#2c2c2c" stroke-width="1.2" opacity="0.65"/>
<path d="M438.8 380.2L459.2 379.9" stroke="#2c2c2c" stroke-width="1.2" opacity="0.43"/>
<path d="M472 382.9L478 384.1" stroke="#2c2c2c" stroke-width="1.2" opacity="0.47"/>
<path d="M399.1 377.5L406.7 372.9" stroke="#2c2c2c" stroke-width="1.2" opacity="0.62"/>
<path d="M458.7 381.5L473.4 382.4" stroke="#2c2c2c" stroke-width="0.9" opacity="0.52"/>
<path d="M407.9 368.3L423.7 371" stroke="#2c2c2c" stroke-width="1" opacity="0.67"/>
<path d="M440.5 379.1L455.6 378.7" stroke="#2c2c2c" stroke-width="1" opacity="0.70"/>
<path d="M460.2 378.6L470.3 379" stroke="#2c2c2c" stroke-width="1.3" opacity="0.60"/>
<path d="M471.8 376.8L478 380.5" stroke="#2c2c2c" stroke-width="1.1" opacity="0.49"/>
<path d="M433.9 380.8L454.3 380" stroke="#2c2c2c" stroke-width="1.1" opacity="0.49"/>
<path d="M431.2 381.1L447.5 379.7" stroke="#2c2c2c" stroke-width="1.2" opacity="0.45"/>
<path d="M419 368.9L435.4 371.9" stroke="#2c2c2c" stroke-width="1.3" opacity="0.82"/>
<path d="M471.3 378.7L478 381.8" stroke="#2c2c2c" stroke-width="1" opacity="0.45"/>
<path d="M416.4 370.7L431.2 372.7" stroke="#2c2c2c" stroke-width="1" opacity="0.64"/>
<path d="M399.2 381.2L405.6 375.7" stroke="#2c2c2c" stroke-width="1.1" opacity="0.46"/>
<path d="M455.3 381.3L472.5 382" stroke="#2c2c2c" stroke-width="1" opacity="0.83"/>
<path d="M401.4 371.5L411.1 370.2" stroke="#2c2c2c" stroke-width="1" opacity="0.71"/>
<path d="M407.2 375.9L427.9 376" stroke="#2c2c2c" stroke-width="0.8" opacity="0.82"/>
<path d="M397.5 379.7L406.1 373.6" stroke="#bbb" stroke-width="0.8" opacity="0.50"/>
<path d="M462.2 381.6L471.4 381.2" stroke="#bbb" stroke-width="0.8" opacity="0.50"/>
<path d="M414.7 378.8L429.6 377.5" stroke="#bbb" stroke-width="0.8" opacity="0.50"/>
<path d="M462.5 377.9L475.1 380.8" stroke="#bbb" stroke-width="0.8" opacity="0.50"/>
<path d="M429 376.3L454.4 377.6" stroke="#bbb" stroke-width="0.8" opacity="0.50"/>
<path d="M438.9 373.1L460.6 375.8" stroke="#bbb" stroke-width="0.8" opacity="0.50"/>
<path d="M459.1 381.9L474.1 382.9" stroke="#bbb" stroke-width="0.8" opacity="0.50"/>
<path d="M398.4 376L405.1 372.4" stroke="#bbb" stroke-width="0.8" opacity="0.50"/>
<path d="M403 374.2L419.6 373.1" stroke="#bbb" stroke-width="0.8" opacity="0.50"/>
<path d="M419.2 374.4L437.5 375.4" stroke="#bbb" stroke-width="0.8" opacity="0.50"/>
<path d="M399.4 379.2L407.6 374" stroke="#bbb" stroke-width="0.8" opacity="0.50"/>
<path d="M407.2 371.4L427.9 373.3" stroke="#bbb" stroke-width="0.8" opacity="0.50"/>
<path d="M419.6 377.3L437.8 377.1" stroke="#bbb" stroke-width="0.8" opacity="0.50"/>
<path d="M455.6 380.4L465.6 379.7" stroke="#bbb" stroke-width="0.8" opacity="0.50"/>
<path d="M424.1 375.2L442.9 376.1" stroke="#bbb" stroke-width="0.8" opacity="0.50"/>
<path d="M548.5 375.8L564 368.1" stroke="#2c2c2c" stroke-width="1" opacity="0.43"/>
<path d="M624.1 359.8L638.3 366.4" stroke="#2c2c2c" stroke-width="1" opacity="0.52"/>
<path d="M568 366.6L590.9 358.7" stroke="#2c2c2c" stroke-width="1.1" opacity="0.44"/>
<path d="M572.1 357.7L598.6 352.8" stroke="#2c2c2c" stroke-width="1" opacity="0.59"/>
<path d="M603.4 361.7L613.8 358.7" stroke="#2c2c2c" stroke-width="1.3" opacity="0.81"/>
<path d="M555.1 365.6L569.8 361.5" stroke="#2c2c2c" stroke-width="1.1" opacity="0.66"/>
<path d="M593.2 350.6L611.3 350.7" stroke="#2c2c2c" stroke-width="1.2" opacity="0.51"/>
<path d="M610.8 359.3L619.6 358.7" stroke="#2c2c2c" stroke-width="1.3" opacity="0.65"/>
<path d="M625.4 359.4L635.6 364.4" stroke="#2c2c2c" stroke-width="1" opacity="0.57"/>
<path d="M591.4 353.5L609.7 352.2" stroke="#2c2c2c" stroke-width="0.9" opacity="0.62"/>
<path d="M550.1 373.9L569.7 365.6" stroke="#2c2c2c" stroke-width="1.3" opacity="0.61"/>
<path d="M623 364.2L634.1 367.2" stroke="#2c2c2c" stroke-width="1.1" opacity="0.52"/>
<path d="M538.6 376.2L551.7 371" stroke="#2c2c2c" stroke-width="1" opacity="0.50"/>
<path d="M539.4 377.9L555.7 370.9" stroke="#2c2c2c" stroke-width="1.2" opacity="0.81"/>
<path d="M544.5 376.4L564.7 367.8" stroke="#2c2c2c" stroke-width="0.9" opacity="0.62"/>
<path d="M603.1 351.9L614.5 352.9" stroke="#2c2c2c" stroke-width="0.8" opacity="0.58"/>
<path d="M613.1 359.4L622.6 360.3" stroke="#2c2c2c" stroke-width="1.2" opacity="0.53"/>
<path d="M542.4 367.9L564.4 362.6" stroke="#2c2c2c" stroke-width="0.9" opacity="0.69"/>
<path d="M626.2 362.6L637.8 367.1" stroke="#2c2c2c" stroke-width="1.3" opacity="0.83"/>
<path d="M545.3 362.9L559.7 361.2" stroke="#2c2c2c" stroke-width="1.2" opacity="0.56"/>
<path d="M561.6 373.6L577.3 365.3" stroke="#2c2c2c" stroke-width="1" opacity="0.61"/>
<path d="M555.7 364.2L571 360.4" stroke="#2c2c2c" stroke-width="1.2" opacity="0.79"/>
<path d="M543.1 367.1L567.2 361.4" stroke="#2c2c2c" stroke-width="0.9" opacity="0.79"/>
<path d="M548.9 367.2L564.6 362.8" stroke="#2c2c2c" stroke-width="1" opacity="0.48"/>
<path d="M547.4 378L564.1 369.2" stroke="#2c2c2c" stroke-width="1.2" opacity="0.62"/>
<path d="M538 365.3L561.7 361.5" stroke="#2c2c2c" stroke-width="0.9" opacity="0.73"/>
<path d="M542.2 367L557.9 364" stroke="#2c2c2c" stroke-width="1.1" opacity="0.75"/>
<path d="M629.8 363.5L637.5 366.3" stroke="#2c2c2c" stroke-width="1.1" opacity="0.77"/>
<path d="M544.4 371.2L561.9 365.5" stroke="#2c2c2c" stroke-width="1.2" opacity="0.78"/>
<path d="M541 368.7L554 366" stroke="#2c2c2c" stroke-width="1" opacity="0.55"/>
<path d="M556.2 369.6L578.2 361.7" stroke="#2c2c2c" stroke-width="0.8" opacity="0.55"/>
<path d="M570.2 366.1L597.3 357.7" stroke="#2c2c2c" stroke-width="1.2" opacity="0.83"/>
<path d="M557.1 367.7L573.8 361.9" stroke="#2c2c2c" stroke-width="1.1" opacity="0.40"/>
<path d="M545.4 375.3L565.6 367" stroke="#2c2c2c" stroke-width="1.3" opacity="0.43"/>
<path d="M549.8 371.2L564.2 365.5" stroke="#2c2c2c" stroke-width="1.3" opacity="0.44"/>
<path d="M567.7 360.4L597.6 353.8" stroke="#2c2c2c" stroke-width="1.2" opacity="0.48"/>
<path d="M551.9 368.1L571.6 361.9" stroke="#2c2c2c" stroke-width="0.8" opacity="0.45"/>
<path d="M550.1 362.5L572.9 357.8" stroke="#2c2c2c" stroke-width="0.9" opacity="0.73"/>
<path d="M573.9 361.3L596 355.7" stroke="#2c2c2c" stroke-width="0.8" opacity="0.81"/>
<path d="M538.5 371.1L551.1 368.1" stroke="#2c2c2c" stroke-width="1.1" opacity="0.61"/>
<path d="M574.2 364.6L595.5 357.7" stroke="#2c2c2c" stroke-width="0.8" opacity="0.78"/>
<path d="M600.7 348.9L612.2 350.6" stroke="#2c2c2c" stroke-width="1.2" opacity="0.52"/>
<path d="M594.9 357.8L614.4 355.6" stroke="#2c2c2c" stroke-width="1.3" opacity="0.44"/>
<path d="M543.3 365.1L555.5 363.7" stroke="#2c2c2c" stroke-width="1.2" opacity="0.57"/>
<path d="M619.4 355L629.5 360.6" stroke="#2c2c2c" stroke-width="0.9" opacity="0.54"/>
<path d="M610.1 354.3L620.2 356.1" stroke="#2c2c2c" stroke-width="1.1" opacity="0.68"/>
<path d="M533.8 377.2L549.3 371.9" stroke="#2c2c2c" stroke-width="1.1" opacity="0.52"/>
<path d="M562.9 364.1L582 358.5" stroke="#2c2c2c" stroke-width="0.8" opacity="0.61"/>
<path d="M617.5 352.6L629.1 359.4" stroke="#2c2c2c" stroke-width="1.2" opacity="0.54"/>
<path d="M607.8 355.7L619.2 356.6" stroke="#2c2c2c" stroke-width="1.2" opacity="0.59"/>
<path d="M532.9 371.1L545.2 368.9" stroke="#2c2c2c" stroke-width="0.8" opacity="0.83"/>
<path d="M576 359.5L604.1 353.5" stroke="#2c2c2c" stroke-width="0.8" opacity="0.41"/>
<path d="M596.5 355.2L610.6 353.8" stroke="#2c2c2c" stroke-width="0.9" opacity="0.58"/>
<path d="M573.1 361.3L590.4 356.4" stroke="#2c2c2c" stroke-width="1.1" opacity="0.42"/>
<path d="M574.5 363.2L590.4 357.8" stroke="#2c2c2c" stroke-width="0.9" opacity="0.56"/>
<path d="M610 350.2L623.7 355.6" stroke="#2c2c2c" stroke-width="0.9" opacity="0.78"/>
<path d="M632 366.8L639 368.4" stroke="#2c2c2c" stroke-width="1.3" opacity="0.52"/>
<path d="M629.5 362.7L639 366.7" stroke="#2c2c2c" stroke-width="0.9" opacity="0.66"/>
<path d="M571 357.5L599.7 352.3" stroke="#2c2c2c" stroke-width="1.2" opacity="0.75"/>
<path d="M582.8 367.7L605.1 359.5" stroke="#2c2c2c" stroke-width="1" opacity="0.74"/>
<path d="M626.3 364.7L638.5 368.7" stroke="#2c2c2c" stroke-width="1.2" opacity="0.78"/>
<path d="M554.1 362.8L568.1 360.1" stroke="#2c2c2c" stroke-width="1.2" opacity="0.66"/>
<path d="M573.9 360.7L602.8 354.1" stroke="#2c2c2c" stroke-width="1" opacity="0.81"/>
<path d="M617.6 360.8L630.7 365.2" stroke="#2c2c2c" stroke-width="0.9" opacity="0.64"/>
<path d="M558.4 364.2L575.7 359.5" stroke="#2c2c2c" stroke-width="1.1" opacity="0.81"/>
<path d="M563.9 366.5L582.2 360" stroke="#2c2c2c" stroke-width="0.9" opacity="0.56"/>
<path d="M573.9 367.3L596 359.2" stroke="#2c2c2c" stroke-width="0.8" opacity="0.79"/>
<path d="M607.1 349.7L615.5 352.1" stroke="#2c2c2c" stroke-width="0.9" opacity="0.85"/>
<path d="M565.5 373.6L595.3 361.7" stroke="#2c2c2c" stroke-width="1" opacity="0.76"/>
<path d="M553.3 370.3L566.4 364.9" stroke="#2c2c2c" stroke-width="1" opacity="0.70"/>
<path d="M568.1 360.2L595.7 354" stroke="#bbb" stroke-width="0.8" opacity="0.50"/>
<path d="M615.7 356.5L624.4 359.3" stroke="#bbb" stroke-width="0.8" opacity="0.50"/>
<path d="M621.8 360.1L634.2 365.2" stroke="#bbb" stroke-width="0.8" opacity="0.50"/>
<path d="M578.2 359L600 354.3" stroke="#bbb" stroke-width="0.8" opacity="0.50"/>
<path d="M548.9 368.7L567.2 363" stroke="#bbb" stroke-width="0.8" opacity="0.50"/>
<path d="M563.1 365.4L580.3 359.7" stroke="#bbb" stroke-width="0.8" opacity="0.50"/>
<path d="M556.1 373.7L579.6 363.7" stroke="#bbb" stroke-width="0.8" opacity="0.50"/>
<path d="M568.3 368.1L596.1 358.8" stroke="#bbb" stroke-width="0.8" opacity="0.50"/>
<path d="M616.3 354.5L624 357.9" stroke="#bbb" stroke-width="0.8" opacity="0.50"/>
<path d="M576.7 362.8L602.1 356" stroke="#bbb" stroke-width="0.8" opacity="0.50"/>
<path d="M597.5 354.7L612.6 353.8" stroke="#bbb" stroke-width="0.8" opacity="0.50"/>
<path d="M591.8 357.8L605.8 354.6" stroke="#bbb" stroke-width="0.8" opacity="0.50"/>
<path d="M548.9 366.2L561.6 363.1" stroke="#bbb" stroke-width="0.8" opacity="0.50"/>
<path d="M606.7 359.6L620.7 359.7" stroke="#bbb" stroke-width="0.8" opacity="0.50"/>
<path d="M548 365L568.1 360.3" stroke="#bbb" stroke-width="0.8" opacity="0.50"/>
<path d="M608.3 354.3L620.7 356.5" stroke="#bbb" stroke-width="0.8" opacity="0.50"/>
<path d="M559.8 362.4L578.7 357.9" stroke="#bbb" stroke-width="0.8" opacity="0.50"/>
<path d="M528 379.4L527 363" stroke="#444" stroke-width="0.9" opacity="0.78"/>
<path d="M530 381.6L529.4 364.4" stroke="#444" stroke-width="0.9" opacity="0.50"/>
<path d="M531.4 381.1L529.8 365.9" stroke="#444" stroke-width="0.9" opacity="0.52"/>
<path d="M532.7 381.4L531.4 364.2" stroke="#444" stroke-width="0.9" opacity="0.48"/>
<path d="M534.7 380.7L534.1 364.3" stroke="#444" stroke-width="0.9" opacity="0.60"/>
<path d="M535.7 381.2L534.7 366" stroke="#444" stroke-width="0.9" opacity="0.41"/>
<path d="M537.7 379.6L536.3 364.1" stroke="#444" stroke-width="0.9" opacity="0.61"/>
<path d="M538.8 381.6L537.6 365.7" stroke="#444" stroke-width="0.9" opacity="0.45"/>
<path d="M540.7 379.6L539.6 365.5" stroke="#444" stroke-width="0.9" opacity="0.79"/>
<path d="M465 385.6L460 371.7" stroke="#444" stroke-width="0.9" opacity="0.70"/>
<path d="M466.8 384.1L461.8 371.4" stroke="#444" stroke-width="0.9" opacity="0.66"/>
<path d="M468.6 384.4L463.6 371.4" stroke="#444" stroke-width="0.9" opacity="0.59"/>
<path d="M470.4 384.1L465.4 371.4" stroke="#444" stroke-width="0.9" opacity="0.66"/>
<path d="M472.2 385.2L467.2 370.5" stroke="#444" stroke-width="0.9" opacity="0.75"/>
<path d="M474 384.7L469 370.2" stroke="#444" stroke-width="0.9" opacity="0.47"/>
<path d="M475.8 385.8L470.8 371.6" stroke="#444" stroke-width="0.9" opacity="0.69"/>
<path d="M477.6 385.1L472.6 372" stroke="#444" stroke-width="0.9" opacity="0.64"/>
<path d="M479.4 386L474.4 370.6" stroke="#444" stroke-width="0.9" opacity="0.59"/>
<path d="M481.2 384.2L476.2 371.2" stroke="#444" stroke-width="0.9" opacity="0.42"/>
<path d="M624 364L634 369" stroke="#666" stroke-width="0.8" opacity="0.60"/>
<path d="M626 364.8L636.2 370.3" stroke="#666" stroke-width="0.8" opacity="0.60"/>
<path d="M628 365.6L638.4 371.6" stroke="#666" stroke-width="0.8" opacity="0.60"/>
<path d="M630 366.4L640.6 372.9" stroke="#666" stroke-width="0.8" opacity="0.60"/>
<path d="M632 367.2L642.8 374.2" stroke="#666" stroke-width="0.8" opacity="0.60"/>
<path d="M634 368L645 375.5" stroke="#666" stroke-width="0.8" opacity="0.60"/>
<path d="M398 384L391 388" stroke="#777" stroke-width="0.8" opacity="0.55"/>
<path d="M396.8 385.3L389.5 389.8" stroke="#777" stroke-width="0.8" opacity="0.55"/>
<path d="M395.6 386.6L388 391.6" stroke="#777" stroke-width="0.8" opacity="0.55"/>
<path d="M394.4 387.9L386.5 393.4" stroke="#777" stroke-width="0.8" opacity="0.55"/>
<path d="M393.2 389.2L385 395.2" stroke="#777" stroke-width="0.8" opacity="0.55"/>
<clipPath id="eL"><path d="M406.2 408.2C405.3 406.7 410.4 404.9 413 403.5C415.6 402.1 417.7 401 421.5 399.6C425.3 398.2 431.5 396.2 435.8 395.3C440.1 394.4 443.5 394 447.3 394.4C451.1 394.8 455.1 395.9 458.8 397.7C462.5 399.5 466.4 402.8 469.3 405.3C472.2 407.9 477.3 411.1 476 413C474.7 414.9 466.4 415.7 461.6 416.8C456.8 417.9 452.1 419.5 447.3 419.7C442.5 419.9 437.8 419 433 417.8C428.2 416.6 423.1 414.1 418.6 412.5C414.1 410.9 407.1 409.7 406.2 408.2Z"/></clipPath>
<g clip-path="url(#eL)">
<rect x="396.4" y="374" width="100" height="60" fill="#f6f6f6"/>
<ellipse cx="409.2" cy="408.2" rx="8" ry="9" fill="#bbb" opacity=".6" filter="url(#bl2)"/>
<ellipse cx="473" cy="413" rx="8" ry="9" fill="#bbb" opacity=".6" filter="url(#bl2)"/>
<ellipse cx="446.4" cy="404" rx="14.5" ry="14" fill="#d9d9d9" stroke="#2c2c2c" stroke-width="2.2"/>
<path d="M440 408.1L434.9 411.3" stroke="#3a3a3a" stroke-width="1" opacity="0.75"/>
<path d="M444.2 396.7L442.8 392.2" stroke="#3a3a3a" stroke-width="1" opacity="0.75"/>
<path d="M450.4 399L453.3 395.4" stroke="#3a3a3a" stroke-width="1" opacity="0.75"/>
<path d="M439.5 405.6L434.8 406.7" stroke="#3a3a3a" stroke-width="1" opacity="0.75"/>
<path d="M448.8 397.1L449.9 393.9" stroke="#3a3a3a" stroke-width="1" opacity="0.75"/>
<path d="M439.3 403.4L433 402.9" stroke="#3a3a3a" stroke-width="1" opacity="0.75"/>
<path d="M451.4 401.5L457.1 398.6" stroke="#3a3a3a" stroke-width="1" opacity="0.75"/>
<path d="M442.1 409.9L439.8 413.1" stroke="#3a3a3a" stroke-width="1" opacity="0.75"/>
<path d="M453.6 401.2L457.1 399.8" stroke="#3a3a3a" stroke-width="1" opacity="0.75"/>
<path d="M441.1 402.8L432.9 401" stroke="#3a3a3a" stroke-width="1" opacity="0.75"/>
<path d="M439.5 404.3L434.4 404.6" stroke="#3a3a3a" stroke-width="1" opacity="0.75"/>
<path d="M447.5 410.4L448.4 415.5" stroke="#3a3a3a" stroke-width="1" opacity="0.75"/>
<path d="M440.5 398.9L437.2 396.1" stroke="#3a3a3a" stroke-width="1" opacity="0.75"/>
<path d="M444.6 410L443 415.1" stroke="#3a3a3a" stroke-width="1" opacity="0.75"/>
<path d="M440.6 399.2L436.2 395.6" stroke="#3a3a3a" stroke-width="1" opacity="0.75"/>
<path d="M447.2 411.2L447.8 417" stroke="#3a3a3a" stroke-width="1" opacity="0.75"/>
<path d="M449.6 398.7L453.1 393" stroke="#3a3a3a" stroke-width="1" opacity="0.75"/>
<path d="M446.2 397L446.1 393.2" stroke="#3a3a3a" stroke-width="1" opacity="0.75"/>
<path d="M452.2 406.8L458.7 409.9" stroke="#3a3a3a" stroke-width="1" opacity="0.75"/>
<path d="M447 397.6L447.7 391.2" stroke="#3a3a3a" stroke-width="1" opacity="0.75"/>
<path d="M450.2 398.9L454.5 393" stroke="#3a3a3a" stroke-width="1" opacity="0.75"/>
<path d="M450.3 407.4L455.5 411.9" stroke="#3a3a3a" stroke-width="1" opacity="0.75"/>
<path d="M453.5 406.8L457.4 408.4" stroke="#3a3a3a" stroke-width="1" opacity="0.75"/>
<path d="M454.3 403.7L457.3 403.5" stroke="#3a3a3a" stroke-width="1" opacity="0.75"/>
<path d="M449.8 400.1L455.4 393.9" stroke="#3a3a3a" stroke-width="1" opacity="0.75"/>
<path d="M446.9 409.9L447.5 417.6" stroke="#3a3a3a" stroke-width="1" opacity="0.75"/>
<path d="M441.1 405.5L434.6 407.3" stroke="#3a3a3a" stroke-width="1" opacity="0.75"/>
<path d="M449.9 399.7L453.9 394.8" stroke="#3a3a3a" stroke-width="1" opacity="0.75"/>
<path d="M445.1 409.5L443.7 415.2" stroke="#3a3a3a" stroke-width="1" opacity="0.75"/>
<path d="M450.8 409L454.9 413.6" stroke="#3a3a3a" stroke-width="1" opacity="0.75"/>
<path d="M440.7 404.2L434.6 404.5" stroke="#3a3a3a" stroke-width="1" opacity="0.75"/>
<path d="M440.3 406.8L434.3 409.6" stroke="#3a3a3a" stroke-width="1" opacity="0.75"/>
<path d="M449.7 398.1L451.5 394.6" stroke="#3a3a3a" stroke-width="1" opacity="0.75"/>
<path d="M453.1 407.3L456.6 409" stroke="#3a3a3a" stroke-width="1" opacity="0.75"/>
<ellipse cx="446.4" cy="404" rx="9" ry="8.7" fill="none" stroke="#444" stroke-width="1.2" opacity=".7"/>
<circle cx="447.3" cy="401" r="4.6" fill="#141414"/>
<path d="M447.3 401L446.1 415" stroke="#222" stroke-width="2" opacity=".85"/>
<path d="M406.2 408.2C407.3 407.4 410.4 404.9 413 403.5C415.6 402.1 417.7 401 421.5 399.6C425.3 398.2 431.5 396.2 435.8 395.3C440.1 394.4 443.5 394 447.3 394.4C451.1 394.8 455.1 395.9 458.8 397.7C462.5 399.5 466.4 402.8 469.3 405.3C472.2 407.9 474.9 411.7 476 413" fill="none" stroke="#1e1e1e" stroke-width="9" opacity=".5"/>
<path d="M406.2 408.2C408.3 408.9 414.1 410.9 418.6 412.5C423.1 414.1 428.2 416.6 433 417.8C437.8 419 442.5 419.9 447.3 419.7C452.1 419.5 456.8 417.9 461.6 416.8C466.4 415.7 473.6 413.6 476 413" fill="none" stroke="#777" stroke-width="3" opacity=".35"/>
<ellipse cx="446" cy="410.5" rx="3.8" ry="3.8" fill="#fff" opacity="0.85"/>
<ellipse cx="443" cy="398" rx="1.3" ry="1.3" fill="#fff" opacity="0.9"/>
</g>
<path d="M406.2 408.2C407.3 407.4 410.4 404.9 413 403.5C415.6 402.1 417.7 401 421.5 399.6C425.3 398.2 431.5 396.2 435.8 395.3C440.1 394.4 443.5 394 447.3 394.4C451.1 394.8 455.1 395.9 458.8 397.7C462.5 399.5 466.4 402.8 469.3 405.3C472.2 407.9 474.9 411.7 476 413" stroke="#1c1c1c" stroke-width="3" opacity="0.97"/>
<path d="M404 406.5C405.3 405.4 409.1 401.8 412 400C414.9 398.2 417.5 397.1 421.5 395.8C425.5 394.5 431.5 392.7 435.8 392C440.1 391.3 443 391 447.3 391.5C451.6 392 457.7 393.2 461.6 394.8C465.6 396.4 468.1 398.8 471 401C473.9 403.2 477.5 407 478.8 408.2" stroke="#555" stroke-width="1" opacity="0.85"/>
<path d="M406.2 408.2C408.3 408.9 414.1 410.9 418.6 412.5C423.1 414.1 428.2 416.6 433 417.8C437.8 419 442.5 419.9 447.3 419.7C452.1 419.5 456.8 417.9 461.6 416.8C466.4 415.7 473.6 413.6 476 413" stroke="#4a4a4a" stroke-width="1.2" opacity="0.85"/>
<path d="M407.4 407.4L402.8 406" stroke="#333" stroke-width="1.1" opacity="0.80"/>
<path d="M409.9 405.7L405.5 403.8" stroke="#333" stroke-width="1.1" opacity="0.80"/>
<path d="M412.3 404L408.4 401.5" stroke="#333" stroke-width="1.1" opacity="0.80"/>
<path d="M415.3 402.5L411.3 399.3" stroke="#333" stroke-width="1.1" opacity="0.80"/>
<path d="M418.3 401.1L414.8 397.7" stroke="#333" stroke-width="1.1" opacity="0.80"/>
<path d="M421.4 399.6L418.2 396.2" stroke="#333" stroke-width="1.1" opacity="0.80"/>
<path d="M426.5 398.1L422.3 394.8" stroke="#333" stroke-width="1.1" opacity="0.80"/>
<path d="M431.7 396.5L427.5 393.4" stroke="#333" stroke-width="1.1" opacity="0.80"/>
<path d="M436.7 395.2L432.7 392" stroke="#333" stroke-width="1.1" opacity="0.80"/>
<path d="M440.8 394.9L437.2 391.4" stroke="#333" stroke-width="1.1" opacity="0.80"/>
<path d="M445 394.6L441.4 391.2" stroke="#333" stroke-width="1.1" opacity="0.80"/>
<path d="M449.1 394.9L445.5 391" stroke="#333" stroke-width="1.1" opacity="0.80"/>
<path d="M411 410.4L408 415.3" stroke="#555" stroke-width="0.8" opacity="0.75"/>
<path d="M414.4 411.5L412.4 414.7" stroke="#555" stroke-width="0.8" opacity="0.75"/>
<path d="M417.8 412.7L415.6 416.1" stroke="#555" stroke-width="0.8" opacity="0.75"/>
<path d="M421.5 414.1L418.3 419.4" stroke="#555" stroke-width="0.8" opacity="0.75"/>
<path d="M425.5 415.5L422.5 420.4" stroke="#555" stroke-width="0.8" opacity="0.75"/>
<path d="M429.4 417L426.6 421.6" stroke="#555" stroke-width="0.8" opacity="0.75"/>
<path d="M433.3 418.3L430.9 422.3" stroke="#555" stroke-width="0.8" opacity="0.75"/>
<path d="M437.2 418.9L434.6 423.1" stroke="#555" stroke-width="0.8" opacity="0.75"/>
<path d="M441.1 419.4L438.9 422.9" stroke="#555" stroke-width="0.8" opacity="0.75"/>
<path d="M445 419.9L443 423" stroke="#555" stroke-width="0.8" opacity="0.75"/>
<path d="M448.9 419.9L446.7 423.4" stroke="#555" stroke-width="0.8" opacity="0.75"/>
<clipPath id="eR"><path d="M549.3 408.8C547.3 407.6 551.3 404.9 553 403C554.7 401.1 556.5 399.6 559.5 397.5C562.5 395.4 566.7 391.9 570.8 390.2C574.9 388.5 579.6 387.7 584.3 387.4C589 387.1 594.9 387.6 599 388.5C603.1 389.4 605.7 391.5 609.1 393C612.5 394.5 618.1 396.4 619.3 397.5C620.4 398.6 618.2 398.5 616 399.8C613.8 401.1 609.4 403.7 605.8 405.4C602.2 407.1 598.6 408.9 594.5 410C590.4 411.1 585.9 412.1 581 412.2C576.1 412.3 570.4 411.1 565.1 410.5C559.8 409.9 551.3 410.1 549.3 408.8Z"/></clipPath>
<g clip-path="url(#eR)">
<rect x="536" y="368.5" width="100" height="60" fill="#f6f6f6"/>
<ellipse cx="552.3" cy="408.8" rx="8" ry="9" fill="#bbb" opacity=".6" filter="url(#bl2)"/>
<ellipse cx="616.3" cy="397.5" rx="8" ry="9" fill="#bbb" opacity=".6" filter="url(#bl2)"/>
<ellipse cx="586" cy="398.5" rx="14.5" ry="13.5" fill="#d9d9d9" stroke="#2c2c2c" stroke-width="2.2"/>
<path d="M590.2 403.2L595.1 408.6" stroke="#3a3a3a" stroke-width="1" opacity="0.75"/>
<path d="M580.1 397L573.9 395.4" stroke="#3a3a3a" stroke-width="1" opacity="0.75"/>
<path d="M582.6 405.2L580.4 409.6" stroke="#3a3a3a" stroke-width="1" opacity="0.75"/>
<path d="M592.9 400L598.4 401.3" stroke="#3a3a3a" stroke-width="1" opacity="0.75"/>
<path d="M580.6 402.8L575.6 406.9" stroke="#3a3a3a" stroke-width="1" opacity="0.75"/>
<path d="M593.5 400.5L598.9 402" stroke="#3a3a3a" stroke-width="1" opacity="0.75"/>
<path d="M582 392.8L578.3 387.6" stroke="#3a3a3a" stroke-width="1" opacity="0.75"/>
<path d="M592.6 400.7L598 402.4" stroke="#3a3a3a" stroke-width="1" opacity="0.75"/>
<path d="M591 403.8L595.4 408.4" stroke="#3a3a3a" stroke-width="1" opacity="0.75"/>
<path d="M579.8 398.3L572.4 398.1" stroke="#3a3a3a" stroke-width="1" opacity="0.75"/>
<path d="M587.3 405.7L587.9 408.8" stroke="#3a3a3a" stroke-width="1" opacity="0.75"/>
<path d="M580.1 396.3L575.4 394.5" stroke="#3a3a3a" stroke-width="1" opacity="0.75"/>
<path d="M579.8 402.2L574.4 405.4" stroke="#3a3a3a" stroke-width="1" opacity="0.75"/>
<path d="M591.7 397.9L599.9 397" stroke="#3a3a3a" stroke-width="1" opacity="0.75"/>
<path d="M590.7 401L597.7 404.8" stroke="#3a3a3a" stroke-width="1" opacity="0.75"/>
<path d="M580.5 395.4L576.6 393.2" stroke="#3a3a3a" stroke-width="1" opacity="0.75"/>
<path d="M580 400.1L574 401.7" stroke="#3a3a3a" stroke-width="1" opacity="0.75"/>
<path d="M591.5 401.4L597.1 404.4" stroke="#3a3a3a" stroke-width="1" opacity="0.75"/>
<path d="M580.9 399.4L574.1 400.7" stroke="#3a3a3a" stroke-width="1" opacity="0.75"/>
<path d="M579.2 398.5L573.3 398.5" stroke="#3a3a3a" stroke-width="1" opacity="0.75"/>
<path d="M586.5 404.5L586.8 408.8" stroke="#3a3a3a" stroke-width="1" opacity="0.75"/>
<path d="M590.1 401.9L595.4 406.4" stroke="#3a3a3a" stroke-width="1" opacity="0.75"/>
<path d="M592.5 399.1L598.9 399.7" stroke="#3a3a3a" stroke-width="1" opacity="0.75"/>
<path d="M579.3 394.9L575.8 392.9" stroke="#3a3a3a" stroke-width="1" opacity="0.75"/>
<path d="M579.2 401.4L574.2 403.5" stroke="#3a3a3a" stroke-width="1" opacity="0.75"/>
<path d="M587.7 405.7L588.4 409.1" stroke="#3a3a3a" stroke-width="1" opacity="0.75"/>
<path d="M580.8 394.7L577.1 392" stroke="#3a3a3a" stroke-width="1" opacity="0.75"/>
<path d="M592.6 400L596.9 400.9" stroke="#3a3a3a" stroke-width="1" opacity="0.75"/>
<path d="M580.9 403.3L576.2 407.7" stroke="#3a3a3a" stroke-width="1" opacity="0.75"/>
<path d="M587.3 393.9L589 387.6" stroke="#3a3a3a" stroke-width="1" opacity="0.75"/>
<path d="M585.4 393.5L584.7 387.1" stroke="#3a3a3a" stroke-width="1" opacity="0.75"/>
<path d="M588.2 403.3L591.1 409.9" stroke="#3a3a3a" stroke-width="1" opacity="0.75"/>
<path d="M587.2 392.7L588.4 386.6" stroke="#3a3a3a" stroke-width="1" opacity="0.75"/>
<path d="M591.4 401.8L596.1 404.8" stroke="#3a3a3a" stroke-width="1" opacity="0.75"/>
<ellipse cx="586" cy="398.5" rx="9" ry="8.4" fill="none" stroke="#444" stroke-width="1.2" opacity=".7"/>
<circle cx="584.8" cy="396.5" r="5" fill="#141414"/>
<path d="M584.8 396.5L586 410" stroke="#222" stroke-width="2" opacity=".85"/>
<path d="M549.3 408.8C549.9 407.8 551.3 404.9 553 403C554.7 401.1 556.5 399.6 559.5 397.5C562.5 395.4 566.7 391.9 570.8 390.2C574.9 388.5 579.6 387.7 584.3 387.4C589 387.1 594.9 387.6 599 388.5C603.1 389.4 605.7 391.5 609.1 393C612.5 394.5 617.6 396.8 619.3 397.5" fill="none" stroke="#1e1e1e" stroke-width="9" opacity=".5"/>
<path d="M549.3 408.8C551.9 409.1 559.8 409.9 565.1 410.5C570.4 411.1 576.1 412.3 581 412.2C585.9 412.1 590.4 411.1 594.5 410C598.6 408.9 602.2 407.1 605.8 405.4C609.4 403.7 613.8 401.1 616 399.8C618.2 398.5 618.8 397.9 619.3 397.5" fill="none" stroke="#777" stroke-width="3" opacity=".35"/>
<ellipse cx="583.6" cy="395" rx="1.7" ry="1.7" fill="#fff" opacity="1"/>
<ellipse cx="589" cy="404" rx="2.6" ry="2.6" fill="#fff" opacity="0.6"/>
</g>
<path d="M549.3 408.8C549.9 407.8 551.3 404.9 553 403C554.7 401.1 556.5 399.6 559.5 397.5C562.5 395.4 566.7 391.9 570.8 390.2C574.9 388.5 579.6 387.7 584.3 387.4C589 387.1 594.9 387.6 599 388.5C603.1 389.4 605.7 391.5 609.1 393C612.5 394.5 617.6 396.8 619.3 397.5" stroke="#1c1c1c" stroke-width="3" opacity="0.97"/>
<path d="M550 405C551.2 403.6 553.9 399.3 557.2 396.4C560.5 393.5 565.3 389.5 569.6 387.4C573.9 385.3 578.7 384.5 583.2 384C587.7 383.5 592.6 383.9 596.7 384.6C600.8 385.4 604.2 386.7 608 388.5C611.8 390.3 615.3 393.6 619.3 395.3C623.2 397 629.6 398.1 631.7 398.7" stroke="#555" stroke-width="1" opacity="0.85"/>
<path d="M549.3 408.8C551.9 409.1 559.8 409.9 565.1 410.5C570.4 411.1 576.1 412.3 581 412.2C585.9 412.1 590.4 411.1 594.5 410C598.6 408.9 602.2 407.1 605.8 405.4C609.4 403.7 613.8 401.1 616 399.8C618.2 398.5 618.8 397.9 619.3 397.5" stroke="#4a4a4a" stroke-width="1.2" opacity="0.85"/>
<path d="M617.5 396.7L632.9 398.2" stroke="#333" stroke-width="1.1" opacity="0.80"/>
<path d="M613.8 395.1L628.8 397.1" stroke="#333" stroke-width="1.1" opacity="0.80"/>
<path d="M610.1 393.4L624.3 395.8" stroke="#333" stroke-width="1.1" opacity="0.80"/>
<path d="M606.4 391.8L619.9 394.4" stroke="#333" stroke-width="1.1" opacity="0.80"/>
<path d="M602.8 390.2L615.8 392" stroke="#333" stroke-width="1.1" opacity="0.80"/>
<path d="M599.1 388.5L611.7 389.5" stroke="#333" stroke-width="1.1" opacity="0.80"/>
<path d="M593.8 388.1L607.6 387.5" stroke="#333" stroke-width="1.1" opacity="0.80"/>
<path d="M588.5 387.7L603.5 386" stroke="#333" stroke-width="1.1" opacity="0.80"/>
<path d="M583.3 387.6L599.4 384.6" stroke="#333" stroke-width="1.1" opacity="0.80"/>
<path d="M578.4 388.6L594.9 384" stroke="#333" stroke-width="1.1" opacity="0.80"/>
<path d="M573.5 389.6L590 383.7" stroke="#333" stroke-width="1.1" opacity="0.80"/>
<path d="M569 391.4L585.1 383.5" stroke="#333" stroke-width="1.1" opacity="0.80"/>
<path d="M617.8 399.1L620.5 403.6" stroke="#555" stroke-width="0.8" opacity="0.75"/>
<path d="M616.7 399.8L619.3 404.1" stroke="#555" stroke-width="0.8" opacity="0.75"/>
<path d="M614.8 401L617.8 405.8" stroke="#555" stroke-width="0.8" opacity="0.75"/>
<path d="M611.5 402.8L614.3 407.5" stroke="#555" stroke-width="0.8" opacity="0.75"/>
<path d="M608.1 404.6L610.9 409.1" stroke="#555" stroke-width="0.8" opacity="0.75"/>
<path d="M604.7 406.4L607.1 410.3" stroke="#555" stroke-width="0.8" opacity="0.75"/>
<path d="M601 407.9L603.5 412" stroke="#555" stroke-width="0.8" opacity="0.75"/>
<path d="M597.3 409.4L599.5 412.9" stroke="#555" stroke-width="0.8" opacity="0.75"/>
<path d="M593.4 410.7L595.5 414" stroke="#555" stroke-width="0.8" opacity="0.75"/>
<path d="M589 411.4L591.5 415.6" stroke="#555" stroke-width="0.8" opacity="0.75"/>
<path d="M584.6 412.1L586.8 415.6" stroke="#555" stroke-width="0.8" opacity="0.75"/>
<path d="M406.500 408C402 407 398 404.500 395 401" stroke="#333" stroke-width="1.5" opacity="0.85"/>
<path d="M409 410C404 411 400 411 397 409.500" stroke="#555" stroke-width="0.9" opacity="0.70"/>
<path d="M619 397.500C624 399 628 399.500 632 398.500" stroke="#444" stroke-width="1.2" opacity="0.80"/>
<path d="M551 408C555 404 560 404 565 407" stroke="#666" stroke-width="0.9" opacity="0.70"/>
<path d="M486 474C485 475.2 481.4 478.3 480 481C478.6 483.7 477.8 487.5 477.8 490.3C477.8 493.1 478.6 496 480 498C481.4 500 484.4 501.9 486.2 502.4C488 502.9 489.7 501.7 491 501C492.3 500.3 493.7 498.8 494.2 498.3" stroke="#484848" stroke-width="1.3" opacity="0.90"/>
<path d="M541 470C542.2 471.3 546.2 474.9 548 478C549.8 481.1 551.3 485.1 551.5 488.3C551.7 491.5 550.5 494.6 549 497C547.5 499.4 544.7 501.7 542.5 502.4C540.3 503.1 538.1 501.8 536 501C533.9 500.2 531 498.1 530 497.5" stroke="#484848" stroke-width="1.3" opacity="0.90"/>
<path d="M494 499C495 499.7 498 501.5 500 503C502 504.5 503.9 507 506 508C508.1 509 510.1 509.3 512.3 509C514.5 508.7 517 507.5 519 506C521 504.5 523.2 501 524 500" stroke="#555" stroke-width="1.1" opacity="0.85"/>
<path d="M489.500 499.500C492 496 497 496.500 500 500.500C496 501 492 501 489.500 499.500Z" fill="#2f2f2f"/>
<path d="M520 499C524 495.500 531 495 536 498.500C531 500 525 500.500 520 499Z" fill="#2f2f2f"/>
<path d="M494 392C493.7 396.7 492.5 410.3 492 420C491.5 429.7 491.5 441.7 491 450C490.5 458.3 489.3 466.7 489 470" stroke="#aaa" stroke-width="0.9" opacity="0.50"/>
<path d="M466 553C468.3 551.9 475.7 548.7 480 546.5C484.3 544.3 488.7 541.5 492 540C495.3 538.5 497.3 537.7 500 537.5C502.7 537.3 505.3 538.4 508 539C510.7 539.6 513.3 541.1 516 541C518.7 540.9 521.5 539.2 524 538.5C526.5 537.8 527.5 536.2 531 536.5C534.5 536.8 539.8 538.8 545 540.5C550.2 542.2 556.3 545.2 562 547C567.7 548.8 576.2 550.3 579 551" stroke="#555" stroke-width="1.1" opacity="0.85"/>
<path d="M464 552.5C466.7 552.8 474 553.7 480 554C486 554.3 493.3 554.5 500 554.5C506.7 554.5 512.5 554.1 520 554C527.5 553.9 537.5 554.2 545 554C552.5 553.8 559 553.1 565 552.5C571 551.9 578.3 550.8 581 550.5" stroke="#3c3c3c" stroke-width="1.5" opacity="0.90"/>
<path d="M480 564.6C481.7 565.8 486.7 570 490 572C493.3 574 495 575.4 500 576.7C505 578 512.6 580.3 520 580C527.4 579.7 538.5 576.5 544.5 574.7C550.5 572.9 552.7 571 556 569C559.3 567 563.1 563.7 564.5 562.6" stroke="#777" stroke-width="1" opacity="0.75"/>
<path d="M463 548C461.500 551 461.500 555 463.500 558" stroke="#777" stroke-width="0.9" opacity="0.70"/>
<path d="M582 546C584 549 584 553 582 556" stroke="#777" stroke-width="0.9" opacity="0.70"/>
<path d="M533.8 557L533.7 565.1" stroke="#777" stroke-width="0.7" opacity="0.45"/>
<path d="M522.8 546L523.5 551.3" stroke="#666" stroke-width="0.7" opacity="0.50"/>
<path d="M520.1 559L520.6 564.1" stroke="#777" stroke-width="0.7" opacity="0.45"/>
<path d="M508.1 557.2L507.5 565.8" stroke="#777" stroke-width="0.7" opacity="0.45"/>
<path d="M483 548.6L482.2 553.1" stroke="#666" stroke-width="0.7" opacity="0.50"/>
<path d="M539.2 557.3L539.6 562.2" stroke="#777" stroke-width="0.7" opacity="0.45"/>
<path d="M571.8 559.3L571.1 566.6" stroke="#777" stroke-width="0.7" opacity="0.45"/>
<path d="M475 559.2L474.9 566" stroke="#777" stroke-width="0.7" opacity="0.45"/>
<path d="M561.4 547.9L561.4 553.1" stroke="#666" stroke-width="0.7" opacity="0.50"/>
<path d="M482.3 556.6L482.4 560.8" stroke="#777" stroke-width="0.7" opacity="0.45"/>
<path d="M569.9 558L570.7 562.1" stroke="#777" stroke-width="0.7" opacity="0.45"/>
<path d="M525.8 548L525.3 552.3" stroke="#666" stroke-width="0.7" opacity="0.50"/>
<path d="M543.4 546.4L544 550.4" stroke="#666" stroke-width="0.7" opacity="0.50"/>
<path d="M545.5 558.5L546.3 565.3" stroke="#777" stroke-width="0.7" opacity="0.45"/>
<path d="M553 544.4L553.4 548.5" stroke="#666" stroke-width="0.7" opacity="0.50"/>
<path d="M493 547.5L492.4 552.4" stroke="#666" stroke-width="0.7" opacity="0.50"/>
<path d="M523.5 546.2L522.7 552.6" stroke="#666" stroke-width="0.7" opacity="0.50"/>
<path d="M524.1 546.5L523.2 551.2" stroke="#666" stroke-width="0.7" opacity="0.50"/>
<path d="M539.3 545.1L538.5 551.2" stroke="#666" stroke-width="0.7" opacity="0.50"/>
<path d="M506.7 544.3L506.5 551.1" stroke="#666" stroke-width="0.7" opacity="0.50"/>
<path d="M509.5 545.4L509.2 552.4" stroke="#666" stroke-width="0.7" opacity="0.50"/>
<path d="M564.5 558.4L565.4 563.7" stroke="#777" stroke-width="0.7" opacity="0.45"/>
<path d="M496 559.3L495.3 567.4" stroke="#777" stroke-width="0.7" opacity="0.45"/>
<path d="M500.2 544L500.2 549.7" stroke="#666" stroke-width="0.7" opacity="0.50"/>
<path d="M549.8 556.6L550.7 564.1" stroke="#777" stroke-width="0.7" opacity="0.45"/>
<path d="M521.8 546.3L522.1 552.6" stroke="#666" stroke-width="0.7" opacity="0.50"/>
<path d="M518.2 513L519.7 519.2" stroke="#666" stroke-width="0.7" opacity="0.64"/>
<path d="M554.5 537.8L556 544.7" stroke="#666" stroke-width="0.7" opacity="0.49"/>
<path d="M556.1 537.7L557.6 543.1" stroke="#666" stroke-width="0.7" opacity="0.40"/>
<path d="M495.9 526.9L494.4 531.2" stroke="#666" stroke-width="0.7" opacity="0.47"/>
<path d="M519.1 513.4L520.6 517.5" stroke="#666" stroke-width="0.7" opacity="0.51"/>
<path d="M488.7 540.2L487.2 546.9" stroke="#666" stroke-width="0.7" opacity="0.64"/>
<path d="M491.8 533.6L490.3 540.5" stroke="#666" stroke-width="0.7" opacity="0.54"/>
<path d="M543.9 533.2L545.4 538.7" stroke="#666" stroke-width="0.7" opacity="0.40"/>
<path d="M492.2 530L490.7 535.9" stroke="#666" stroke-width="0.7" opacity="0.40"/>
<path d="M543.9 528.6L545.4 533.9" stroke="#666" stroke-width="0.7" opacity="0.46"/>
<path d="M485.5 540.5L484 544.9" stroke="#666" stroke-width="0.7" opacity="0.44"/>
<path d="M498.3 523.2L496.8 528.7" stroke="#666" stroke-width="0.7" opacity="0.48"/>
<path d="M544.5 533.8L546 538.8" stroke="#666" stroke-width="0.7" opacity="0.35"/>
<path d="M522.4 516.5L523.9 520.8" stroke="#666" stroke-width="0.7" opacity="0.59"/>
<path d="M546 533.3L547.5 539.6" stroke="#666" stroke-width="0.7" opacity="0.56"/>
<path d="M559.7 541.1L561.2 545.2" stroke="#666" stroke-width="0.7" opacity="0.38"/>
<path d="M530.2 519.9L531.7 526.5" stroke="#666" stroke-width="0.7" opacity="0.59"/>
<path d="M494.5 527.4L493 534.1" stroke="#666" stroke-width="0.7" opacity="0.37"/>
<path d="M497.4 528.1L495.9 532.9" stroke="#666" stroke-width="0.7" opacity="0.57"/>
<path d="M535.2 527.3L536.7 533.6" stroke="#666" stroke-width="0.7" opacity="0.52"/>
<path d="M520.6 516.1L522.1 522" stroke="#666" stroke-width="0.7" opacity="0.44"/>
<path d="M568 546.9L569.5 553.9" stroke="#666" stroke-width="0.7" opacity="0.62"/>
<path d="M502.2 522.5L500.7 529.3" stroke="#666" stroke-width="0.7" opacity="0.53"/>
<path d="M566.1 541.9L567.6 547" stroke="#666" stroke-width="0.7" opacity="0.57"/>
<path d="M535.8 522.4L537.3 529.1" stroke="#666" stroke-width="0.7" opacity="0.52"/>
<path d="M507 513.1L505.5 519.5" stroke="#666" stroke-width="0.7" opacity="0.56"/>
<path d="M494.7 532.9L493.2 538.8" stroke="#666" stroke-width="0.7" opacity="0.51"/>
<path d="M484.7 543.2L483.2 547.2" stroke="#666" stroke-width="0.7" opacity="0.61"/>
<path d="M496.9 526L495.4 531.5" stroke="#666" stroke-width="0.7" opacity="0.60"/>
<path d="M528.8 521.7L530.3 528.2" stroke="#666" stroke-width="0.7" opacity="0.52"/>
<path d="M556.1 537.4L557.6 544.2" stroke="#666" stroke-width="0.7" opacity="0.39"/>
<path d="M552.9 538.2L554.4 544" stroke="#666" stroke-width="0.7" opacity="0.53"/>
<path d="M495.8 529.5L494.3 533.8" stroke="#666" stroke-width="0.7" opacity="0.47"/>
<path d="M495.3 528.3L493.8 532.7" stroke="#666" stroke-width="0.7" opacity="0.59"/>
<path d="M553.1 535.1L554.6 541.4" stroke="#666" stroke-width="0.7" opacity="0.58"/>
<path d="M532.8 522.7L534.3 529.6" stroke="#666" stroke-width="0.7" opacity="0.47"/>
<path d="M567.5 546.4L569 551" stroke="#666" stroke-width="0.7" opacity="0.45"/>
<path d="M549 531.1L550.5 536.8" stroke="#666" stroke-width="0.7" opacity="0.57"/>
<path d="M497.2 525.1L495.7 531.5" stroke="#666" stroke-width="0.7" opacity="0.49"/>
<path d="M537.6 528.5L539.1 532.9" stroke="#666" stroke-width="0.7" opacity="0.51"/>
<path d="M553.2 532.5L554.7 539.3" stroke="#666" stroke-width="0.7" opacity="0.64"/>
<path d="M495 526.3L493.5 530.4" stroke="#666" stroke-width="0.7" opacity="0.48"/>
<path d="M501.9 520.2L500.4 524.8" stroke="#666" stroke-width="0.7" opacity="0.64"/>
<path d="M495.1 528.2L493.6 533.8" stroke="#666" stroke-width="0.7" opacity="0.50"/>
<path d="M533.8 522.6L535.3 529" stroke="#666" stroke-width="0.7" opacity="0.51"/>
<path d="M523.5 519.2L525 524.6" stroke="#666" stroke-width="0.7" opacity="0.53"/>
<path d="M494.5 532L493 537.3" stroke="#666" stroke-width="0.7" opacity="0.47"/>
<path d="M496.1 531.2L494.6 535.6" stroke="#666" stroke-width="0.7" opacity="0.37"/>
<path d="M533.8 525.2L535.3 530.6" stroke="#666" stroke-width="0.7" opacity="0.56"/>
<path d="M499.8 522.8L498.3 526.8" stroke="#666" stroke-width="0.7" opacity="0.43"/>
<path d="M504 520.7L502.5 527" stroke="#666" stroke-width="0.7" opacity="0.62"/>
<path d="M490 532L488.5 538.7" stroke="#666" stroke-width="0.7" opacity="0.36"/>
<path d="M489.5 538.6L488 544.5" stroke="#666" stroke-width="0.7" opacity="0.57"/>
<path d="M548.9 534.9L550.4 539.6" stroke="#666" stroke-width="0.7" opacity="0.59"/>
<path d="M507.7 513.2L506.2 517.4" stroke="#666" stroke-width="0.7" opacity="0.60"/>
<path d="M501.4 524.7L499.9 528.8" stroke="#666" stroke-width="0.7" opacity="0.65"/>
<path d="M486.1 537L484.6 543" stroke="#666" stroke-width="0.7" opacity="0.38"/>
<path d="M498.9 527.5L497.4 531.5" stroke="#666" stroke-width="0.7" opacity="0.44"/>
<path d="M562.4 537.9L563.9 543.6" stroke="#666" stroke-width="0.7" opacity="0.39"/>
<path d="M554.8 535.7L556.3 541.8" stroke="#666" stroke-width="0.7" opacity="0.59"/>
<path d="M500.9 520.2L499.4 526.5" stroke="#666" stroke-width="0.7" opacity="0.53"/>
<path d="M501.5 522.3L500 529.1" stroke="#666" stroke-width="0.7" opacity="0.36"/>
<path d="M530.7 521.1L532.2 526.5" stroke="#666" stroke-width="0.7" opacity="0.40"/>
<path d="M557.9 541.1L559.4 545.5" stroke="#666" stroke-width="0.7" opacity="0.48"/>
<path d="M567 543.6L568.5 550.6" stroke="#666" stroke-width="0.7" opacity="0.64"/>
<path d="M527.4 518.1L528.9 524.5" stroke="#666" stroke-width="0.7" opacity="0.36"/>
<path d="M560.9 538.3L562.4 544.3" stroke="#666" stroke-width="0.7" opacity="0.42"/>
<path d="M496.3 526.1L494.8 530.4" stroke="#666" stroke-width="0.7" opacity="0.62"/>
<path d="M540.6 529.5L542.1 535" stroke="#666" stroke-width="0.7" opacity="0.38"/>
<path d="M504.3 516.7L502.8 523.2" stroke="#666" stroke-width="0.7" opacity="0.44"/>
<path d="M495 643.3C498 648.2 508 663.3 512.8 672.8C517.6 682.2 521 692.6 524 700C527 707.4 527.7 707 530.5 717C533.3 727 538.5 747.8 540.9 760C543.3 772.2 543.6 780.3 545 790C546.4 799.7 548.3 813.3 549 818" stroke="#555" stroke-width="1.3" opacity="0.90"/>
<path d="M540 760C541 765.8 543.8 784.7 546 795C548.2 805.3 551.8 817.5 553 822" stroke="#999" stroke-width="0.7" opacity="0.60"/>
<path d="M543 770C544 775 546.7 791 549 800C551.3 809 555.7 820 557 824" stroke="#aaa" stroke-width="0.7" opacity="0.50"/>
<path d="M656 540C656.3 544.2 657.3 557.6 658 565C658.7 572.4 658.5 576.7 660.4 584.3C662.3 591.9 666.3 604.8 669.2 610.8C672.1 616.8 674.9 617.5 678 620C681.1 622.5 686.3 625 688 626" stroke="#5a5a5a" stroke-width="1.1" opacity="0.85"/>
<path d="M688.4 625.6C687.7 629.7 685.7 642.6 684 650C682.3 657.4 680.7 663.3 678 670C675.3 676.7 671.4 683.6 668 690C664.6 696.4 662.1 700.5 657.4 708.2C652.7 715.9 645.4 727.4 640 736C634.6 744.6 630.7 751.7 625 760C619.3 768.3 611.3 778.7 606 786C600.7 793.3 596.3 798.2 593 804C589.7 809.8 587.9 815.2 586 821C584.1 826.8 582.2 835.8 581.5 838.8" stroke="#555" stroke-width="1.1" opacity="0.90"/>
<path d="M688 626C693.3 629.6 708 639.7 720 647.7C732 655.7 746.5 665.1 760 674C773.5 682.9 794.2 696.5 801 701" stroke="#666" stroke-width="0.9" opacity="0.85"/>
<path d="M663 585C667 605 671 625 673 650" stroke="#999" stroke-width="0.7" opacity="0.50"/>
<path d="M666.5 588C670.5 605 674.5 625 676.5 652" stroke="#999" stroke-width="0.7" opacity="0.50"/>
<path d="M670 591C674 605 678 625 680 654" stroke="#999" stroke-width="0.7" opacity="0.50"/>
<path d="M673.5 594C677.5 605 681.5 625 683.5 656" stroke="#999" stroke-width="0.7" opacity="0.50"/>
<path d="M677 597C681 605 685 625 687 658" stroke="#999" stroke-width="0.7" opacity="0.50"/>
<path d="M680.5 600C684.5 605 688.5 625 690.5 660" stroke="#999" stroke-width="0.7" opacity="0.50"/>
</g>
</svg>
<!-- ===== right panel ===== -->
<div id="panel" class="abs">
  <div class="foot"></div>
  <div class="tx w" style="left:14px;top:18px;font-size:15px;line-height:18px;font-weight:bold;letter-spacing:-0.5px">Detall</div>
  <svg style="left:232px;top:22px" width="12" height="10" viewBox="0 0 12 10"><path d="M1.500 2 L9.300 7 L10 5.300 Z" fill="#fff"/></svg>

  <svg style="left:81px;top:58px;overflow:hidden" width="98" height="71" viewBox="958 124 98 71" fill="none" stroke-linecap="round" stroke-linejoin="round">
<rect x="958" y="124" width="98" height="71" fill="#fff"/>
<path d="M973 128L1040 127L1041 150L1039 170L1040 188L972 188L974 170L971 158L974 146Z" fill="#e9e9e9"/>
<g transform="translate(934.2 112.9) scale(0.141 0.121)">
<path d="M340 274 L326 262 L322 244 L318 218 L326 197 L342 181 L370 157 L405 134 L441 113 L476 101 L504 94 L530 100 L560 112 L595 124 L631 148 L652 174 L678 193 L696 221 L706 256 L706 290 L700 329 L694 364 L709 362 L715.5 374 L714.5 396 L711 420 L705 440 L697 457.5 L689 468 L680 472 L668 470 L664 500 L655 536 L660 584 L669 611 L688 626 L801 701 L960 800 L960 900 L560 900 L549 818 L541 760 L530 717 L513 673 L495 643 L489 637 L468.5 616.7 L439 578.4 L418.4 540 L400.6 500 L393 470 L386 439 L386.5 381 L372 360 L357 323 L350 285 Z" fill="#fff" stroke="none"/>
<path d="M506.1 247.1C494.8 244.1 457.3 234.4 438.7 228.9C420 223.4 407.6 217.7 394.2 214.2C380.7 210.7 367.8 208.3 358.1 207.8C348.3 207.4 341.4 207.5 335.6 211.6C329.9 215.6 324.9 224.2 323.6 232.2C322.3 240.2 327 255 327.7 259.6" stroke="#585858" stroke-width="3.8" opacity="0.86"/>
<path d="M439.8 232.2C432.6 230.2 409.4 223.1 396.5 220.1C383.7 217.1 372.3 213.7 362.9 214.1C353.6 214.5 346.1 218 340.5 222.5C335 226.9 331.7 234.4 329.6 240.7C327.5 247 328.3 256.9 328.1 260.2" stroke="#585858" stroke-width="4.4" opacity="0.54"/>
<path d="M506.6 247C496.5 245 463.3 238.2 445.8 234.9C428.4 231.6 414.9 228.4 402.1 227C389.2 225.5 377.9 225.2 368.7 226.4C359.5 227.6 353.1 230.5 347 234.4C340.9 238.3 334.9 245.7 332 249.9C329.1 254.2 330.1 258.3 329.7 260" stroke="#585858" stroke-width="3.6" opacity="0.69"/>
<path d="M505.9 246.1C496.2 245 464.7 242 448.1 239.6C431.5 237.1 418.3 232.1 406.1 231.3C393.9 230.5 383.6 233.2 374.9 234.6C366.2 236.1 360.5 236.8 353.8 239.7C347.1 242.7 339.1 248.5 334.8 252.4C330.5 256.4 329.2 261.6 328.1 263.4" stroke="#585858" stroke-width="3.5" opacity="0.57"/>
<path d="M506.3 246.2C496.8 244.8 465.6 240.2 449.3 238.2C433 236.2 420.5 234.2 408.4 234.1C396.4 234.1 385.6 236.4 377 238.1C368.3 239.7 362.8 241.3 356.4 244.2C350.1 247.1 343.3 252.2 338.8 255.5C334.3 258.9 331 262.6 329.4 264" stroke="#585858" stroke-width="4.4" opacity="0.41"/>
<path d="M450.7 241.8C444.1 241.3 422.2 238.8 411 238.9C399.8 239.1 391.8 240.5 383.5 242.8C375.2 245.2 368.3 249.3 361.1 252.9C354 256.6 345.7 262.7 340.6 264.6C335.4 266.5 332.2 264.3 330.5 264.3" stroke="#585858" stroke-width="4.8" opacity="0.44"/>
<path d="M506.4 246.3C497.7 246.6 468.3 247.7 454 247.8C439.7 248 430.5 245.6 420.3 247.1C410.1 248.5 401.2 253.5 392.7 256.6C384.2 259.7 377.3 263.3 369.2 265.5C361.2 267.7 350.2 270 344.2 269.9C338.2 269.8 335 265.6 333.1 264.8" stroke="#585858" stroke-width="5.2" opacity="0.62"/>
<path d="M505.8 246.2C501.6 244.9 491.3 242.4 480.6 238.4C470 234.5 453.7 228.9 441.8 222.5C430 216.1 420.1 206.9 409.6 200.2C399 193.4 388.6 186.2 378.6 182.2C368.6 178.2 357.7 174.2 349.7 176.2C341.6 178.1 333.5 190.9 330.3 193.8" stroke="#585858" stroke-width="3.3" opacity="0.44"/>
<path d="M505.6 246.4C500.6 245.7 487.1 245.6 475.6 242.3C464.2 239.1 449.3 232.9 437 227C424.7 221.1 412.8 213.1 401.9 206.9C391 200.8 380.3 193.1 371.4 189.9C362.6 186.7 355.3 187.3 348.8 187.8C342.3 188.2 335.1 191.8 332.4 192.6" stroke="#585858" stroke-width="4.4" opacity="0.54"/>
<path d="M506.6 246.1C500.4 245.3 481.9 244.1 469.5 241.5C457.2 238.9 444.6 234.6 432.5 230.4C420.3 226.3 407.2 221.8 396.8 216.8C386.4 211.9 378.5 204.2 369.8 200.7C361.2 197.2 351.1 197.1 344.8 196C338.6 194.8 334.2 194.1 332.1 193.8" stroke="#585858" stroke-width="4.7" opacity="0.67"/>
<path d="M505.9 246.7C498.7 245.5 476.6 240.9 462.8 239.2C449 237.5 435.6 238.3 423.3 236.3C411.1 234.3 399.8 230.6 389.3 227.3C378.8 223.9 368.4 219.9 360.1 216.2C351.9 212.5 344.6 209 339.9 205C335.2 201.1 333.3 194.8 332 192.8" stroke="#585858" stroke-width="4.6" opacity="0.39"/>
<path d="M505.7 246.8C502.7 244.9 494.7 241.1 488 235.2C481.4 229.2 474 219.5 466 211.2C458 202.8 447.3 193.1 439.9 185.2C432.5 177.3 429 168.4 421.7 163.7C414.4 158.9 404.2 157.1 396.1 156.6C388.1 156.2 377.3 160.1 373.5 160.8" stroke="#585858" stroke-width="4.9" opacity="0.49"/>
<path d="M486.5 237.5C481.7 233.9 466.4 223.7 457.7 216C449 208.2 441.5 198 434.3 191.1C427.1 184.1 421 179 414.4 174.2C407.7 169.5 401.3 164.8 394.6 162.5C388 160.2 377.7 160.7 374.4 160.3" stroke="#585858" stroke-width="3.5" opacity="0.53"/>
<path d="M480.8 236.7C476 234.3 461 228.3 451.9 222C442.8 215.7 434.2 205.4 426.3 199.1C418.3 192.9 410.8 189.2 404.2 184.5C397.5 179.8 391.2 174.8 386.1 170.8C380.9 166.8 375.4 162.2 373.2 160.4" stroke="#585858" stroke-width="4.7" opacity="0.39"/>
<path d="M505.4 247C500.4 245.5 486 241.3 475.1 237.8C464.1 234.2 449.6 230.2 439.8 225.7C430 221.2 423.4 215.8 416.3 210.9C409.2 205.9 402.5 201 397 195.9C391.6 190.8 387.8 186.2 383.6 180.4C379.5 174.5 374 164.2 372.1 160.9" stroke="#585858" stroke-width="3.5" opacity="0.38"/>
<path d="M505.6 246.3C503.3 240.2 496.4 222.1 492 209.6C487.6 197.1 482.8 183.5 479.4 171.3C476 159.1 474.6 145.5 471.4 136.3C468.2 127.2 465.3 119.6 460.1 116.4C454.9 113.2 446 116.3 440.1 117.1C434.2 117.9 427.1 120.5 424.5 121.2" stroke="#585858" stroke-width="4.1" opacity="0.59"/>
<path d="M506.1 247.1C504 241.7 498.2 226.4 493.3 215C488.5 203.5 481.9 189.9 477.2 178.3C472.4 166.8 468.7 154.8 464.9 145.6C461.1 136.4 459.2 127.5 454.2 123.3C449.3 119.1 441.6 119.3 435.3 120.4C429 121.6 419.8 128.4 416.6 130" stroke="#585858" stroke-width="5" opacity="0.56"/>
<path d="M491 217.1C488.2 212 479.5 197 474.6 186.6C469.7 176.2 466.9 163.4 461.8 154.6C456.6 145.9 450 137.9 443.6 133.9C437.2 129.9 430.1 130.3 423.5 130.7C416.8 131 407.2 135.1 403.9 136" stroke="#585858" stroke-width="4.7" opacity="0.43"/>
<path d="M506.3 247C503.8 243.7 497.4 235.3 491.7 227.2C485.9 219 478.3 208.7 471.8 198.4C465.3 188.1 458.5 174.5 452.7 165.4C446.8 156.3 443 148 436.7 143.7C430.5 139.3 422.6 138.8 415.2 139.4C407.8 139.9 396.2 145.6 392.4 146.8" stroke="#585858" stroke-width="4.3" opacity="0.49"/>
<path d="M506.5 246.2C504 244.3 497.8 240.8 491.6 234.4C485.3 228 476.3 217.1 468.8 208C461.2 198.8 453.2 187.8 446.3 179.5C439.3 171.1 434.6 162.5 427 157.7C419.4 153 408.6 151.1 400.6 150.8C392.6 150.4 382.5 154.8 378.9 155.6" stroke="#585858" stroke-width="5.4" opacity="0.72"/>
<path d="M505.5 246.6C504 241.3 499.7 226.3 496.8 214.3C493.8 202.3 490.6 187.2 487.8 174.6C484.9 162.1 480.9 149.1 479.6 138.9C478.4 128.8 478.8 120.3 480.2 113.7C481.6 107.2 486.8 101.8 488.2 99.5" stroke="#585858" stroke-width="3.8" opacity="0.45"/>
<path d="M500 214.1C499.2 208.4 496.8 191.6 495.3 179.8C493.7 167.9 491.7 154.5 490.7 143.1C489.6 131.8 489.3 119.4 489.1 111.8C488.9 104.2 489.3 99.9 489.4 97.5" stroke="#585858" stroke-width="4.2" opacity="0.47"/>
<path d="M505.9 246.5C505.7 241.6 505.3 228.3 504.6 217.2C503.8 206.1 502.3 191.8 501.4 180C500.5 168.1 500.4 157.1 499.1 146.3C497.9 135.6 495.3 123.2 493.8 115.3C492.3 107.4 490.7 101.9 490.1 99.2" stroke="#585858" stroke-width="3.6" opacity="0.63"/>
<path d="M511.8 218.9C512.5 213.5 516.2 198.2 515.9 186.4C515.5 174.6 511.8 160.4 509.8 148.3C507.7 136.2 506.6 122.2 503.4 113.9C500.2 105.5 492.6 100.8 490.5 98.2" stroke="#585858" stroke-width="4.6" opacity="0.80"/>
<path d="M512.6 220.3C514 214.6 520.3 198 520.7 186.1C521.1 174.2 517.1 160.7 514.9 148.8C512.7 136.9 510.6 123.2 507.3 114.5C504 105.8 496.9 99.5 494.9 96.5" stroke="#585858" stroke-width="3.3" opacity="0.42"/>
<path d="M511.6 244.8C512.9 239.9 517.1 226.1 519.5 215.7C522 205.2 525.1 193.7 526.2 182.3C527.3 170.9 528.8 159.1 526.2 147.3C523.6 135.5 514.5 119.7 510.4 111.5C506.3 103.4 503.1 100.6 501.6 98.4" stroke="#585858" stroke-width="4.6" opacity="0.49"/>
<path d="M515 243.6C516.7 238.9 521.8 226.5 525.3 215.4C528.8 204.2 535.2 188.7 536.1 176.8C537.1 164.9 534.1 154.8 530.9 143.8C527.7 132.8 521.2 118.3 516.8 111C512.4 103.6 506.5 101.4 504.4 99.5" stroke="#585858" stroke-width="3.2" opacity="0.68"/>
<path d="M519.6 242.3C522.1 237.3 530.3 223.2 534.2 212.3C538.2 201.3 542.3 189 543.3 176.7C544.3 164.4 543.4 149.5 540.3 138.6C537.2 127.8 529.4 118.1 524.8 111.9C520.1 105.7 514.4 103.3 512.3 101.6" stroke="#585858" stroke-width="4.6" opacity="0.83"/>
<path d="M542.9 208.9C543.9 202.1 548.6 180.7 549.1 168C549.5 155.3 548.5 142.2 545.4 132.7C542.3 123.2 534.5 116.3 530.4 111.1C526.2 105.9 522.3 103.1 520.7 101.5" stroke="#585858" stroke-width="5" opacity="0.61"/>
<path d="M552.6 205.5C553.6 198.2 558.7 174.3 558.7 161.8C558.6 149.3 556 139 552.5 130.5C549.1 122.1 541.6 115.5 538.1 111C534.7 106.5 532.7 104.7 531.6 103.5" stroke="#585858" stroke-width="4" opacity="0.40"/>
<path d="M551.8 236.7C553.6 230.5 560.7 213.3 562.7 199.9C564.8 186.6 565.1 168.9 564.1 156.5C563.1 144.1 559.3 133.1 556.7 125.6C554 118.2 551.1 115 548.1 111.7C545 108.5 540 107.1 538.3 106.1" stroke="#585858" stroke-width="4.6" opacity="0.40"/>
<path d="M562 235.2C563.2 228.9 568 211.2 569.1 197.4C570.3 183.7 570.2 165.4 569 152.6C567.7 139.8 564.1 127.6 561.8 120.6C559.6 113.5 557.8 112.4 555.4 110.3C553 108.1 548.7 108.2 547.4 107.8" stroke="#585858" stroke-width="4.9" opacity="0.63"/>
<path d="M569.9 234.2C571 227.8 574.5 209.1 576.4 195.6C578.2 182.2 581.7 165.7 581.1 153.6C580.5 141.6 576 130 572.8 123.4C569.5 116.8 564.1 116.6 561.6 114C559.1 111.4 558.4 108.7 557.8 107.7" stroke="#585858" stroke-width="4.9" opacity="0.53"/>
<path d="M592.1 197.9C592.2 191.6 593.7 172.5 592.4 160.4C591.2 148.3 587.8 133.1 584.6 125.4C581.4 117.7 576 116.7 573.2 114.2C570.4 111.7 568.5 110.9 567.6 110.2" stroke="#585858" stroke-width="3.3" opacity="0.56"/>
<path d="M586.8 232.5C588.1 226.6 592.8 209.2 594.6 197.3C596.4 185.5 598.6 173 597.6 161.5C596.6 149.9 591.4 135.7 588.7 128C586 120.4 584.2 118.2 581.4 115.3C578.5 112.5 573.4 111.6 571.8 110.9" stroke="#585858" stroke-width="4.9" opacity="0.65"/>
<path d="M593.4 232.2C595 226.5 600.9 209.3 603.1 198C605.2 186.8 607.6 176.1 606.4 164.6C605.3 153.1 599 136.6 596.2 129.1C593.3 121.5 591.9 121.8 589.4 119.2C586.9 116.6 582.6 114.3 581.3 113.3" stroke="#585858" stroke-width="3.3" opacity="0.47"/>
<path d="M609.4 198C610.6 193.1 616.4 178.3 616.7 168.4C617 158.5 614 146.1 611 138.7C608 131.2 602.1 126.8 598.6 123.9C595.1 121 591.3 121.5 589.9 121" stroke="#585858" stroke-width="4.8" opacity="0.41"/>
<path d="M610.1 232.3C611.4 227.1 615.5 211 617.9 201.2C620.3 191.5 623.9 182.6 624.6 173.8C625.4 165 624.6 155.5 622.4 148.4C620.1 141.4 615 135.2 611.3 131.5C607.6 127.8 602.1 127.2 600.2 126.4" stroke="#585858" stroke-width="5.7" opacity="0.68"/>
<path d="M613.1 231.8C614.4 227 617.8 212.2 620.5 202.7C623.2 193.3 628.2 183.5 629.2 175.1C630.2 166.6 629.3 159 626.4 152.1C623.5 145.3 615.5 138.1 611.8 133.9C608.2 129.6 605.7 127.9 604.5 126.8" stroke="#585858" stroke-width="4.3" opacity="0.78"/>
<path d="M615.9 233.9C618.1 229 625.9 213.7 629 204.5C632.1 195.3 633.6 186.3 634.5 178.5C635.3 170.8 635.9 164.2 634 158.1C632.2 152 626.9 145.9 623.2 142C619.5 138 613.7 135.5 611.8 134.2" stroke="#585858" stroke-width="3.8" opacity="0.49"/>
<path d="M621.4 235.9C623.7 231.2 631.4 216.8 635.2 207.8C638.9 198.7 643 189.2 644.1 181.6C645.2 173.9 643.7 167.6 641.7 162.1C639.6 156.6 635.1 151.8 631.9 148.3C628.7 144.8 623.9 142.3 622.3 141" stroke="#585858" stroke-width="4.3" opacity="0.44"/>
<path d="M623.8 237.1C626.6 232.7 636.4 219.1 640.8 210.7C645.3 202.3 649.3 193.6 650.6 186.7C651.8 179.8 650.6 174.9 648.3 169.1C645.9 163.3 639.7 156.1 636.6 151.8C633.5 147.5 631 144.7 629.8 143.3" stroke="#585858" stroke-width="3.9" opacity="0.78"/>
<path d="M625.4 238.2C628.4 233.8 639.3 221 643.7 212.2C648.1 203.4 650.5 192.3 651.8 185.3C653 178.3 652.9 175.5 651.4 170.2C649.8 164.9 645.6 157.2 642.2 153.5C638.9 149.9 632.9 149.2 631.1 148.3" stroke="#585858" stroke-width="5.1" opacity="0.70"/>
<path d="M628.4 243.1C631.5 238.8 641.8 225.1 647.2 216.9C652.6 208.7 658.7 200.2 660.9 193.9C663.1 187.5 662.2 183.8 660.5 178.9C658.8 174.1 654.4 168.4 650.8 164.6C647.2 160.7 640.8 157.2 638.8 155.7" stroke="#585858" stroke-width="4.5" opacity="0.65"/>
<path d="M652.1 217.3C653.9 213.6 661 200.7 663 194.6C664.9 188.5 665.1 185.7 663.9 180.9C662.6 176.1 659.3 169.3 655.6 165.7C651.8 162.2 643.8 160.4 641.5 159.3" stroke="#585858" stroke-width="4.4" opacity="0.64"/>
<path d="M631.3 247C635.1 242.2 648.4 226.3 654.3 218.1C660.2 209.9 664.4 203.2 666.6 197.7C668.8 192.1 669 188.8 667.7 184.5C666.4 180.3 662.6 175.8 658.8 172.4C654.9 169 647.1 165.5 644.7 164.1" stroke="#585858" stroke-width="3.7" opacity="0.44"/>
<path d="M633.8 250.6C637.6 245.9 649.5 229.8 656.5 222.3C663.5 214.8 672.6 210.6 675.8 205.5C678.9 200.4 677 196.3 675.5 191.9C673.9 187.5 670.5 182.6 666.3 179.1C662.1 175.6 652.9 172.2 650.2 170.8" stroke="#585858" stroke-width="5" opacity="0.65"/>
<path d="M662.5 228.1C665.1 224.6 675 212 678.3 206.9C681.5 201.8 683 200.8 682 197.5C681 194.1 676.3 190.2 672.2 186.9C668.2 183.6 660.1 179 657.7 177.4" stroke="#585858" stroke-width="3.5" opacity="0.49"/>
<path d="M667 232.4C669.8 229.2 680.3 218.1 683.8 213.2C687.3 208.4 688.8 206.2 688.1 203.1C687.4 200 683.2 198.1 679.6 194.7C676 191.4 668.6 185 666.4 183.1" stroke="#585858" stroke-width="3.7" opacity="0.62"/>
<path d="M643 261.2C647.2 257.4 660.9 245.3 667.9 238.2C675 231.2 681.8 223.7 685.4 219.2C689 214.6 690.4 214.3 689.6 211C688.9 207.6 684.4 202.7 681 198.9C677.6 195.1 671.2 189.8 669.3 187.9" stroke="#585858" stroke-width="4.2" opacity="0.43"/>
<path d="M645.7 263.3C649.8 259.5 662.6 247.8 670 240.9C677.4 233.9 686.1 226.2 690.1 221.5C694.2 216.8 694.7 215.9 694.2 212.8C693.8 209.6 690.2 205.9 687.4 202.6C684.5 199.3 679 194.6 677.3 193" stroke="#585858" stroke-width="4.4" opacity="0.38"/>
<path d="M648.3 268.2C652.5 264.4 665.8 251.7 673.6 245.4C681.3 239.2 690.8 234.6 694.6 230.8C698.4 227 696.6 226.1 696.2 222.7C695.8 219.2 694.6 214.2 692.4 210.1C690.2 206.1 684.5 200.5 682.9 198.5" stroke="#585858" stroke-width="3.8" opacity="0.51"/>
<path d="M648.9 270.6C653 267.6 666.3 258.6 673.8 252.8C681.4 246.9 690.1 239.5 694.1 235.3C698.2 231.2 698.2 231.6 698.1 227.9C698 224.3 695.6 217.5 693.4 213.5C691.1 209.6 686 205.6 684.6 204" stroke="#585858" stroke-width="4.5" opacity="0.44"/>
<path d="M675 257C678.3 254.8 690.7 247.3 694.9 244.1C699 240.8 699.4 240.8 700 237.5C700.6 234.1 699.7 228 698.4 224C697.1 220 693.4 215.1 692.3 213.3" stroke="#585858" stroke-width="4.7" opacity="0.51"/>
<path d="M650.6 277.1C655.1 274.9 669.6 268.5 677.7 264C685.7 259.5 694.4 254.3 698.8 250.1C703.1 245.8 703.5 242.1 703.7 238.4C703.8 234.7 701.2 231.6 699.9 227.8C698.5 224 696.1 217.8 695.4 215.8" stroke="#585858" stroke-width="3.9" opacity="0.55"/>
<path d="M436.4 228.5C429.2 225.9 407 217.3 393.5 213.2C379.9 209.1 365.5 204.3 355.1 203.8C344.6 203.3 335.7 205.5 330.6 210.1C325.5 214.6 325.1 222.8 324.6 231.1C324 239.3 326.7 254.9 327.2 259.7" stroke="#444" stroke-width="6.1" opacity="0.69"/>
<path d="M505.7 246.2C501.8 245.2 491.8 244.7 482.1 240.3C472.4 235.8 458.8 227.1 447.4 219.4C436 211.7 424.3 202 413.5 194.2C402.8 186.4 392.7 176.4 382.9 172.6C373.1 168.9 363.1 168.1 354.7 171.7C346.3 175.3 336.2 190.4 332.5 194.2" stroke="#444" stroke-width="5.3" opacity="0.58"/>
<path d="M491.1 234.4C487.1 230.5 474.3 219.7 466.6 211.2C459 202.7 452.3 191.9 445.2 183.4C438.1 174.9 431.4 165.9 424.1 160.3C416.7 154.7 409.7 150 401.2 149.9C392.7 149.7 377.8 157.9 373.2 159.5" stroke="#444" stroke-width="4.5" opacity="0.80"/>
<path d="M492.3 205.6C490.6 198.8 484.9 177 481.9 164.6C478.9 152.2 477.6 140.7 474.3 131.1C471.1 121.5 466.7 110.6 462.3 106.9C457.9 103.2 453.2 107 447.9 108.7C442.6 110.4 433.5 115.8 430.6 117.3" stroke="#444" stroke-width="5.2" opacity="0.58"/>
<path d="M456.3 245.8C450.3 246.2 430.5 246.3 420 248.1C409.6 250 402 253.9 393.7 257.1C385.3 260.3 377.7 264.5 369.9 267.3C362.1 270.1 353.1 273.8 346.9 273.7C340.8 273.6 335.2 267.9 332.8 266.7" stroke="#444" stroke-width="6.2" opacity="0.75"/>
<path d="M506.4 246.5C504.3 240.6 498.3 223.4 494.3 211.2C490.2 199.1 485.4 185.9 482 173.8C478.5 161.6 474.2 148.8 473.5 138.4C472.7 127.9 475.6 117.6 477.5 111.4C479.3 105.1 483.2 102.6 484.4 100.8" stroke="#444" stroke-width="5.7" opacity="0.68"/>
<path d="M537.2 209.5C538.5 203.5 543.9 185.4 544.6 173.5C545.4 161.6 545.2 148.6 541.6 138.2C538.1 127.8 528.1 117.6 523.4 111.2C518.7 104.8 515.1 101.9 513.5 100.1" stroke="#444" stroke-width="5" opacity="0.57"/>
<path d="M559.6 236.2C561.1 229.8 567 212 568.7 197.6C570.4 183.2 571.1 162.8 569.8 149.7C568.6 136.6 563.8 125.5 561.1 119C558.4 112.5 556.2 113 553.9 110.7C551.6 108.5 548.5 106.4 547.5 105.6" stroke="#444" stroke-width="4.4" opacity="0.66"/>
<path d="M599.1 196.3C599.5 190.3 602.6 171.8 601.9 160.4C601.1 149.1 597.5 135.8 594.4 128.1C591.3 120.5 586.2 117.3 583.3 114.5C580.4 111.7 578.1 111.7 577 111.2" stroke="#444" stroke-width="6" opacity="0.59"/>
<path d="M622.7 201.9C623.4 197.1 626.1 181.4 626.9 173C627.7 164.6 630.2 157.7 627.5 151.4C624.8 145.1 615.2 139.3 610.9 135.2C606.6 131.1 603.5 128.3 602 126.9" stroke="#444" stroke-width="6" opacity="0.80"/>
<path d="M624.5 238.1C627.2 233.8 636.6 221.4 640.9 212.4C645.2 203.4 648.6 191.4 650.1 184.1C651.6 176.7 651.3 173.3 649.8 168.3C648.4 163.3 644.5 158 641.4 154C638.4 150 633 145.9 631.4 144.3" stroke="#444" stroke-width="6.1" opacity="0.63"/>
<path d="M634.6 251.7C638.5 247.4 651 233.5 658 225.8C665 218 672.9 210.4 676.4 205.4C679.9 200.3 680.3 199.4 679 195.6C677.8 191.8 673.1 185.6 669 182.5C665 179.5 657 178.2 654.6 177.4" stroke="#444" stroke-width="4.6" opacity="0.59"/>
<path d="M672.2 244.5C675.2 241.5 686.1 231.1 690 226.7C694 222.3 695.5 221.7 695.8 218.1C696 214.5 694.2 208.8 691.6 204.9C689 200.9 682.2 196 680.4 194.2" stroke="#444" stroke-width="5.8" opacity="0.53"/>
<path d="M651.5 279.3C655.7 276.7 668.7 268.7 676.6 264.2C684.5 259.7 693.9 255.3 698.8 252.3C703.6 249.2 705.6 249.2 705.8 245.8C706.1 242.4 701.6 236.1 700.3 231.9C699.1 227.6 698.6 222.1 698.3 220.2" stroke="#444" stroke-width="5.2" opacity="0.55"/>
<g filter="url(#bl4)" stroke="none">
<path d="M485 176C492 190 498 215 500 236L494 236C488 215 482 195 485 176Z" fill="#777" opacity=".55"/>
<path d="M536 196C548 192 562 196 566 204C560 218 548 224 538 226Z" fill="#888" opacity=".5"/>
<path d="M572 190C590 186 606 192 612 204C600 216 584 222 572 224Z" fill="#999" opacity=".4"/>
<path d="M640 175C655 185 668 200 672 215C660 225 650 232 640 238C648 215 648 195 640 175Z" fill="#808080" opacity=".5"/>
<path d="M330 250C345 262 380 262 420 248L420 254C380 272 345 276 330 262Z" fill="#888" opacity=".45"/>
<path d="M372 170C380 190 400 212 440 228L436 232C398 220 374 196 372 170Z" fill="#999" opacity=".4"/>
</g>
<path d="M627.9 263.2Q662.9 243.3 698.5 225.9" stroke="#4c4c4c" stroke-width="4.7" opacity="0.66"/>
<path d="M626.9 270.5Q664.3 250.3 700.9 233" stroke="#4c4c4c" stroke-width="5" opacity="0.52"/>
<path d="M635.4 275.7Q669.9 257.4 704 243" stroke="#4c4c4c" stroke-width="4" opacity="0.76"/>
<path d="M631 285.2Q667.6 266.8 705.3 251.5" stroke="#4c4c4c" stroke-width="3.6" opacity="0.68"/>
<path d="M639.6 286.8Q673 271 706 257.5" stroke="#4c4c4c" stroke-width="4.3" opacity="0.80"/>
<path d="M639.9 291.9Q672 276.1 706 263.4" stroke="#4c4c4c" stroke-width="4" opacity="0.63"/>
<path d="M637.9 301.6Q671 286.7 705.7 273.6" stroke="#4c4c4c" stroke-width="4.3" opacity="0.67"/>
<path d="M648.5 309.8Q675.8 296.9 704.5 287.7" stroke="#4c4c4c" stroke-width="3.3" opacity="0.58"/>
<path d="M649.1 316.3Q676 304.4 703.9 295.2" stroke="#4c4c4c" stroke-width="3.4" opacity="0.78"/>
<path d="M653.6 319.1Q677.8 308.5 703.4 300.3" stroke="#4c4c4c" stroke-width="4.7" opacity="0.76"/>
<path d="M656 325.5Q679 315 702.6 308.4" stroke="#4c4c4c" stroke-width="5" opacity="0.47"/>
<path d="M659.3 336Q681.1 326.6 701 321.3" stroke="#4c4c4c" stroke-width="4.1" opacity="0.75"/>
<path d="M664.4 338.4Q683.2 330.1 700.4 326" stroke="#4c4c4c" stroke-width="3.9" opacity="0.57"/>
<path d="M668.5 347.3Q682.7 341.7 698.7 337.4" stroke="#4c4c4c" stroke-width="4.6" opacity="0.74"/>
<path d="M669 353.1Q683.4 346.6 697.6 343.9" stroke="#4c4c4c" stroke-width="4.1" opacity="0.82"/>
<path d="M670.1 360.9Q684.1 355.6 696.1 352.9" stroke="#4c4c4c" stroke-width="3.3" opacity="0.61"/>
<path d="M673.6 369.1Q683.6 364.8 694.2 363" stroke="#4c4c4c" stroke-width="4.8" opacity="0.69"/>
<path d="M672.7 378Q682.1 374.3 691.9 372.5" stroke="#4c4c4c" stroke-width="3.9" opacity="0.76"/>
<path d="M673.7 380Q681.8 376.1 691.2 375" stroke="#4c4c4c" stroke-width="3.5" opacity="0.53"/>
<path d="M674.2 386.9Q681.7 383.2 690 382.7" stroke="#4c4c4c" stroke-width="5" opacity="0.72"/>
<path d="M659.6 253.9L700.8 232.6" stroke="#444" stroke-width="3.7" opacity="0.48"/>
<path d="M663.7 258.7L702.9 239.3" stroke="#444" stroke-width="3.6" opacity="0.46"/>
<path d="M662.9 263.4L704.1 243.6" stroke="#444" stroke-width="3.8" opacity="0.77"/>
<path d="M665.5 275.5L706 257.4" stroke="#444" stroke-width="3.7" opacity="0.50"/>
<path d="M669.2 284.9L706 269.3" stroke="#444" stroke-width="4.3" opacity="0.70"/>
<path d="M665.8 295.1L705.3 278.9" stroke="#444" stroke-width="3.7" opacity="0.58"/>
<path d="M679.2 291.2L705.1 280.7" stroke="#444" stroke-width="3.7" opacity="0.72"/>
<path d="M669.8 307.9L703.9 294.7" stroke="#444" stroke-width="3.8" opacity="0.53"/>
<path d="M672.3 311.7L703.5 299.8" stroke="#444" stroke-width="4" opacity="0.46"/>
<path d="M678.1 320.9L702.1 312.2" stroke="#444" stroke-width="4" opacity="0.50"/>
<path d="M678.8 332.8L700.5 325.3" stroke="#444" stroke-width="4.2" opacity="0.68"/>
<path d="M678.7 336.4L700 329.1" stroke="#444" stroke-width="3.6" opacity="0.70"/>
<path d="M681.2 345.7L698.2 340.2" stroke="#444" stroke-width="4.4" opacity="0.53"/>
<path d="M681.2 352.7L697 347.7" stroke="#444" stroke-width="3.5" opacity="0.46"/>
<path d="M683.2 357.7L695.9 353.8" stroke="#444" stroke-width="4" opacity="0.73"/>
<path d="M681.2 373.2L692.5 370" stroke="#444" stroke-width="4.1" opacity="0.77"/>
<path d="M683 374.5L692 372" stroke="#444" stroke-width="4.1" opacity="0.78"/>
<path d="M681.1 387.6L690 385.4" stroke="#444" stroke-width="4.1" opacity="0.48"/>
<path d="M700 226C700.8 229.2 703.9 239 705 245C706.1 251 706.4 255.3 706.5 262C706.6 268.7 706.2 276.2 705.5 285C704.8 293.8 703.2 305 702 315C700.8 325 699.5 336.5 698 345C696.5 353.5 693.8 362.5 693 366" stroke="#444" stroke-width="6.4" opacity="0.90"/>
<path d="M703 232C704 236.3 708 248.3 709 258C710 267.7 709.7 278.8 709 290C708.3 301.2 706.5 314.7 705 325C703.5 335.3 700.8 347.5 700 352" stroke="#666" stroke-width="3.2" opacity="0.60"/>
<path d="M348.8 289.2C352 307.1 356.9 325.1 363.6 342.9" stroke="#4a4a4a" stroke-width="3.7" opacity="0.49"/>
<path d="M352.1 284.4C354.6 302.6 358.5 320.8 363.9 338.4" stroke="#4a4a4a" stroke-width="3.3" opacity="0.65"/>
<path d="M358 294.2C359.7 310.1 363 326.9 367.8 343.1" stroke="#4a4a4a" stroke-width="4.4" opacity="0.83"/>
<path d="M363.7 301.8C366.7 327.2 372.9 353.4 382 378.2" stroke="#4a4a4a" stroke-width="4.9" opacity="0.47"/>
<path d="M364.9 274.9C364.1 294.2 365.4 312.9 368.8 331.4" stroke="#4a4a4a" stroke-width="3.9" opacity="0.55"/>
<path d="M372.4 300.6C373 316.5 374.8 332.7 377.4 348.1" stroke="#4a4a4a" stroke-width="4.5" opacity="0.72"/>
<path d="M383.5 258.8C377.5 284.6 377.2 313 379.4 340.8" stroke="#4a4a4a" stroke-width="3.8" opacity="0.52"/>
<path d="M380.1 276.9C377.7 295.1 378.3 314.8 380 334.6" stroke="#4a4a4a" stroke-width="4.8" opacity="0.47"/>
<path d="M383.3 290.8C379.7 318.4 381 347.9 384 373.9" stroke="#4a4a4a" stroke-width="4.3" opacity="0.62"/>
<path d="M399.9 256.5C388.9 284.5 385.7 323.8 385.2 358.2" stroke="#4a4a4a" stroke-width="5" opacity="0.50"/>
<path d="M404.9 255C393.6 281.7 391.2 310.2 389.4 338.9" stroke="#4a4a4a" stroke-width="5" opacity="0.50"/>
<path d="M379 299.7C378.6 311.3 378.8 323.1 379.6 334.7" stroke="#444" stroke-width="4.6" opacity="0.79"/>
<path d="M381 305.4C380.6 312.7 380.5 320.1 380.7 327.5" stroke="#444" stroke-width="3.8" opacity="0.41"/>
<path d="M388.2 272.7C385.4 285.7 384 299.6 383.4 313.7" stroke="#444" stroke-width="3.8" opacity="0.43"/>
<path d="M377 278C375.7 288.3 375.3 298.8 375.5 309.4" stroke="#444" stroke-width="4.4" opacity="0.65"/>
<path d="M380.9 284.2C380.2 291.2 379.8 298.3 379.7 305.6" stroke="#444" stroke-width="3.4" opacity="0.54"/>
<path d="M386.8 326C386.4 339.2 386.4 352.5 386.2 365.6" stroke="#444" stroke-width="4" opacity="0.72"/>
<path d="M398.2 268.5C394.4 279.2 391.8 290.5 390.1 302" stroke="#444" stroke-width="3.6" opacity="0.56"/>
<path d="M382.9 277.9C381.4 286.5 380.5 295.4 380.1 304.4" stroke="#444" stroke-width="4.6" opacity="0.48"/>
<path d="M387.5 303.5C386.2 313.4 385.5 323.6 385.2 333.8" stroke="#444" stroke-width="3.8" opacity="0.61"/>
<path d="M396.7 281.4C394.2 291.3 392.3 301.6 390.8 311.9" stroke="#444" stroke-width="4.5" opacity="0.47"/>
<path d="M377.9 299.5C377.4 311.1 377.6 323.2 378.4 335.1" stroke="#444" stroke-width="3.6" opacity="0.65"/>
<path d="M346 270C336 280 330 286 328 290" stroke="#777" stroke-width="3.2" opacity="0.70"/>
<path d="M352 274C342 282 336 287 332 288" stroke="#777" stroke-width="3.2" opacity="0.70"/>
<path d="M340 262C330 268 324 266 320 256" stroke="#666" stroke-width="3.2" opacity="0.70"/>
<path d="M341.9 275.8C339.4 273.5 329.9 267.6 326.6 262C323.4 256.4 323.5 249.2 322.3 242.1C321.2 234.9 319.1 226.3 319.7 218.9C320.3 211.6 322.1 204.2 325.8 197.8C329.4 191.4 334.4 187.1 341.6 180.4C348.7 173.7 358 165.2 368.7 157.5C379.3 149.8 393.7 141.4 405.4 134.1C417 126.8 426.9 119.1 438.7 113.6C450.4 108.2 464.8 104.4 475.7 101.5C486.7 98.6 495.7 96.4 504.5 96.2C513.2 95.9 518.6 97 528.3 99.8C537.9 102.7 551.5 109 562.5 113.2C573.4 117.4 582.2 119.5 594.1 125.2C605.9 130.9 623.5 139.7 633.4 147.5C643.4 155.3 646 164.6 653.8 172.1C661.7 179.7 673.6 184.5 680.5 193C687.3 201.4 690.3 211.8 694.7 222.7C699.1 233.6 704.7 252.3 706.7 258.2" stroke="#666" stroke-width="3.7" opacity="0.60"/>
<path d="M330.8 243.6C330.1 239.4 325.9 225.8 326.6 218.4C327.2 211.1 330.7 205.2 334.7 199.5C338.6 193.7 343.3 190.1 350.3 183.8C357.4 177.6 366.7 168.9 376.8 161.9C386.9 154.9 399.9 148.7 411.2 141.8C422.5 134.9 433.5 125.8 444.6 120.6C455.7 115.4 467.7 113.6 477.8 110.6C487.8 107.6 496.4 102.8 504.9 102.4C513.3 102 524.6 107.3 528.5 108.3" stroke="#4a4a4a" stroke-width="5.3" opacity="0.79"/>
<path d="M504 95C508.6 96.3 522.1 99.4 531.3 102.4C540.6 105.4 549.1 109.2 559.7 113.1C570.3 117 583.1 119.6 594.7 125.8C606.4 131.9 620.1 141.5 629.5 149.8C638.9 158 643.3 167.8 651 175.2C658.8 182.6 668.7 186.6 676 194.2C683.2 201.9 691.5 216.7 694.7 221.2" stroke="#4a4a4a" stroke-width="5.4" opacity="0.74"/>
<path d="M612 97C628 112 640 135 646 158" stroke="#777" stroke-width="3.2" opacity="0.75"/>
<path d="M651 126C660 140 664 158 661 176" stroke="#777" stroke-width="3.2" opacity="0.75"/>
<path d="M690 174C696 184 697 194 694 202" stroke="#777" stroke-width="3.2" opacity="0.75"/>
<g filter="url(#bl4)" stroke="none">
<path d="M396 262C404 262 404 300 398 345L390 345C388 300 390 270 396 262Z" fill="#bdbdbd" opacity=".5"/>
<path d="M479 388C488 388 495 400 497 420C498 445 494 468 490 484L483 482C487 462 488 430 484 410C482 400 479 394 475 392Z" fill="#858585" opacity=".62"/>
<path d="M526 392C523 420 527 450 537 478L545 474C537 450 533 420 533 396Z" fill="#bbb" opacity=".4"/>
<path d="M530 380C527 392 529 404 534 412L550 404C546 396 548 388 552 380Z" fill="#aaa" opacity=".5"/>
<path d="M448 421C456 424 466 423 474 419L473 425C465 429 455 429 448 426Z" fill="#aaa" opacity=".45"/>
<path d="M560 414C578 420 600 416 616 406L618 411C602 422 576 426 560 419Z" fill="#bbb" opacity=".35"/>
<path d="M540 380C560 372 600 366 636 372L640 380C610 376 570 380 546 390Z" fill="#c4c4c4" opacity=".45"/>
<path d="M400 388C420 390 450 392 478 392L476 398C450 398 420 396 402 394Z" fill="#c4c4c4" opacity=".45"/>
<path d="M496 644L512 647L542 645L569 636L598 612L625 579L646 553L655 539L657 556L640 590L610 628L580 652L556 666L530 666L508 657Z" fill="#707070" opacity=".4"/>
<path d="M530 656L578 658L614 636L640 600L636 630L610 664L576 682L548 678Z" fill="#999" opacity=".22"/>
<path d="M466 553C480 546 492 539 500 537.500C506 538 510 541 516 541C522 541 526 537 531 536.500C545 540 562 547 579 551C560 555 540 556 520 555.500C500 556 480 555 466 553Z" fill="#929292" opacity=".7"/>
<path d="M470 556C490 558 550 558 574 553C566 566 546 578 522 580C500 580 482 570 470 556Z" fill="#b4b4b4" opacity=".6"/>
<path d="M484 573C500 587 540 589 562 569L566 575C545 597 500 595 480 579Z" fill="#a8a8a8" opacity=".5"/>
<path d="M388 400C394 440 398 480 420 536L440 572L432 574C408 540 390 480 386 430Z" fill="#c0c0c0" opacity=".4"/>
<path d="M664 440C664 490 650 540 620 580L596 606L610 608C650 574 668 520 670 450Z" fill="#b8b8b8" opacity=".45"/>
<path d="M692 384C704 376 710 380 708 396C704 420 698 440 690 452C682 452 680 440 686 426C680 414 682 398 692 384Z" fill="#a8a8a8" opacity=".55"/>
<path d="M486 494C496 504 506 510 513 510C522 510 534 504 544 494L540 504C530 510 520 514 512 514C504 514 494 508 488 502Z" fill="#aaa" opacity=".45"/>
</g>
<ellipse cx="522" cy="566" rx="24" ry="6" fill="#fff" opacity=".75" filter="url(#bl2)"/>
<path d="M386.5 381C386.3 385.8 385.6 400.3 385.5 410C385.4 419.7 385.2 430.7 386 439C386.8 447.3 388.8 454.8 390 460C391.2 465.2 391.2 463.3 393 470C394.8 476.7 396.4 488.3 400.6 500C404.8 511.7 412 526.9 418.4 540C424.8 553.1 430.6 565.6 439 578.4C447.4 591.2 460.1 606.9 468.5 616.7C476.9 626.5 481.8 632.7 489.2 637.4C496.6 642.1 508.9 643.7 512.8 645" stroke="#484848" stroke-width="7.8" opacity="0.95"/>
<path d="M389 390C389 398.3 387.7 424.2 389 440C390.3 455.8 392.5 469.7 397 485C401.5 500.3 412.8 524.2 416 532" stroke="#777" stroke-width="3.7" opacity="0.60"/>
<path d="M512.8 645C517.7 644.7 532.9 645 542.3 643.3C551.6 641.5 559.5 639.9 568.9 634.5C578.2 629.1 589 620.1 598.4 610.8C607.8 601.4 617.1 588.2 625 578.4C632.9 568.6 640.6 558.9 645.6 551.8C650.6 544.7 653.4 538.6 655 536" stroke="#555" stroke-width="6" opacity="0.90"/>
<path d="M675 388C674 393.3 670.4 408.4 669 420C667.6 431.6 667.3 444.2 666.5 457.5C665.7 470.8 665.9 486.9 664 500C662.1 513.1 656.5 530 655 536" stroke="#5a5a5a" stroke-width="5.5" opacity="0.85"/>
<path d="M677 392C676 398.3 672.3 417 671 430C669.7 443 669.8 457.5 669 470C668.2 482.5 667.8 493.7 666 505C664.2 516.3 659.3 532.5 658 538" stroke="#888" stroke-width="3.7" opacity="0.60"/>
<path d="M486.3 629.6L486.1 637.1" stroke="#484848" stroke-width="4.1" opacity="0.63"/>
<path d="M495.3 632.8L495.7 641.5" stroke="#484848" stroke-width="4.1" opacity="0.80"/>
<path d="M504.6 636.3L505.3 645.6" stroke="#484848" stroke-width="4.1" opacity="0.57"/>
<path d="M514.4 641.5L514.8 647.3" stroke="#484848" stroke-width="4.1" opacity="0.56"/>
<path d="M523.8 639.9L525.4 647.4" stroke="#484848" stroke-width="4.1" opacity="0.60"/>
<path d="M534.6 640.2L535.8 646.2" stroke="#484848" stroke-width="4.1" opacity="0.72"/>
<path d="M544.2 638.7L546 644.8" stroke="#484848" stroke-width="4.1" opacity="0.52"/>
<path d="M554.2 635.9L555.4 641.5" stroke="#484848" stroke-width="4.1" opacity="0.80"/>
<path d="M562.6 631.3L565.1 639.5" stroke="#484848" stroke-width="4.1" opacity="0.53"/>
<path d="M573 626.9L574.8 632.7" stroke="#484848" stroke-width="4.1" opacity="0.71"/>
<path d="M583 618.6L585.3 624.4" stroke="#484848" stroke-width="4.1" opacity="0.54"/>
<path d="M593.9 610.7L595.7 615.6" stroke="#484848" stroke-width="4.1" opacity="0.65"/>
<path d="M602.7 599.3L605.8 605.9" stroke="#484848" stroke-width="4.1" opacity="0.54"/>
<path d="M612.4 586.9L615.5 595.2" stroke="#484848" stroke-width="4.1" opacity="0.53"/>
<path d="M621.2 576.1L624.8 583.3" stroke="#484848" stroke-width="4.1" opacity="0.67"/>
<path d="M630.2 566.8L632.8 571.9" stroke="#484848" stroke-width="4.1" opacity="0.58"/>
<path d="M637.6 555.3L641.4 562.3" stroke="#484848" stroke-width="4.1" opacity="0.62"/>
<path d="M645.9 545.2L649.6 551.7" stroke="#484848" stroke-width="4.1" opacity="0.59"/>
<path d="M597.5 619.4L591.1 629.2" stroke="#6a6a6a" stroke-width="3.2" opacity="0.20"/>
<path d="M558.9 644.6L547.6 665.9" stroke="#6a6a6a" stroke-width="3.2" opacity="0.32"/>
<path d="M545.5 647L538.7 657.7" stroke="#6a6a6a" stroke-width="3.2" opacity="0.43"/>
<path d="M518.5 648L509.6 663.4" stroke="#6a6a6a" stroke-width="3.2" opacity="0.26"/>
<path d="M611.8 601.4L606 609.9" stroke="#6a6a6a" stroke-width="3.2" opacity="0.38"/>
<path d="M602.9 614.4L589.3 640.7" stroke="#6a6a6a" stroke-width="3.2" opacity="0.46"/>
<path d="M596.1 618.5L588.6 630.8" stroke="#6a6a6a" stroke-width="3.2" opacity="0.25"/>
<path d="M576.4 635.5L564.9 657.2" stroke="#6a6a6a" stroke-width="3.2" opacity="0.22"/>
<path d="M537.3 648.4L531.4 657.2" stroke="#6a6a6a" stroke-width="3.2" opacity="0.33"/>
<path d="M535.6 648.3L526.2 665.1" stroke="#6a6a6a" stroke-width="3.2" opacity="0.22"/>
<path d="M644.1 564L636.5 576.7" stroke="#6a6a6a" stroke-width="3.2" opacity="0.48"/>
<path d="M577.5 634.6L565.1 658.2" stroke="#6a6a6a" stroke-width="3.2" opacity="0.45"/>
<path d="M578.4 634.8L570.5 647.9" stroke="#6a6a6a" stroke-width="3.2" opacity="0.20"/>
<path d="M638.3 571.5L630 585.7" stroke="#6a6a6a" stroke-width="3.2" opacity="0.47"/>
<path d="M597.1 619.1L583.2 646.2" stroke="#6a6a6a" stroke-width="3.2" opacity="0.47"/>
<path d="M693 365C694.3 364.4 698.3 362 701 361.5C703.7 361 706.6 359.9 709 362C711.4 364.1 714.6 368.3 715.5 374C716.4 379.7 715.2 388.3 714.5 396C713.8 403.7 712.6 412.7 711 420C709.4 427.3 707.3 433.8 705 440C702.7 446.2 699.7 452.8 697 457.5C694.3 462.2 691.8 465.6 689 468C686.2 470.4 683.2 471.6 680 472C676.8 472.4 671.7 470.8 670 470.5" stroke="#555" stroke-width="5.5" opacity="0.90"/>
<path d="M699 372C700.3 372 705.3 369 707 372C708.7 375 709.3 382.3 709 390C708.7 397.7 706.8 409.7 705 418C703.2 426.3 700.5 433.7 698 440C695.5 446.3 691.3 453.3 690 456" stroke="#888" stroke-width="3.7" opacity="0.70"/>
<path d="M690 392C688.8 394 683.7 400 683 404C682.3 408 684.5 412.7 686 416C687.5 419.3 691.7 420.3 692 424C692.3 427.7 689.5 433.7 688 438C686.5 442.3 683.8 448 683 450" stroke="#555" stroke-width="6" opacity="0.85"/>
<path d="M694 388C693 390 688.7 396 688 400C687.3 404 688.5 408.7 690 412C691.5 415.3 696.3 416 697 420C697.7 424 694.5 433.3 694 436" stroke="#777" stroke-width="11.5" opacity="0.45"/>
<path d="M686 416C687.3 415.3 692 414 694 412C696 410 697.3 405.3 698 404" stroke="#888" stroke-width="3.7" opacity="0.70"/>
<path d="M384 392C383.3 392.2 380.5 391.7 380 393C379.5 394.3 380.2 397.5 381 400C381.8 402.5 384.3 406.7 385 408" stroke="#555" stroke-width="5.1" opacity="0.90"/>
<path d="M391 385.3C390.2 384.2 393.6 379.4 395 377C396.4 374.6 397.7 372.8 399.5 371C401.3 369.2 402.8 367.1 406 366.5C409.2 365.9 413.4 367 418.6 367.5C423.8 368 430.6 368.9 437 369.5C443.4 370.1 451.4 370.6 456.8 371C462.2 371.4 466.1 370.8 469.3 372C472.5 373.2 474.2 375.6 476 378C477.8 380.4 480.1 384.5 479.8 386.2C479.5 387.9 477.8 388 474 388C470.2 388 462.9 387 456.8 386.2C450.8 385.4 444.1 384 437.7 383.4C431.3 382.8 425 382.4 418.6 382.4C412.2 382.4 404.1 382.9 399.5 383.4C394.9 383.9 391.8 386.4 391 385.3Z" fill="#505050" opacity=".8" filter="url(#bl1)"/>
<path d="M529 365C531.1 362.1 536.6 365.4 542.6 364.3C548.6 363.2 557.6 360.8 565.1 358.6C572.6 356.4 580.9 353 587.7 351.3C594.5 349.6 601.1 348.7 605.8 348.5C610.5 348.3 612.2 348.4 616 350.2C619.8 352 624.4 356.4 628.3 359.2C632.2 362 638.9 365.3 639.6 367C640.4 368.7 635.8 369.5 632.8 369.3C629.8 369.1 625.7 367.1 621.6 366C617.5 364.9 613.6 362.9 608 363C602.4 363.1 594.9 364.9 587.7 366.5C580.6 368.1 572.6 370.7 565.1 372.7C557.6 374.7 548.5 376.9 542.6 378.4C536.8 379.9 532.3 383.7 530 381.5C527.7 379.3 526.9 367.9 529 365Z" fill="#505050" opacity=".8" filter="url(#bl1)"/>
<path d="M417.9 369.4L432.3 371.9" stroke="#2c2c2c" stroke-width="4.5" opacity="0.77"/>
<path d="M464.2 374.3L474.4 378.2" stroke="#2c2c2c" stroke-width="5" opacity="0.84"/>
<path d="M454.8 372.2L472.3 376.5" stroke="#2c2c2c" stroke-width="5" opacity="0.43"/>
<path d="M403 377.7L415.3 374.8" stroke="#2c2c2c" stroke-width="4.4" opacity="0.56"/>
<path d="M403.4 376.4L415.6 374.2" stroke="#2c2c2c" stroke-width="6" opacity="0.66"/>
<path d="M399.6 371.9L405.9 370.1" stroke="#2c2c2c" stroke-width="5.7" opacity="0.76"/>
<path d="M424.6 369.9L442.4 372.8" stroke="#2c2c2c" stroke-width="4.1" opacity="0.68"/>
<path d="M470.6 382.3L476.8 383.6" stroke="#2c2c2c" stroke-width="5.6" opacity="0.50"/>
<path d="M457.3 372.7L471.9 376.4" stroke="#2c2c2c" stroke-width="4.5" opacity="0.53"/>
<path d="M435.5 374.9L455.9 376.5" stroke="#2c2c2c" stroke-width="5.8" opacity="0.64"/>
<path d="M453.1 382.2L467.1 381.1" stroke="#2c2c2c" stroke-width="4.4" opacity="0.50"/>
<path d="M427.7 377.9L444.5 377.7" stroke="#2c2c2c" stroke-width="5.7" opacity="0.49"/>
<path d="M472.1 381.5L478 383.3" stroke="#2c2c2c" stroke-width="5.9" opacity="0.82"/>
<path d="M396.3 380.8L403 374.9" stroke="#2c2c2c" stroke-width="5.1" opacity="0.50"/>
<path d="M395.7 382.5L403 375.6" stroke="#2c2c2c" stroke-width="5.2" opacity="0.55"/>
<path d="M401.2 374.2L412.2 371.9" stroke="#bbb" stroke-width="3.7" opacity="0.50"/>
<path d="M403 374L413.4 372.4" stroke="#bbb" stroke-width="3.7" opacity="0.50"/>
<path d="M451.2 379.8L468.8 380" stroke="#bbb" stroke-width="3.7" opacity="0.50"/>
<path d="M534.5 370.7L557.7 365.6" stroke="#2c2c2c" stroke-width="4.9" opacity="0.64"/>
<path d="M613.8 354.9L626.1 359.4" stroke="#2c2c2c" stroke-width="3.9" opacity="0.71"/>
<path d="M570.8 359.7L599.9 353.5" stroke="#2c2c2c" stroke-width="5.3" opacity="0.78"/>
<path d="M553.5 373.2L566.4 366.7" stroke="#2c2c2c" stroke-width="4.1" opacity="0.45"/>
<path d="M615.6 354.8L629.8 361.3" stroke="#2c2c2c" stroke-width="4.2" opacity="0.67"/>
<path d="M619 362.3L631.4 366.1" stroke="#2c2c2c" stroke-width="4.5" opacity="0.44"/>
<path d="M599.5 350.5L613.4 351.5" stroke="#2c2c2c" stroke-width="4.2" opacity="0.51"/>
<path d="M534.5 368L548.2 366.8" stroke="#2c2c2c" stroke-width="4.3" opacity="0.53"/>
<path d="M632 364.4L639 367" stroke="#2c2c2c" stroke-width="3.9" opacity="0.46"/>
<path d="M568.3 368.1L593.2 359.3" stroke="#2c2c2c" stroke-width="5.3" opacity="0.50"/>
<path d="M596.5 362.9L612.3 358.6" stroke="#2c2c2c" stroke-width="4.5" opacity="0.68"/>
<path d="M626.3 364.1L634.8 366.4" stroke="#2c2c2c" stroke-width="3.9" opacity="0.71"/>
<path d="M546 375L566.3 366.7" stroke="#2c2c2c" stroke-width="5.5" opacity="0.60"/>
<path d="M625.2 362.8L638.4 367.8" stroke="#2c2c2c" stroke-width="5.9" opacity="0.56"/>
<path d="M620.6 360.6L633.3 365.4" stroke="#2c2c2c" stroke-width="4.6" opacity="0.71"/>
<path d="M608.2 350.1L622.6 355" stroke="#2c2c2c" stroke-width="3.9" opacity="0.55"/>
<path d="M546 378.1L559.7 370.5" stroke="#2c2c2c" stroke-width="4.3" opacity="0.58"/>
<path d="M625.1 364.5L633.9 366.6" stroke="#2c2c2c" stroke-width="5.3" opacity="0.62"/>
<path d="M584.3 363.5L605.1 357.2" stroke="#bbb" stroke-width="3.7" opacity="0.50"/>
<path d="M589.1 359.4L610.9 355.6" stroke="#bbb" stroke-width="3.7" opacity="0.50"/>
<path d="M612.4 354.7L620.2 356.2" stroke="#bbb" stroke-width="3.7" opacity="0.50"/>
<path d="M615.1 358L625.7 361" stroke="#bbb" stroke-width="3.7" opacity="0.50"/>
<path d="M528.3 381.1L527.2 364.4" stroke="#444" stroke-width="4.1" opacity="0.58"/>
<path d="M529.9 379.4L529.3 363.6" stroke="#444" stroke-width="4.1" opacity="0.44"/>
<path d="M465 385L460 371.9" stroke="#444" stroke-width="4.1" opacity="0.52"/>
<path d="M466.8 384.8L461.8 370.1" stroke="#444" stroke-width="4.1" opacity="0.72"/>
<path d="M624 364L634 369" stroke="#666" stroke-width="3.7" opacity="0.60"/>
<path d="M398 384L391 388" stroke="#777" stroke-width="3.7" opacity="0.55"/>
<clipPath id="teL"><path d="M406.2 408.2C405.3 406.7 410.4 404.9 413 403.5C415.6 402.1 417.7 401 421.5 399.6C425.3 398.2 431.5 396.2 435.8 395.3C440.1 394.4 443.5 394 447.3 394.4C451.1 394.8 455.1 395.9 458.8 397.7C462.5 399.5 466.4 402.8 469.3 405.3C472.2 407.9 477.3 411.1 476 413C474.7 414.9 466.4 415.7 461.6 416.8C456.8 417.9 452.1 419.5 447.3 419.7C442.5 419.9 437.8 419 433 417.8C428.2 416.6 423.1 414.1 418.6 412.5C414.1 410.9 407.1 409.7 406.2 408.2Z"/></clipPath>
<g clip-path="url(#teL)">
<rect x="396.4" y="374" width="100" height="60" fill="#f6f6f6"/>
<ellipse cx="409.2" cy="408.2" rx="8" ry="9" fill="#bbb" opacity=".6" filter="url(#bl2)"/>
<ellipse cx="473" cy="413" rx="8" ry="9" fill="#bbb" opacity=".6" filter="url(#bl2)"/>
<ellipse cx="446.4" cy="404" rx="14.5" ry="14" fill="#d9d9d9" stroke="#2c2c2c" stroke-width="10.1"/>
<path d="M448.3 398.7L450.2 393.3" stroke="#3a3a3a" stroke-width="4.6" opacity="0.75"/>
<path d="M448.2 411.2L448.9 414.4" stroke="#3a3a3a" stroke-width="4.6" opacity="0.75"/>
<path d="M449.1 409.5L451.8 415" stroke="#3a3a3a" stroke-width="4.6" opacity="0.75"/>
<path d="M442.3 407.4L437.7 411.2" stroke="#3a3a3a" stroke-width="4.6" opacity="0.75"/>
<path d="M441.3 399.3L437.3 395.7" stroke="#3a3a3a" stroke-width="4.6" opacity="0.75"/>
<path d="M451.1 410.2L453.5 413.4" stroke="#3a3a3a" stroke-width="4.6" opacity="0.75"/>
<path d="M449.9 409.3L453.1 414.2" stroke="#3a3a3a" stroke-width="4.6" opacity="0.75"/>
<path d="M438.9 406.5L435 407.8" stroke="#3a3a3a" stroke-width="4.6" opacity="0.75"/>
<path d="M444.5 409.3L442.7 414.4" stroke="#3a3a3a" stroke-width="4.6" opacity="0.75"/>
<path d="M453.9 403.4L459.7 402.9" stroke="#3a3a3a" stroke-width="4.6" opacity="0.75"/>
<path d="M443.3 408.4L440 413.2" stroke="#3a3a3a" stroke-width="4.6" opacity="0.75"/>
<path d="M450.3 410.7L452.3 414.2" stroke="#3a3a3a" stroke-width="4.6" opacity="0.75"/>
<path d="M444 408.6L440.3 415.6" stroke="#3a3a3a" stroke-width="4.6" opacity="0.75"/>
<path d="M448.8 397.8L451.2 391.7" stroke="#3a3a3a" stroke-width="4.6" opacity="0.75"/>
<path d="M451.8 403.4L458.4 402.7" stroke="#3a3a3a" stroke-width="4.6" opacity="0.75"/>
<path d="M450 410.5L452.5 415.2" stroke="#3a3a3a" stroke-width="4.6" opacity="0.75"/>
<path d="M444.9 410.3L443.7 415" stroke="#3a3a3a" stroke-width="4.6" opacity="0.75"/>
<path d="M451 406.3L458.4 410" stroke="#3a3a3a" stroke-width="4.6" opacity="0.75"/>
<path d="M451.6 402.1L457.8 399.9" stroke="#3a3a3a" stroke-width="4.6" opacity="0.75"/>
<ellipse cx="446.4" cy="404" rx="9" ry="8.7" fill="none" stroke="#444" stroke-width="5.5" opacity=".7"/>
<circle cx="447.3" cy="401" r="4.6" fill="#141414"/>
<path d="M447.3 401L446.1 415" stroke="#222" stroke-width="9.2" opacity=".85"/>
<path d="M406.2 408.2C407.3 407.4 410.4 404.9 413 403.5C415.6 402.1 417.7 401 421.5 399.6C425.3 398.2 431.5 396.2 435.8 395.3C440.1 394.4 443.5 394 447.3 394.4C451.1 394.8 455.1 395.9 458.8 397.7C462.5 399.5 466.4 402.8 469.3 405.3C472.2 407.9 474.9 411.7 476 413" fill="none" stroke="#1e1e1e" stroke-width="9" opacity=".5"/>
<path d="M406.2 408.2C408.3 408.9 414.1 410.9 418.6 412.5C423.1 414.1 428.2 416.6 433 417.8C437.8 419 442.5 419.9 447.3 419.7C452.1 419.5 456.8 417.9 461.6 416.8C466.4 415.7 473.6 413.6 476 413" fill="none" stroke="#777" stroke-width="3" opacity=".35"/>
<ellipse cx="446" cy="410.5" rx="3.8" ry="3.8" fill="#fff" opacity="0.85"/>
<ellipse cx="443" cy="398" rx="1.3" ry="1.3" fill="#fff" opacity="0.9"/>
</g>
<path d="M406.2 408.2C407.3 407.4 410.4 404.9 413 403.5C415.6 402.1 417.7 401 421.5 399.6C425.3 398.2 431.5 396.2 435.8 395.3C440.1 394.4 443.5 394 447.3 394.4C451.1 394.8 455.1 395.9 458.8 397.7C462.5 399.5 466.4 402.8 469.3 405.3C472.2 407.9 474.9 411.7 476 413" stroke="#1c1c1c" stroke-width="13.8" opacity="0.97"/>
<path d="M404 406.5C405.3 405.4 409.1 401.8 412 400C414.9 398.2 417.5 397.1 421.5 395.8C425.5 394.5 431.5 392.7 435.8 392C440.1 391.3 443 391 447.3 391.5C451.6 392 457.7 393.2 461.6 394.8C465.6 396.4 468.1 398.8 471 401C473.9 403.2 477.5 407 478.8 408.2" stroke="#555" stroke-width="4.6" opacity="0.85"/>
<path d="M406.2 408.2C408.3 408.9 414.1 410.9 418.6 412.5C423.1 414.1 428.2 416.6 433 417.8C437.8 419 442.5 419.9 447.3 419.7C452.1 419.5 456.8 417.9 461.6 416.8C466.4 415.7 473.6 413.6 476 413" stroke="#4a4a4a" stroke-width="5.5" opacity="0.85"/>
<path d="M409.2 406.2L404.6 404.5" stroke="#333" stroke-width="5.1" opacity="0.80"/>
<path d="M415.6 402.3L411.7 399.1" stroke="#333" stroke-width="5.1" opacity="0.80"/>
<path d="M423.9 398.9L419.9 395.5" stroke="#333" stroke-width="5.1" opacity="0.80"/>
<path d="M436.2 395.3L432.1 392.2" stroke="#333" stroke-width="5.1" opacity="0.80"/>
<path d="M446.2 394.5L442.6 391.2" stroke="#333" stroke-width="5.1" opacity="0.80"/>
<path d="M413 411.1L410 416.1" stroke="#555" stroke-width="3.7" opacity="0.75"/>
<path d="M420.8 413.8L418.1 418.2" stroke="#555" stroke-width="3.7" opacity="0.75"/>
<path d="M429.4 417L427.3 420.3" stroke="#555" stroke-width="3.7" opacity="0.75"/>
<path d="M438 419L436 422.2" stroke="#555" stroke-width="3.7" opacity="0.75"/>
<path d="M446.6 420.1L443.6 425.1" stroke="#555" stroke-width="3.7" opacity="0.75"/>
<clipPath id="teR"><path d="M549.3 408.8C547.3 407.6 551.3 404.9 553 403C554.7 401.1 556.5 399.6 559.5 397.5C562.5 395.4 566.7 391.9 570.8 390.2C574.9 388.5 579.6 387.7 584.3 387.4C589 387.1 594.9 387.6 599 388.5C603.1 389.4 605.7 391.5 609.1 393C612.5 394.5 618.1 396.4 619.3 397.5C620.4 398.6 618.2 398.5 616 399.8C613.8 401.1 609.4 403.7 605.8 405.4C602.2 407.1 598.6 408.9 594.5 410C590.4 411.1 585.9 412.1 581 412.2C576.1 412.3 570.4 411.1 565.1 410.5C559.8 409.9 551.3 410.1 549.3 408.8Z"/></clipPath>
<g clip-path="url(#teR)">
<rect x="536" y="368.5" width="100" height="60" fill="#f6f6f6"/>
<ellipse cx="552.3" cy="408.8" rx="8" ry="9" fill="#bbb" opacity=".6" filter="url(#bl2)"/>
<ellipse cx="616.3" cy="397.5" rx="8" ry="9" fill="#bbb" opacity=".6" filter="url(#bl2)"/>
<ellipse cx="586" cy="398.5" rx="14.5" ry="13.5" fill="#d9d9d9" stroke="#2c2c2c" stroke-width="10.1"/>
<path d="M589.8 404.3L592.9 409" stroke="#3a3a3a" stroke-width="4.6" opacity="0.75"/>
<path d="M580.1 395.1L575.9 392.6" stroke="#3a3a3a" stroke-width="4.6" opacity="0.75"/>
<path d="M579.4 401.5L574.3 403.9" stroke="#3a3a3a" stroke-width="4.6" opacity="0.75"/>
<path d="M579.8 396.9L573.3 395.3" stroke="#3a3a3a" stroke-width="4.6" opacity="0.75"/>
<path d="M582.8 402.9L578.6 408.5" stroke="#3a3a3a" stroke-width="4.6" opacity="0.75"/>
<path d="M585.1 405.1L584.2 411.3" stroke="#3a3a3a" stroke-width="4.6" opacity="0.75"/>
<path d="M591.9 401.3L597.4 403.9" stroke="#3a3a3a" stroke-width="4.6" opacity="0.75"/>
<path d="M592.5 395.5L596.6 393.6" stroke="#3a3a3a" stroke-width="4.6" opacity="0.75"/>
<path d="M593.8 398.6L600.1 398.7" stroke="#3a3a3a" stroke-width="4.6" opacity="0.75"/>
<path d="M588.1 403.9L590.1 409.1" stroke="#3a3a3a" stroke-width="4.6" opacity="0.75"/>
<path d="M591 404.1L594.3 407.9" stroke="#3a3a3a" stroke-width="4.6" opacity="0.75"/>
<path d="M590 403L593.2 406.7" stroke="#3a3a3a" stroke-width="4.6" opacity="0.75"/>
<path d="M592.4 394.3L597.5 390.9" stroke="#3a3a3a" stroke-width="4.6" opacity="0.75"/>
<path d="M591.8 395.5L596.8 393" stroke="#3a3a3a" stroke-width="4.6" opacity="0.75"/>
<path d="M583.7 394L580.3 387.4" stroke="#3a3a3a" stroke-width="4.6" opacity="0.75"/>
<path d="M580.1 393.8L575.5 390.1" stroke="#3a3a3a" stroke-width="4.6" opacity="0.75"/>
<path d="M590.4 401.5L595.2 404.9" stroke="#3a3a3a" stroke-width="4.6" opacity="0.75"/>
<path d="M584.2 394L581.1 386.3" stroke="#3a3a3a" stroke-width="4.6" opacity="0.75"/>
<path d="M590.3 395.5L597.2 390.8" stroke="#3a3a3a" stroke-width="4.6" opacity="0.75"/>
<ellipse cx="586" cy="398.5" rx="9" ry="8.4" fill="none" stroke="#444" stroke-width="5.5" opacity=".7"/>
<circle cx="584.8" cy="396.5" r="5" fill="#141414"/>
<path d="M584.8 396.5L586 410" stroke="#222" stroke-width="9.2" opacity=".85"/>
<path d="M549.3 408.8C549.9 407.8 551.3 404.9 553 403C554.7 401.1 556.5 399.6 559.5 397.5C562.5 395.4 566.7 391.9 570.8 390.2C574.9 388.5 579.6 387.7 584.3 387.4C589 387.1 594.9 387.6 599 388.5C603.1 389.4 605.7 391.5 609.1 393C612.5 394.5 617.6 396.8 619.3 397.5" fill="none" stroke="#1e1e1e" stroke-width="9" opacity=".5"/>
<path d="M549.3 408.8C551.9 409.1 559.8 409.9 565.1 410.5C570.4 411.1 576.1 412.3 581 412.2C585.9 412.1 590.4 411.1 594.5 410C598.6 408.9 602.2 407.1 605.8 405.4C609.4 403.7 613.8 401.1 616 399.8C618.2 398.5 618.8 397.9 619.3 397.5" fill="none" stroke="#777" stroke-width="3" opacity=".35"/>
<ellipse cx="583.6" cy="395" rx="1.7" ry="1.7" fill="#fff" opacity="1"/>
<ellipse cx="589" cy="404" rx="2.6" ry="2.6" fill="#fff" opacity="0.6"/>
</g>
<path d="M549.3 408.8C549.9 407.8 551.3 404.9 553 403C554.7 401.1 556.5 399.6 559.5 397.5C562.5 395.4 566.7 391.9 570.8 390.2C574.9 388.5 579.6 387.7 584.3 387.4C589 387.1 594.9 387.6 599 388.5C603.1 389.4 605.7 391.5 609.1 393C612.5 394.5 617.6 396.8 619.3 397.5" stroke="#1c1c1c" stroke-width="13.8" opacity="0.97"/>
<path d="M550 405C551.2 403.6 553.9 399.3 557.2 396.4C560.5 393.5 565.3 389.5 569.6 387.4C573.9 385.3 578.7 384.5 583.2 384C587.7 383.5 592.6 383.9 596.7 384.6C600.8 385.4 604.2 386.7 608 388.5C611.8 390.3 615.3 393.6 619.3 395.3C623.2 397 629.6 398.1 631.7 398.7" stroke="#555" stroke-width="4.6" opacity="0.85"/>
<path d="M549.3 408.8C551.9 409.1 559.8 409.9 565.1 410.5C570.4 411.1 576.1 412.3 581 412.2C585.9 412.1 590.4 411.1 594.5 410C598.6 408.9 602.2 407.1 605.8 405.4C609.4 403.7 613.8 401.1 616 399.8C618.2 398.5 618.8 397.9 619.3 397.5" stroke="#4a4a4a" stroke-width="5.5" opacity="0.85"/>
<path d="M614.9 395.5L630.1 397.4" stroke="#333" stroke-width="5.1" opacity="0.80"/>
<path d="M606 391.6L619.5 394.2" stroke="#333" stroke-width="5.1" opacity="0.80"/>
<path d="M596.5 388.3L609.7 388.3" stroke="#333" stroke-width="5.1" opacity="0.80"/>
<path d="M583.8 387.5L599.8 384.8" stroke="#333" stroke-width="5.1" opacity="0.80"/>
<path d="M572.1 389.9L588.5 383.7" stroke="#333" stroke-width="5.1" opacity="0.80"/>
<path d="M617.1 399.5L619.4 403.2" stroke="#555" stroke-width="3.7" opacity="0.75"/>
<path d="M612.1 402.4L614.4 406" stroke="#555" stroke-width="3.7" opacity="0.75"/>
<path d="M604.7 406.4L607 410" stroke="#555" stroke-width="3.7" opacity="0.75"/>
<path d="M596.5 409.7L598.7 413" stroke="#555" stroke-width="3.7" opacity="0.75"/>
<path d="M587.2 411.7L589.9 416" stroke="#555" stroke-width="3.7" opacity="0.75"/>
<path d="M406.500 408C402 407 398 404.500 395 401" stroke="#333" stroke-width="6.9" opacity="0.85"/>
<path d="M409 410C404 411 400 411 397 409.500" stroke="#555" stroke-width="4.1" opacity="0.70"/>
<path d="M619 397.500C624 399 628 399.500 632 398.500" stroke="#444" stroke-width="5.5" opacity="0.80"/>
<path d="M551 408C555 404 560 404 565 407" stroke="#666" stroke-width="4.1" opacity="0.70"/>
<path d="M486 474C485 475.2 481.4 478.3 480 481C478.6 483.7 477.8 487.5 477.8 490.3C477.8 493.1 478.6 496 480 498C481.4 500 484.4 501.9 486.2 502.4C488 502.9 489.7 501.7 491 501C492.3 500.3 493.7 498.8 494.2 498.3" stroke="#484848" stroke-width="6" opacity="0.90"/>
<path d="M541 470C542.2 471.3 546.2 474.9 548 478C549.8 481.1 551.3 485.1 551.5 488.3C551.7 491.5 550.5 494.6 549 497C547.5 499.4 544.7 501.7 542.5 502.4C540.3 503.1 538.1 501.8 536 501C533.9 500.2 531 498.1 530 497.5" stroke="#484848" stroke-width="6" opacity="0.90"/>
<path d="M494 499C495 499.7 498 501.5 500 503C502 504.5 503.9 507 506 508C508.1 509 510.1 509.3 512.3 509C514.5 508.7 517 507.5 519 506C521 504.5 523.2 501 524 500" stroke="#555" stroke-width="5.1" opacity="0.85"/>
<path d="M489.500 499.500C492 496 497 496.500 500 500.500C496 501 492 501 489.500 499.500Z" fill="#2f2f2f"/>
<path d="M520 499C524 495.500 531 495 536 498.500C531 500 525 500.500 520 499Z" fill="#2f2f2f"/>
<path d="M494 392C493.7 396.7 492.5 410.3 492 420C491.5 429.7 491.5 441.7 491 450C490.5 458.3 489.3 466.7 489 470" stroke="#aaa" stroke-width="4.1" opacity="0.50"/>
<path d="M466 553C468.3 551.9 475.7 548.7 480 546.5C484.3 544.3 488.7 541.5 492 540C495.3 538.5 497.3 537.7 500 537.5C502.7 537.3 505.3 538.4 508 539C510.7 539.6 513.3 541.1 516 541C518.7 540.9 521.5 539.2 524 538.5C526.5 537.8 527.5 536.2 531 536.5C534.5 536.8 539.8 538.8 545 540.5C550.2 542.2 556.3 545.2 562 547C567.7 548.8 576.2 550.3 579 551" stroke="#555" stroke-width="5.1" opacity="0.85"/>
<path d="M464 552.5C466.7 552.8 474 553.7 480 554C486 554.3 493.3 554.5 500 554.5C506.7 554.5 512.5 554.1 520 554C527.5 553.9 537.5 554.2 545 554C552.5 553.8 559 553.1 565 552.5C571 551.9 578.3 550.8 581 550.5" stroke="#3c3c3c" stroke-width="6.9" opacity="0.90"/>
<path d="M480 564.6C481.7 565.8 486.7 570 490 572C493.3 574 495 575.4 500 576.7C505 578 512.6 580.3 520 580C527.4 579.7 538.5 576.5 544.5 574.7C550.5 572.9 552.7 571 556 569C559.3 567 563.1 563.7 564.5 562.6" stroke="#777" stroke-width="4.6" opacity="0.75"/>
<path d="M463 548C461.500 551 461.500 555 463.500 558" stroke="#777" stroke-width="4.1" opacity="0.70"/>
<path d="M582 546C584 549 584 553 582 556" stroke="#777" stroke-width="4.1" opacity="0.70"/>
<path d="M559.5 546.1L560.1 552" stroke="#666" stroke-width="3.2" opacity="0.50"/>
<path d="M552 558.3L552.8 563.9" stroke="#777" stroke-width="3.2" opacity="0.45"/>
<path d="M490.6 556.6L491.4 561.2" stroke="#777" stroke-width="3.2" opacity="0.45"/>
<path d="M503.2 548.9L503 553.4" stroke="#666" stroke-width="3.2" opacity="0.50"/>
<path d="M492.3 559.4L492.8 566.7" stroke="#777" stroke-width="3.2" opacity="0.45"/>
<path d="M482.1 548.8L481.6 554" stroke="#666" stroke-width="3.2" opacity="0.50"/>
<path d="M489.6 534L488.1 539.2" stroke="#666" stroke-width="3.2" opacity="0.62"/>
<path d="M489.8 534.8L488.3 541" stroke="#666" stroke-width="3.2" opacity="0.51"/>
<path d="M535.6 528.1L537.1 533.3" stroke="#666" stroke-width="3.2" opacity="0.41"/>
<path d="M528.6 518.9L530.1 525.6" stroke="#666" stroke-width="3.2" opacity="0.41"/>
<path d="M551.9 535.5L553.4 541.2" stroke="#666" stroke-width="3.2" opacity="0.52"/>
<path d="M484.5 538.8L483 544.4" stroke="#666" stroke-width="3.2" opacity="0.57"/>
<path d="M488.9 535L487.4 539.3" stroke="#666" stroke-width="3.2" opacity="0.56"/>
<path d="M496.1 525.2L494.6 530.9" stroke="#666" stroke-width="3.2" opacity="0.39"/>
<path d="M500.1 520.8L498.6 527.3" stroke="#666" stroke-width="3.2" opacity="0.65"/>
<path d="M539 525.2L540.5 532.2" stroke="#666" stroke-width="3.2" opacity="0.41"/>
<path d="M563.3 544.8L564.8 549" stroke="#666" stroke-width="3.2" opacity="0.64"/>
<path d="M505.9 513.7L504.4 520.6" stroke="#666" stroke-width="3.2" opacity="0.48"/>
<path d="M487.8 535.7L486.3 541.2" stroke="#666" stroke-width="3.2" opacity="0.42"/>
<path d="M491.6 531L490.1 537.4" stroke="#666" stroke-width="3.2" opacity="0.45"/>
<path d="M485 542.7L483.5 547.4" stroke="#666" stroke-width="3.2" opacity="0.60"/>
<path d="M562.3 540.1L563.8 546.3" stroke="#666" stroke-width="3.2" opacity="0.63"/>
<path d="M525.3 522.3L526.8 528.5" stroke="#666" stroke-width="3.2" opacity="0.55"/>
<path d="M487 539.6L485.5 544.5" stroke="#666" stroke-width="3.2" opacity="0.51"/>
<path d="M495 643.3C498 648.2 508 663.3 512.8 672.8C517.6 682.2 521 692.6 524 700C527 707.4 527.7 707 530.5 717C533.3 727 538.5 747.8 540.9 760C543.3 772.2 543.6 780.3 545 790C546.4 799.7 548.3 813.3 549 818" stroke="#555" stroke-width="6" opacity="0.90"/>
<path d="M540 760C541 765.8 543.8 784.7 546 795C548.2 805.3 551.8 817.5 553 822" stroke="#999" stroke-width="3.2" opacity="0.60"/>
<path d="M543 770C544 775 546.7 791 549 800C551.3 809 555.7 820 557 824" stroke="#aaa" stroke-width="3.2" opacity="0.50"/>
<path d="M656 540C656.3 544.2 657.3 557.6 658 565C658.7 572.4 658.5 576.7 660.4 584.3C662.3 591.9 666.3 604.8 669.2 610.8C672.1 616.8 674.9 617.5 678 620C681.1 622.5 686.3 625 688 626" stroke="#5a5a5a" stroke-width="5.1" opacity="0.85"/>
<path d="M688.4 625.6C687.7 629.7 685.7 642.6 684 650C682.3 657.4 680.7 663.3 678 670C675.3 676.7 671.4 683.6 668 690C664.6 696.4 662.1 700.5 657.4 708.2C652.7 715.9 645.4 727.4 640 736C634.6 744.6 630.7 751.7 625 760C619.3 768.3 611.3 778.7 606 786C600.7 793.3 596.3 798.2 593 804C589.7 809.8 587.9 815.2 586 821C584.1 826.8 582.2 835.8 581.5 838.8" stroke="#555" stroke-width="5.1" opacity="0.90"/>
<path d="M688 626C693.3 629.6 708 639.7 720 647.7C732 655.7 746.5 665.1 760 674C773.5 682.9 794.2 696.5 801 701" stroke="#666" stroke-width="4.1" opacity="0.85"/>
<path d="M663 585C667 605 671 625 673 650" stroke="#999" stroke-width="3.2" opacity="0.50"/>
</g>
<path d="M1003.500 124L1006 122.500L1008.500 124L1006 125.500Z M958 158.500L960 160L958 161.500Z M1056 158.500L1054 160L1056 161.500Z" fill="#333" stroke="none"/>
</svg>


  <div class="tx g" style="left:22px;top:142.500px;font-size:12.500px;letter-spacing:0">Pontal Vlalre</div>
  <div class="hr" style="top:164px"></div>

  <svg style="left:19px;top:175px" width="20" height="20" viewBox="0 0 20 20"><circle cx="9.700" cy="9.500" r="8.800" fill="#fff"/></svg>
  <div class="tx" style="left:19.700px;top:176px;width:18px;text-align:center;font-size:13px;line-height:17px;font-weight:bold;color:#444;letter-spacing:0">?</div>
  <div class="tx w" style="left:44px;top:175px;font-size:15px;line-height:19px;font-weight:bold;letter-spacing:-0.900px">Sketch</div>
  <svg style="left:225px;top:180px" width="14" height="9" viewBox="0 0 14 9" fill="none" stroke="#fff" stroke-width="1.300" stroke-linecap="round" stroke-linejoin="round"><path d="M1.500 2 L6.700 6.800 L12 2"/></svg>
  <div class="hr" style="top:204.500px"></div>

  <!-- pencil icons + glasses thumbs -->
  <svg style="left:0;top:0" width="259" height="810" viewBox="877 66 259 810">
    <defs>
      <g id="pc">
        <path d="M0 0 L9 -2.300 H50 L62 0 L50 2.300 H9 Z" fill="#fff"/>
        <path d="M13.500 -2.300 V2.300 M50 -2.300 V2.300" stroke="#8a8a8a" stroke-width=".8"/>
      </g>
      <g id="gl">
        <path d="M0 13.300 H9.600 L18.700 7.900 C22 4 26 0.500 29.700 -0.300 C33 0 36 2.500 39.700 4.200 C45 5 51 6 55.200 7.900 L58.800 13.300 H69.400 V40.300 H0 Z" fill="#fff"/>
        <g fill="none" stroke="#5e5e5e" stroke-width=".65" stroke-linecap="round">
          <path d="M4.100 18.800 C12 18 24 18 32.800 18.800 C32 24 27 29.700 17.800 29.700 C10 29.500 6 25 4.100 18.800 Z"/>
          <path d="M37 18.800 C45 18 57 18.500 65.200 19.700 C64 25 58 28.800 48.800 28.800 C42 28.500 38 24 37 18.800 Z"/>
          <path d="M32.800 19 C34 18 36 18 37 19"/>
          <path d="M32.600 19.500 C32.500 26 31.500 33 29.700 38.500 M37.200 19.500 C37.500 26 38.500 32 39.700 37"/>
          <path d="M18.700 7.900 C23 10 29 14 32.500 17.800 M55.200 7.900 C49 9.500 42 13.500 37.500 17.500"/>
          <path d="M14 12.500 C18 9.500 23 9 27 11 M36 3.500 C43 4.500 50 7.500 56 12.500"/>
          <path d="M65.200 19.700 C65 24 63.500 27.500 61.500 30 M60.500 21.500 C62 24 61 27.500 59 29.500 M62 23 L63.500 26"/>
        </g>
        <g fill="none" stroke="#444" stroke-width=".9" stroke-linecap="round">
          <path d="M20 21.800 C22.500 20 26.500 20 29 22 M41 21.500 C43.500 19.800 47.500 19.800 50.500 21.500"/>
        </g>
        <g fill="#6a6a6a" stroke="none">
          <ellipse cx="24.500" cy="23" rx="2.600" ry="1.800"/>
          <ellipse cx="45.500" cy="22.500" rx="2.600" ry="1.800"/>
        </g>
        <path d="M21 24.500 C23 26 26 26 28 24.500 M42 24 C44 25.500 47 25.500 49.500 24" fill="none" stroke="#777" stroke-width=".5"/>
      </g>
      <g id="nose"><path d="M31 36 C31 39 33.500 40 35 38.500 C37 40 40 39 40 36" fill="none" stroke="#666" stroke-width=".7"/></g>
      <g id="hand">
        <path d="M30 33 C29.500 30.500 31.500 29.500 32.800 30.800 L33.300 29.500 C33.800 27.800 36.400 27.800 36.900 29.500 L37.400 30.800 C38.800 29.500 41.500 30.500 41.500 33 L43 39 C43.500 43.500 40 46 36 46 C32 46 29 44 29.300 40 Z" fill="#fff" stroke="#777" stroke-width=".6"/>
        <path d="M33 31 V38 M37.200 31 V38 M31.500 41.500 C33.500 43.500 38 43.500 40.500 41.500" fill="none" stroke="#888" stroke-width=".5"/>
      </g>
    </defs>

    <!-- row 1 -->
    <use href="#pc" x="901" y="304.500"/>
    <path d="M936 303.500 L945 302.700" stroke="#999" stroke-width=".6"/>
    <!-- thumb A -->
    <g transform="translate(910 322.800) scale(1 .97)"><use href="#gl"/><use href="#nose"/></g>
    <!-- pencil 2 : grey segmented body -->
    <g transform="translate(1010 344)">
      <rect x="0" y="-2.300" width="12" height="4.600" fill="#9b9b9b"/>
      <rect x="13" y="-2.300" width="12" height="4.600" fill="#a9a9a9"/>
      <path d="M26 -2.600 H51 L64 0 L51 2.600 H26 Z" fill="#fff"/>
      <path d="M51 -2.600 V2.600" stroke="#8a8a8a" stroke-width=".8"/>
    </g>
    <!-- row 3 -->
    <g transform="translate(901 416.500)">
      <path d="M0 0 L8 -1.800 H50 L62 0 L50 1.800 H8 Z" fill="#fff"/>
      <path d="M10 -1.800 V1.800 M14 -1.800 V1.800 M27 -1.800 V1.800 M50 -1.800 V1.800" stroke="#8a8a8a" stroke-width=".8"/>
    </g>
    <g transform="translate(1009.500 416)">
      <path d="M0 0 L10 -2.700 H51 L66 0 L51 2.700 H10 Z" fill="#fff"/>
      <path d="M12.500 -2.700 V2.700 M51 -2.700 V2.700" stroke="#8a8a8a" stroke-width=".8"/>
      <rect x="33" y="-1.200" width="3" height="1.200" fill="#666"/>
    </g>
    <!-- row 4 -->
    <g transform="translate(900.500 468.800)">
      <path d="M0 0 L12 -2.800 H47 V2.800 H12 Z" fill="#fff"/>
      <path d="M47 -2.800 H53 L61 0 L53 2.800 H47 Z" fill="#3a3a3a"/>
      <path d="M14 -2.800 V2.800 M38.500 -2.800 V2.800" stroke="#8a8a8a" stroke-width=".8"/>
      <circle cx="54.500" cy="0" r=".8" fill="#ddd"/>
    </g>
    <g transform="translate(1009.500 468.800)">
      <path d="M0 0 L11 -3 H40 L53 0 L40 3 H11 Z" fill="#fff"/>
      <path d="M40 -3 V3" stroke="#8a8a8a" stroke-width=".8"/>
      <rect x="58" y="-2" width="29" height="4" fill="#3d3d3d"/>
    </g>
    <!-- scrollbar -->
    <rect x="1124" y="399" width="2" height="79" fill="#f2f2f2"/>
    <!-- row 5 -->
    <g transform="translate(1009 535.800)">
      <path d="M0 0 L11 -2.800 H37 V2.800 H11 Z" fill="#fff"/>
      <path d="M37 -2.600 H58 L64 0 L58 2.600 H37 Z" fill="#333"/>
      <path d="M11.500 -2.800 V2.800" stroke="#8a8a8a" stroke-width=".8"/>
      <path d="M45 0 H56" stroke="#555" stroke-width=".8"/>
    </g>
    <!-- info + close -->
    <circle cx="899" cy="585.300" r="4.700" fill="none" stroke="#6fa3da" stroke-width="1.100"/>
    <path d="M899.300 583 L898.700 587.800" stroke="#8ab4e0" stroke-width="1.100"/>
    <path d="M1109.200 581 L1117.600 589.400 M1117.600 581 L1109.200 589.400" stroke="#fff" stroke-width="1.400" stroke-linecap="round"/>
    <!-- thumbs B, C -->
    <g transform="translate(910 589)"><use href="#gl"/><use href="#nose"/></g>
    <g transform="translate(1017 589)"><use href="#gl"/><use href="#hand"/></g>
    <!-- thumb D -->
    <g transform="translate(910 745)"><use href="#gl"/><use href="#hand"/></g>
  </svg>

  <div class="lb" style="left:92px;top:231px">SKC</div>
  <div class="lb" style="left:131px;top:231px;letter-spacing:-0.15px">Comridital &nbsp;– 1V0</div>
  <div class="lb" style="left:203px;top:270px">2KC</div>
  <div class="hr" style="top:314px"></div>

  <div class="lb" style="left:92px;top:341px">1KO</div>
  <div class="lb" style="left:204px;top:341px">1V0</div>
  <div class="lb" style="left:92px;top:394px">2KC</div>
  <div class="hr" style="top:433px"></div>

  <div class="tx g" style="left:21.500px;top:448px">Perril Maler</div>
  <div class="tx w" style="left:21.500px;top:466.500px">Oatrmituel Tojwis</div>
  <div class="lb" style="left:198px;top:462.500px">–1V0</div>
  <div class="hr" style="top:505px"></div>

  <div class="hr" style="top:589.500px"></div>
  <div class="tx g" style="left:21.500px;top:608.500px">Satdl Dexlor</div>
  <div class="tx w" style="left:21.500px;top:626.500px">Oremritud Tojyre</div>
  <div class="hr" style="top:662.500px"></div>

  <div class="tx g" style="left:130.800px;top:676px">Pelnl Srtety</div>
  <div class="tx w" style="left:130.800px;top:693.500px">Oralnig: Ugjore</div>

  <div class="btn" style="left:15px;background:#4872a1">Cant</div>
  <div class="btn" style="left:136px;background:#12ab5b">Giak</div>
</div>

</div>
</body>
</html>
